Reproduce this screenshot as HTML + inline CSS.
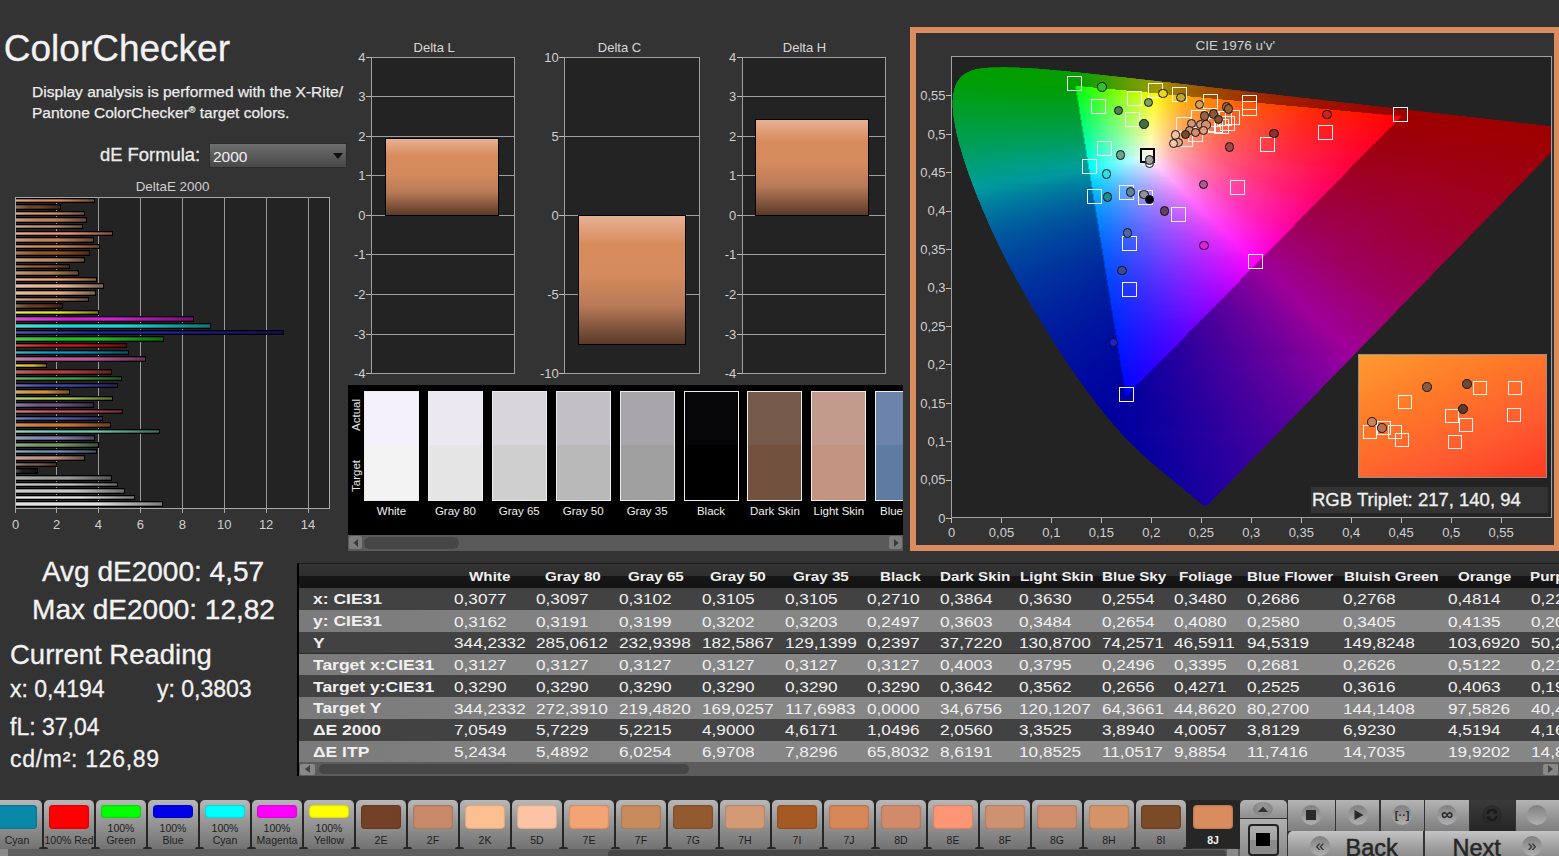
<!DOCTYPE html><html><head><meta charset="utf-8"><title>ColorChecker</title><style>
html,body{margin:0;padding:0;}body{width:1559px;height:856px;overflow:hidden;background:#333333;position:relative;font-family:"Liberation Sans", sans-serif;}
.a{position:absolute;box-sizing:border-box;}.t{position:absolute;white-space:nowrap;line-height:1;}
</style></head><body>
<div class="t" style="left:3.8px;top:29.7px;font-size:37px;color:#f2f2f2;-webkit-text-stroke:0.3px #f2f2f2;">ColorChecker</div>
<div class="t" style="left:32.0px;top:84.4px;font-size:15.5px;color:#ececec;-webkit-text-stroke:0.25px #ececec;">Display analysis is performed with the X-Rite/</div>
<div class="t" style="left:32.0px;top:104.9px;font-size:15.5px;color:#ececec;-webkit-text-stroke:0.25px #ececec;">Pantone ColorChecker<sup style="font-size:9px;vertical-align:5px">&reg;</sup> target colors.</div>
<div class="t" style="left:100.0px;top:146.4px;font-size:18.4px;color:#ececec;-webkit-text-stroke:0.3px #ececec;">dE Formula:</div>
<div class="a" style="left:208.5px;top:142.5px;width:138.5px;height:25.0px;background:linear-gradient(#6e6e6e,#5a5a5a 50%,#484848);border:1px solid #2c2c2c;border-radius:1px;"></div>
<div class="t" style="left:213.0px;top:149.4px;font-size:15.5px;color:#f0f0f0;">2000</div>
<svg class="a" style="left:331.5px;top:152px" width="12" height="8"><path d="M1 1H11L6 7Z" fill="#101010"/></svg>
<div class="t" style="left:-127.5px;width:600px;text-align:center;top:180.2px;font-size:13.4px;color:#d0d0d0;">DeltaE 2000</div>
<div class="a" style="left:14.9px;top:197.0px;width:315.6px;height:311.5px;background:#232323;border:1px solid #a8a8a8;"></div>
<div class="a" style="left:56.0px;top:197.0px;width:1.0px;height:310.5px;background:#9a9a9a;"></div>
<div class="a" style="left:97.9px;top:197.0px;width:1.0px;height:310.5px;background:#9a9a9a;"></div>
<div class="a" style="left:139.9px;top:197.0px;width:1.0px;height:310.5px;background:#9a9a9a;"></div>
<div class="a" style="left:181.8px;top:197.0px;width:1.0px;height:310.5px;background:#9a9a9a;"></div>
<div class="a" style="left:223.7px;top:197.0px;width:1.0px;height:310.5px;background:#9a9a9a;"></div>
<div class="a" style="left:265.6px;top:197.0px;width:1.0px;height:310.5px;background:#9a9a9a;"></div>
<div class="a" style="left:307.5px;top:197.0px;width:1.0px;height:310.5px;background:#9a9a9a;"></div>
<div class="a" style="left:15.0px;top:507.5px;width:1.0px;height:5.0px;background:#a8a8a8;"></div>
<div class="t" style="left:-284.5px;width:600px;text-align:center;top:518.0px;font-size:13px;color:#d0d0d0;">0</div>
<div class="a" style="left:56.0px;top:507.5px;width:1.0px;height:5.0px;background:#a8a8a8;"></div>
<div class="t" style="left:-243.5px;width:600px;text-align:center;top:518.0px;font-size:13px;color:#d0d0d0;">2</div>
<div class="a" style="left:97.9px;top:507.5px;width:1.0px;height:5.0px;background:#a8a8a8;"></div>
<div class="t" style="left:-201.6px;width:600px;text-align:center;top:518.0px;font-size:13px;color:#d0d0d0;">4</div>
<div class="a" style="left:139.9px;top:507.5px;width:1.0px;height:5.0px;background:#a8a8a8;"></div>
<div class="t" style="left:-159.6px;width:600px;text-align:center;top:518.0px;font-size:13px;color:#d0d0d0;">6</div>
<div class="a" style="left:181.8px;top:507.5px;width:1.0px;height:5.0px;background:#a8a8a8;"></div>
<div class="t" style="left:-117.7px;width:600px;text-align:center;top:518.0px;font-size:13px;color:#d0d0d0;">8</div>
<div class="a" style="left:223.7px;top:507.5px;width:1.0px;height:5.0px;background:#a8a8a8;"></div>
<div class="t" style="left:-75.8px;width:600px;text-align:center;top:518.0px;font-size:13px;color:#d0d0d0;">10</div>
<div class="a" style="left:265.6px;top:507.5px;width:1.0px;height:5.0px;background:#a8a8a8;"></div>
<div class="t" style="left:-33.9px;width:600px;text-align:center;top:518.0px;font-size:13px;color:#d0d0d0;">12</div>
<div class="a" style="left:307.5px;top:507.5px;width:1.0px;height:5.0px;background:#a8a8a8;"></div>
<div class="t" style="left:8.0px;width:600px;text-align:center;top:518.0px;font-size:13px;color:#d0d0d0;">14</div>
<div class="a" style="left:16.0px;top:197.5px;width:78.5px;height:5.6px;background:linear-gradient(180deg,rgba(0,0,0,.5) 0%,rgba(0,0,0,0) 45%,rgba(0,0,0,0) 55%,rgba(0,0,0,.5) 100%),linear-gradient(90deg,#e1a886 0%,#d88c5e 30%,#d88c5e 55%,#764d33 100%);border:1px solid #000;border-left:none;"></div>
<div class="a" style="left:16.0px;top:204.1px;width:45.4px;height:5.6px;background:linear-gradient(180deg,rgba(0,0,0,.5) 0%,rgba(0,0,0,0) 45%,rgba(0,0,0,0) 55%,rgba(0,0,0,.5) 100%),linear-gradient(90deg,#9c775c 0%,#7b4a26 30%,#7b4a26 55%,#432814 100%);border:1px solid #000;border-left:none;"></div>
<div class="a" style="left:16.0px;top:210.7px;width:68.7px;height:5.6px;background:linear-gradient(180deg,rgba(0,0,0,.5) 0%,rgba(0,0,0,0) 45%,rgba(0,0,0,0) 55%,rgba(0,0,0,.5) 100%),linear-gradient(90deg,#deae8d 0%,#d49468 30%,#d49468 55%,#745139 100%);border:1px solid #000;border-left:none;"></div>
<div class="a" style="left:16.0px;top:217.3px;width:71.2px;height:5.6px;background:linear-gradient(180deg,rgba(0,0,0,.5) 0%,rgba(0,0,0,0) 45%,rgba(0,0,0,0) 55%,rgba(0,0,0,.5) 100%),linear-gradient(90deg,#dbaa90 0%,#cf8e6c 30%,#cf8e6c 55%,#714e3b 100%);border:1px solid #000;border-left:none;"></div>
<div class="a" style="left:16.0px;top:223.9px;width:66.8px;height:5.6px;background:linear-gradient(180deg,rgba(0,0,0,.5) 0%,rgba(0,0,0,0) 45%,rgba(0,0,0,0) 55%,rgba(0,0,0,.5) 100%),linear-gradient(90deg,#dbad93 0%,#cf9270 30%,#cf9270 55%,#71503d 100%);border:1px solid #000;border-left:none;"></div>
<div class="a" style="left:16.0px;top:230.5px;width:96.6px;height:5.6px;background:linear-gradient(180deg,rgba(0,0,0,.5) 0%,rgba(0,0,0,0) 45%,rgba(0,0,0,0) 55%,rgba(0,0,0,.5) 100%),linear-gradient(90deg,#fcb096 0%,#fc9674 30%,#fc9674 55%,#8a523f 100%);border:1px solid #000;border-left:none;"></div>
<div class="a" style="left:16.0px;top:237.1px;width:77.7px;height:5.6px;background:linear-gradient(180deg,rgba(0,0,0,.5) 0%,rgba(0,0,0,0) 45%,rgba(0,0,0,0) 55%,rgba(0,0,0,.5) 100%),linear-gradient(90deg,#dda88e 0%,#d28b69 30%,#d28b69 55%,#734c39 100%);border:1px solid #000;border-left:none;"></div>
<div class="a" style="left:16.0px;top:243.7px;width:83.6px;height:5.6px;background:linear-gradient(180deg,rgba(0,0,0,.5) 0%,rgba(0,0,0,0) 45%,rgba(0,0,0,0) 55%,rgba(0,0,0,.5) 100%),linear-gradient(90deg,#e1a581 0%,#d88758 30%,#d88758 55%,#764a30 100%);border:1px solid #000;border-left:none;"></div>
<div class="a" style="left:16.0px;top:250.4px;width:73.7px;height:5.6px;background:linear-gradient(180deg,rgba(0,0,0,.5) 0%,rgba(0,0,0,0) 45%,rgba(0,0,0,0) 55%,rgba(0,0,0,.5) 100%),linear-gradient(90deg,#bb835a 0%,#a55a24 30%,#a55a24 55%,#5a3113 100%);border:1px solid #000;border-left:none;"></div>
<div class="a" style="left:16.0px;top:257.0px;width:68.7px;height:5.6px;background:linear-gradient(180deg,rgba(0,0,0,.5) 0%,rgba(0,0,0,0) 45%,rgba(0,0,0,0) 55%,rgba(0,0,0,.5) 100%),linear-gradient(90deg,#deb396 0%,#d49a74 30%,#d49a74 55%,#74543f 100%);border:1px solid #000;border-left:none;"></div>
<div class="a" style="left:16.0px;top:263.6px;width:53.8px;height:5.6px;background:linear-gradient(180deg,rgba(0,0,0,.5) 0%,rgba(0,0,0,0) 45%,rgba(0,0,0,0) 55%,rgba(0,0,0,.5) 100%),linear-gradient(90deg,#ae8363 0%,#935a30 30%,#935a30 55%,#50311a 100%);border:1px solid #000;border-left:none;"></div>
<div class="a" style="left:16.0px;top:270.2px;width:62.8px;height:5.6px;background:linear-gradient(180deg,rgba(0,0,0,.5) 0%,rgba(0,0,0,0) 45%,rgba(0,0,0,0) 55%,rgba(0,0,0,.5) 100%),linear-gradient(90deg,#d5a884 0%,#c88c5c 30%,#c88c5c 55%,#6e4d32 100%);border:1px solid #000;border-left:none;"></div>
<div class="a" style="left:16.0px;top:276.8px;width:80.6px;height:5.6px;background:linear-gradient(180deg,rgba(0,0,0,.5) 0%,rgba(0,0,0,0) 45%,rgba(0,0,0,0) 55%,rgba(0,0,0,.5) 100%),linear-gradient(90deg,#f6ba96 0%,#f4a474 30%,#f4a474 55%,#865a3f 100%);border:1px solid #000;border-left:none;"></div>
<div class="a" style="left:16.0px;top:283.4px;width:87.6px;height:5.6px;background:linear-gradient(180deg,rgba(0,0,0,.5) 0%,rgba(0,0,0,0) 45%,rgba(0,0,0,0) 55%,rgba(0,0,0,.5) 100%),linear-gradient(90deg,#fcd2ba 0%,#fcc4a4 30%,#fcc4a4 55%,#8a6b5a 100%);border:1px solid #000;border-left:none;"></div>
<div class="a" style="left:16.0px;top:290.0px;width:80.2px;height:5.6px;background:linear-gradient(180deg,rgba(0,0,0,.5) 0%,rgba(0,0,0,0) 45%,rgba(0,0,0,0) 55%,rgba(0,0,0,.5) 100%),linear-gradient(90deg,#fccfab 0%,#fcc090 30%,#fcc090 55%,#8a694f 100%);border:1px solid #000;border-left:none;"></div>
<div class="a" style="left:16.0px;top:296.6px;width:72.7px;height:5.6px;background:linear-gradient(180deg,rgba(0,0,0,.5) 0%,rgba(0,0,0,0) 45%,rgba(0,0,0,0) 55%,rgba(0,0,0,.5) 100%),linear-gradient(90deg,#d5a78d 0%,#c88a68 30%,#c88a68 55%,#6e4b39 100%);border:1px solid #000;border-left:none;"></div>
<div class="a" style="left:16.0px;top:303.2px;width:46.9px;height:5.6px;background:linear-gradient(180deg,rgba(0,0,0,.5) 0%,rgba(0,0,0,0) 45%,rgba(0,0,0,0) 55%,rgba(0,0,0,.5) 100%),linear-gradient(90deg,#966f5d 0%,#744028 30%,#744028 55%,#3f2316 100%);border:1px solid #000;border-left:none;"></div>
<div class="a" style="left:16.0px;top:309.8px;width:82.7px;height:5.6px;background:linear-gradient(180deg,rgba(0,0,0,.5) 0%,rgba(0,0,0,0) 45%,rgba(0,0,0,0) 55%,rgba(0,0,0,.5) 100%),linear-gradient(90deg,#ede757 0%,#e8e020 30%,#e8e020 55%,#7f7b11 100%);border:1px solid #000;border-left:none;"></div>
<div class="a" style="left:16.0px;top:316.4px;width:178.1px;height:5.6px;background:linear-gradient(180deg,rgba(0,0,0,.5) 0%,rgba(0,0,0,0) 45%,rgba(0,0,0,0) 55%,rgba(0,0,0,.5) 100%),linear-gradient(90deg,#ed57ed 0%,#e820e8 30%,#e820e8 55%,#7f117f 100%);border:1px solid #000;border-left:none;"></div>
<div class="a" style="left:16.0px;top:323.0px;width:195.1px;height:5.6px;background:linear-gradient(180deg,rgba(0,0,0,.5) 0%,rgba(0,0,0,0) 45%,rgba(0,0,0,0) 55%,rgba(0,0,0,.5) 100%),linear-gradient(90deg,#57eded 0%,#20e8e8 30%,#20e8e8 55%,#117f7f 100%);border:1px solid #000;border-left:none;"></div>
<div class="a" style="left:16.0px;top:329.6px;width:268.0px;height:5.6px;background:linear-gradient(180deg,rgba(0,0,0,.5) 0%,rgba(0,0,0,0) 45%,rgba(0,0,0,0) 55%,rgba(0,0,0,.5) 100%),linear-gradient(90deg,#5757b7 0%,#2020a0 30%,#2020a0 55%,#111158 100%);border:1px solid #000;border-left:none;"></div>
<div class="a" style="left:16.0px;top:336.2px;width:147.9px;height:5.6px;background:linear-gradient(180deg,rgba(0,0,0,.5) 0%,rgba(0,0,0,0) 45%,rgba(0,0,0,0) 55%,rgba(0,0,0,.5) 100%),linear-gradient(90deg,#57db57 0%,#20d020 30%,#20d020 55%,#117211 100%);border:1px solid #000;border-left:none;"></div>
<div class="a" style="left:16.0px;top:342.9px;width:110.6px;height:5.6px;background:linear-gradient(180deg,rgba(0,0,0,.5) 0%,rgba(0,0,0,0) 45%,rgba(0,0,0,0) 55%,rgba(0,0,0,.5) 100%),linear-gradient(90deg,#db5151 0%,#d01818 30%,#d01818 55%,#720d0d 100%);border:1px solid #000;border-left:none;"></div>
<div class="a" style="left:16.0px;top:349.5px;width:112.7px;height:5.6px;background:linear-gradient(180deg,rgba(0,0,0,.5) 0%,rgba(0,0,0,0) 45%,rgba(0,0,0,0) 55%,rgba(0,0,0,.5) 100%),linear-gradient(90deg,#47b1cf 0%,#0a98c0 30%,#0a98c0 55%,#055369 100%);border:1px solid #000;border-left:none;"></div>
<div class="a" style="left:16.0px;top:356.1px;width:129.7px;height:5.6px;background:linear-gradient(180deg,rgba(0,0,0,.5) 0%,rgba(0,0,0,0) 45%,rgba(0,0,0,0) 55%,rgba(0,0,0,.5) 100%),linear-gradient(90deg,#db87bd 0%,#d060a8 30%,#d060a8 55%,#72345c 100%);border:1px solid #000;border-left:none;"></div>
<div class="a" style="left:16.0px;top:362.7px;width:30.7px;height:5.6px;background:linear-gradient(180deg,rgba(0,0,0,.5) 0%,rgba(0,0,0,0) 45%,rgba(0,0,0,0) 55%,rgba(0,0,0,.5) 100%),linear-gradient(90deg,#edd557 0%,#e7c71f 30%,#e7c71f 55%,#7f6d11 100%);border:1px solid #000;border-left:none;"></div>
<div class="a" style="left:16.0px;top:369.3px;width:95.7px;height:5.6px;background:linear-gradient(180deg,rgba(0,0,0,.5) 0%,rgba(0,0,0,0) 45%,rgba(0,0,0,0) 55%,rgba(0,0,0,.5) 100%),linear-gradient(90deg,#cf6f75 0%,#c04048 30%,#c04048 55%,#692327 100%);border:1px solid #000;border-left:none;"></div>
<div class="a" style="left:16.0px;top:375.9px;width:105.8px;height:5.6px;background:linear-gradient(180deg,rgba(0,0,0,.5) 0%,rgba(0,0,0,0) 45%,rgba(0,0,0,0) 55%,rgba(0,0,0,.5) 100%),linear-gradient(90deg,#74b776 0%,#46a049 30%,#46a049 55%,#265828 100%);border:1px solid #000;border-left:none;"></div>
<div class="a" style="left:16.0px;top:382.5px;width:102.0px;height:5.6px;background:linear-gradient(180deg,rgba(0,0,0,.5) 0%,rgba(0,0,0,0) 45%,rgba(0,0,0,0) 55%,rgba(0,0,0,.5) 100%),linear-gradient(90deg,#6f75bd 0%,#4048a8 30%,#4048a8 55%,#23275c 100%);border:1px solid #000;border-left:none;"></div>
<div class="a" style="left:16.0px;top:389.1px;width:53.8px;height:5.6px;background:linear-gradient(180deg,rgba(0,0,0,.5) 0%,rgba(0,0,0,0) 45%,rgba(0,0,0,0) 55%,rgba(0,0,0,.5) 100%),linear-gradient(90deg,#e7b76f 0%,#e0a040 30%,#e0a040 55%,#7b5823 100%);border:1px solid #000;border-left:none;"></div>
<div class="a" style="left:16.0px;top:395.7px;width:97.0px;height:5.6px;background:linear-gradient(180deg,rgba(0,0,0,.5) 0%,rgba(0,0,0,0) 45%,rgba(0,0,0,0) 55%,rgba(0,0,0,.5) 100%),linear-gradient(90deg,#bdd57b 0%,#a8c850 30%,#a8c850 55%,#5c6e2c 100%);border:1px solid #000;border-left:none;"></div>
<div class="a" style="left:16.0px;top:402.3px;width:77.7px;height:5.6px;background:linear-gradient(180deg,rgba(0,0,0,.5) 0%,rgba(0,0,0,0) 45%,rgba(0,0,0,0) 55%,rgba(0,0,0,.5) 100%),linear-gradient(90deg,#9b83ab 0%,#7a5a90 30%,#7a5a90 55%,#43314f 100%);border:1px solid #000;border-left:none;"></div>
<div class="a" style="left:16.0px;top:408.9px;width:106.8px;height:5.6px;background:linear-gradient(180deg,rgba(0,0,0,.5) 0%,rgba(0,0,0,0) 45%,rgba(0,0,0,0) 55%,rgba(0,0,0,.5) 100%),linear-gradient(90deg,#d57b87 0%,#c85060 30%,#c85060 55%,#6e2c34 100%);border:1px solid #000;border-left:none;"></div>
<div class="a" style="left:16.0px;top:415.5px;width:86.9px;height:5.6px;background:linear-gradient(180deg,rgba(0,0,0,.5) 0%,rgba(0,0,0,0) 45%,rgba(0,0,0,0) 55%,rgba(0,0,0,.5) 100%),linear-gradient(90deg,#7b87c3 0%,#5060b0 30%,#5060b0 55%,#2c3460 100%);border:1px solid #000;border-left:none;"></div>
<div class="a" style="left:16.0px;top:422.1px;width:94.7px;height:5.6px;background:linear-gradient(180deg,rgba(0,0,0,.5) 0%,rgba(0,0,0,0) 45%,rgba(0,0,0,0) 55%,rgba(0,0,0,.5) 100%),linear-gradient(90deg,#e79f63 0%,#e08030 30%,#e08030 55%,#7b461a 100%);border:1px solid #000;border-left:none;"></div>
<div class="a" style="left:16.0px;top:428.7px;width:143.9px;height:5.6px;background:linear-gradient(180deg,rgba(0,0,0,.5) 0%,rgba(0,0,0,0) 45%,rgba(0,0,0,0) 55%,rgba(0,0,0,.5) 100%),linear-gradient(90deg,#93d5c3 0%,#70c8b0 30%,#70c8b0 55%,#3d6e60 100%);border:1px solid #000;border-left:none;"></div>
<div class="a" style="left:16.0px;top:435.4px;width:78.5px;height:5.6px;background:linear-gradient(180deg,rgba(0,0,0,.5) 0%,rgba(0,0,0,0) 45%,rgba(0,0,0,0) 55%,rgba(0,0,0,.5) 100%),linear-gradient(90deg,#ababcf 0%,#9090c0 30%,#9090c0 55%,#4f4f69 100%);border:1px solid #000;border-left:none;"></div>
<div class="a" style="left:16.0px;top:442.0px;width:82.7px;height:5.6px;background:linear-gradient(180deg,rgba(0,0,0,.5) 0%,rgba(0,0,0,0) 45%,rgba(0,0,0,0) 55%,rgba(0,0,0,.5) 100%),linear-gradient(90deg,#9fb793 0%,#80a070 30%,#80a070 55%,#46583d 100%);border:1px solid #000;border-left:none;"></div>
<div class="a" style="left:16.0px;top:448.6px;width:80.8px;height:5.6px;background:linear-gradient(180deg,rgba(0,0,0,.5) 0%,rgba(0,0,0,0) 45%,rgba(0,0,0,0) 55%,rgba(0,0,0,.5) 100%),linear-gradient(90deg,#93abc9 0%,#7090b8 30%,#7090b8 55%,#3d4f65 100%);border:1px solid #000;border-left:none;"></div>
<div class="a" style="left:16.0px;top:455.2px;width:68.7px;height:5.6px;background:linear-gradient(180deg,rgba(0,0,0,.5) 0%,rgba(0,0,0,0) 45%,rgba(0,0,0,0) 55%,rgba(0,0,0,.5) 100%),linear-gradient(90deg,#dbb7ab 0%,#d0a090 30%,#d0a090 55%,#72584f 100%);border:1px solid #000;border-left:none;"></div>
<div class="a" style="left:16.0px;top:461.8px;width:41.4px;height:5.6px;background:linear-gradient(180deg,rgba(0,0,0,.5) 0%,rgba(0,0,0,0) 45%,rgba(0,0,0,0) 55%,rgba(0,0,0,.5) 100%),linear-gradient(90deg,#9f877b 0%,#806050 30%,#806050 55%,#46342c 100%);border:1px solid #000;border-left:none;"></div>
<div class="a" style="left:16.0px;top:468.4px;width:21.9px;height:5.6px;background:linear-gradient(180deg,rgba(0,0,0,.5) 0%,rgba(0,0,0,0) 45%,rgba(0,0,0,0) 55%,rgba(0,0,0,.5) 100%),linear-gradient(90deg,#575757 0%,#202020 30%,#202020 55%,#111111 100%);border:1px solid #000;border-left:none;"></div>
<div class="a" style="left:16.0px;top:475.0px;width:95.7px;height:5.6px;background:linear-gradient(180deg,rgba(0,0,0,.5) 0%,rgba(0,0,0,0) 45%,rgba(0,0,0,0) 55%,rgba(0,0,0,.5) 100%),linear-gradient(90deg,#bdbdbd 0%,#a8a8a8 30%,#a8a8a8 55%,#5c5c5c 100%);border:1px solid #000;border-left:none;"></div>
<div class="a" style="left:16.0px;top:481.6px;width:102.0px;height:5.6px;background:linear-gradient(180deg,rgba(0,0,0,.5) 0%,rgba(0,0,0,0) 45%,rgba(0,0,0,0) 55%,rgba(0,0,0,.5) 100%),linear-gradient(90deg,#cfcfcf 0%,#c0c0c0 30%,#c0c0c0 55%,#696969 100%);border:1px solid #000;border-left:none;"></div>
<div class="a" style="left:16.0px;top:488.2px;width:108.7px;height:5.6px;background:linear-gradient(180deg,rgba(0,0,0,.5) 0%,rgba(0,0,0,0) 45%,rgba(0,0,0,0) 55%,rgba(0,0,0,.5) 100%),linear-gradient(90deg,#e1e1e1 0%,#d8d8d8 30%,#d8d8d8 55%,#767676 100%);border:1px solid #000;border-left:none;"></div>
<div class="a" style="left:16.0px;top:494.8px;width:118.8px;height:5.6px;background:linear-gradient(180deg,rgba(0,0,0,.5) 0%,rgba(0,0,0,0) 45%,rgba(0,0,0,0) 55%,rgba(0,0,0,.5) 100%),linear-gradient(90deg,#ededed 0%,#e8e8e8 30%,#e8e8e8 55%,#7f7f7f 100%);border:1px solid #000;border-left:none;"></div>
<div class="a" style="left:16.0px;top:501.4px;width:146.9px;height:5.6px;background:linear-gradient(180deg,rgba(0,0,0,.5) 0%,rgba(0,0,0,0) 45%,rgba(0,0,0,0) 55%,rgba(0,0,0,.5) 100%),linear-gradient(90deg,#f9f9f9 0%,#f8f8f8 30%,#f8f8f8 55%,#888888 100%);border:1px solid #000;border-left:none;"></div>
<div class="t" style="left:134.2px;width:600px;text-align:center;top:40.8px;font-size:13px;color:#d8d8d8;">Delta L</div>
<div class="a" style="left:371.0px;top:56.7px;width:144.0px;height:317.3px;background:#232323;border:1px solid #a0a0a0;"></div>
<div class="a" style="left:366.0px;top:56.7px;width:5.0px;height:1.0px;background:#c0c0c0;"></div>
<div class="t" style="left:-234.5px;width:600px;text-align:right;top:50.7px;font-size:13px;color:#d0d0d0;">4</div>
<div class="a" style="left:371.0px;top:96.2px;width:143.0px;height:1.0px;background:#a0a0a0;"></div>
<div class="a" style="left:366.0px;top:96.2px;width:5.0px;height:1.0px;background:#c0c0c0;"></div>
<div class="t" style="left:-234.5px;width:600px;text-align:right;top:90.2px;font-size:13px;color:#d0d0d0;">3</div>
<div class="a" style="left:371.0px;top:135.8px;width:143.0px;height:1.0px;background:#a0a0a0;"></div>
<div class="a" style="left:366.0px;top:135.8px;width:5.0px;height:1.0px;background:#c0c0c0;"></div>
<div class="t" style="left:-234.5px;width:600px;text-align:right;top:129.8px;font-size:13px;color:#d0d0d0;">2</div>
<div class="a" style="left:371.0px;top:175.3px;width:143.0px;height:1.0px;background:#a0a0a0;"></div>
<div class="a" style="left:366.0px;top:175.3px;width:5.0px;height:1.0px;background:#c0c0c0;"></div>
<div class="t" style="left:-234.5px;width:600px;text-align:right;top:169.3px;font-size:13px;color:#d0d0d0;">1</div>
<div class="a" style="left:371.0px;top:214.9px;width:143.0px;height:1.0px;background:#a0a0a0;"></div>
<div class="a" style="left:366.0px;top:214.9px;width:5.0px;height:1.0px;background:#c0c0c0;"></div>
<div class="t" style="left:-234.5px;width:600px;text-align:right;top:208.8px;font-size:13px;color:#d0d0d0;">0</div>
<div class="a" style="left:371.0px;top:254.4px;width:143.0px;height:1.0px;background:#a0a0a0;"></div>
<div class="a" style="left:366.0px;top:254.4px;width:5.0px;height:1.0px;background:#c0c0c0;"></div>
<div class="t" style="left:-234.5px;width:600px;text-align:right;top:248.4px;font-size:13px;color:#d0d0d0;">-1</div>
<div class="a" style="left:371.0px;top:293.9px;width:143.0px;height:1.0px;background:#a0a0a0;"></div>
<div class="a" style="left:366.0px;top:293.9px;width:5.0px;height:1.0px;background:#c0c0c0;"></div>
<div class="t" style="left:-234.5px;width:600px;text-align:right;top:287.9px;font-size:13px;color:#d0d0d0;">-2</div>
<div class="a" style="left:371.0px;top:333.5px;width:143.0px;height:1.0px;background:#a0a0a0;"></div>
<div class="a" style="left:366.0px;top:333.5px;width:5.0px;height:1.0px;background:#c0c0c0;"></div>
<div class="t" style="left:-234.5px;width:600px;text-align:right;top:327.5px;font-size:13px;color:#d0d0d0;">-3</div>
<div class="a" style="left:366.0px;top:373.0px;width:5.0px;height:1.0px;background:#c0c0c0;"></div>
<div class="t" style="left:-234.5px;width:600px;text-align:right;top:367.0px;font-size:13px;color:#d0d0d0;">-4</div>
<div class="a" style="left:385.4px;top:138.0px;width:114.1px;height:78.0px;background:linear-gradient(#e8b194 0%,#d88c5e 22%,#d68b5e 45%,#b87a58 70%,#5a3a28 100%);border:1px solid #000;"></div>
<div class="t" style="left:319.5px;width:600px;text-align:center;top:40.8px;font-size:13px;color:#d8d8d8;">Delta C</div>
<div class="a" style="left:564.3px;top:56.7px;width:135.7px;height:317.3px;background:#232323;border:1px solid #a0a0a0;"></div>
<div class="a" style="left:559.3px;top:56.7px;width:5.0px;height:1.0px;background:#c0c0c0;"></div>
<div class="t" style="left:-41.2px;width:600px;text-align:right;top:50.7px;font-size:13px;color:#d0d0d0;">10</div>
<div class="a" style="left:564.3px;top:135.8px;width:134.7px;height:1.0px;background:#a0a0a0;"></div>
<div class="a" style="left:559.3px;top:135.8px;width:5.0px;height:1.0px;background:#c0c0c0;"></div>
<div class="t" style="left:-41.2px;width:600px;text-align:right;top:129.8px;font-size:13px;color:#d0d0d0;">5</div>
<div class="a" style="left:564.3px;top:214.9px;width:134.7px;height:1.0px;background:#a0a0a0;"></div>
<div class="a" style="left:559.3px;top:214.9px;width:5.0px;height:1.0px;background:#c0c0c0;"></div>
<div class="t" style="left:-41.2px;width:600px;text-align:right;top:208.8px;font-size:13px;color:#d0d0d0;">0</div>
<div class="a" style="left:564.3px;top:293.9px;width:134.7px;height:1.0px;background:#a0a0a0;"></div>
<div class="a" style="left:559.3px;top:293.9px;width:5.0px;height:1.0px;background:#c0c0c0;"></div>
<div class="t" style="left:-41.2px;width:600px;text-align:right;top:287.9px;font-size:13px;color:#d0d0d0;">-5</div>
<div class="a" style="left:559.3px;top:373.0px;width:5.0px;height:1.0px;background:#c0c0c0;"></div>
<div class="t" style="left:-41.2px;width:600px;text-align:right;top:367.0px;font-size:13px;color:#d0d0d0;">-10</div>
<div class="a" style="left:578.3px;top:214.5px;width:107.5px;height:130.5px;background:linear-gradient(#e8b194 0%,#d88c5e 22%,#d68b5e 45%,#b87a58 70%,#5a3a28 100%);border:1px solid #000;"></div>
<div class="t" style="left:504.5px;width:600px;text-align:center;top:40.8px;font-size:13px;color:#d8d8d8;">Delta H</div>
<div class="a" style="left:741.8px;top:56.7px;width:143.8px;height:317.3px;background:#232323;border:1px solid #a0a0a0;"></div>
<div class="a" style="left:736.8px;top:56.7px;width:5.0px;height:1.0px;background:#c0c0c0;"></div>
<div class="t" style="left:136.3px;width:600px;text-align:right;top:50.7px;font-size:13px;color:#d0d0d0;">4</div>
<div class="a" style="left:741.8px;top:96.2px;width:142.8px;height:1.0px;background:#a0a0a0;"></div>
<div class="a" style="left:736.8px;top:96.2px;width:5.0px;height:1.0px;background:#c0c0c0;"></div>
<div class="t" style="left:136.3px;width:600px;text-align:right;top:90.2px;font-size:13px;color:#d0d0d0;">3</div>
<div class="a" style="left:741.8px;top:135.8px;width:142.8px;height:1.0px;background:#a0a0a0;"></div>
<div class="a" style="left:736.8px;top:135.8px;width:5.0px;height:1.0px;background:#c0c0c0;"></div>
<div class="t" style="left:136.3px;width:600px;text-align:right;top:129.8px;font-size:13px;color:#d0d0d0;">2</div>
<div class="a" style="left:741.8px;top:175.3px;width:142.8px;height:1.0px;background:#a0a0a0;"></div>
<div class="a" style="left:736.8px;top:175.3px;width:5.0px;height:1.0px;background:#c0c0c0;"></div>
<div class="t" style="left:136.3px;width:600px;text-align:right;top:169.3px;font-size:13px;color:#d0d0d0;">1</div>
<div class="a" style="left:741.8px;top:214.9px;width:142.8px;height:1.0px;background:#a0a0a0;"></div>
<div class="a" style="left:736.8px;top:214.9px;width:5.0px;height:1.0px;background:#c0c0c0;"></div>
<div class="t" style="left:136.3px;width:600px;text-align:right;top:208.8px;font-size:13px;color:#d0d0d0;">0</div>
<div class="a" style="left:741.8px;top:254.4px;width:142.8px;height:1.0px;background:#a0a0a0;"></div>
<div class="a" style="left:736.8px;top:254.4px;width:5.0px;height:1.0px;background:#c0c0c0;"></div>
<div class="t" style="left:136.3px;width:600px;text-align:right;top:248.4px;font-size:13px;color:#d0d0d0;">-1</div>
<div class="a" style="left:741.8px;top:293.9px;width:142.8px;height:1.0px;background:#a0a0a0;"></div>
<div class="a" style="left:736.8px;top:293.9px;width:5.0px;height:1.0px;background:#c0c0c0;"></div>
<div class="t" style="left:136.3px;width:600px;text-align:right;top:287.9px;font-size:13px;color:#d0d0d0;">-2</div>
<div class="a" style="left:741.8px;top:333.5px;width:142.8px;height:1.0px;background:#a0a0a0;"></div>
<div class="a" style="left:736.8px;top:333.5px;width:5.0px;height:1.0px;background:#c0c0c0;"></div>
<div class="t" style="left:136.3px;width:600px;text-align:right;top:327.5px;font-size:13px;color:#d0d0d0;">-3</div>
<div class="a" style="left:736.8px;top:373.0px;width:5.0px;height:1.0px;background:#c0c0c0;"></div>
<div class="t" style="left:136.3px;width:600px;text-align:right;top:367.0px;font-size:13px;color:#d0d0d0;">-4</div>
<div class="a" style="left:755.2px;top:119.0px;width:114.3px;height:97.0px;background:linear-gradient(#e8b194 0%,#d88c5e 22%,#d68b5e 45%,#b87a58 70%,#5a3a28 100%);border:1px solid #000;"></div>
<div class="a" style="left:0;top:0;width:1559px;height:856px;clip-path:inset(385px 656px 321px 348px)">
<div class="a" style="left:348.0px;top:385.0px;width:555.0px;height:150.0px;background:#000;"></div>
<div class="t" style="left:357.3px;top:415px;font-size:11.5px;color:#e8e8e8;transform:translate(-50%,-50%) rotate(-90deg);">Actual</div>
<div class="t" style="left:357.3px;top:476px;font-size:11.5px;color:#e8e8e8;transform:translate(-50%,-50%) rotate(-90deg);">Target</div>
<div class="a" style="left:364.0px;top:391.0px;width:55.0px;height:110.0px;background:linear-gradient(#f4f1fc 0,#f4f1fc 49.5%,#f3f3f3 49.5%,#f3f3f3 100%);border:1px solid #ececec;"></div>
<div class="t" style="left:91.5px;width:600px;text-align:center;top:505.8px;font-size:11.5px;color:#f0f0f0;">White</div>
<div class="a" style="left:427.9px;top:391.0px;width:55.0px;height:110.0px;background:linear-gradient(#ece8f1 0,#ece8f1 49.5%,#e5e5e5 49.5%,#e5e5e5 100%);border:1px solid #ececec;"></div>
<div class="t" style="left:155.4px;width:600px;text-align:center;top:505.8px;font-size:11.5px;color:#f0f0f0;">Gray 80</div>
<div class="a" style="left:491.8px;top:391.0px;width:55.0px;height:110.0px;background:linear-gradient(#d8d5dc 0,#d8d5dc 49.5%,#cfcfcf 49.5%,#cfcfcf 100%);border:1px solid #ececec;"></div>
<div class="t" style="left:219.3px;width:600px;text-align:center;top:505.8px;font-size:11.5px;color:#f0f0f0;">Gray 65</div>
<div class="a" style="left:555.7px;top:391.0px;width:55.0px;height:110.0px;background:linear-gradient(#c2bfc6 0,#c2bfc6 49.5%,#b9b9b9 49.5%,#b9b9b9 100%);border:1px solid #ececec;"></div>
<div class="t" style="left:283.2px;width:600px;text-align:center;top:505.8px;font-size:11.5px;color:#f0f0f0;">Gray 50</div>
<div class="a" style="left:619.6px;top:391.0px;width:55.0px;height:110.0px;background:linear-gradient(#a8a6aa 0,#a8a6aa 49.5%,#9f9f9f 49.5%,#9f9f9f 100%);border:1px solid #ececec;"></div>
<div class="t" style="left:347.1px;width:600px;text-align:center;top:505.8px;font-size:11.5px;color:#f0f0f0;">Gray 35</div>
<div class="a" style="left:683.5px;top:391.0px;width:55.0px;height:110.0px;background:linear-gradient(#060608 0,#060608 49.5%,#000000 49.5%,#000000 100%);border:1px solid #ececec;"></div>
<div class="t" style="left:411.0px;width:600px;text-align:center;top:505.8px;font-size:11.5px;color:#f0f0f0;">Black</div>
<div class="a" style="left:747.4px;top:391.0px;width:55.0px;height:110.0px;background:linear-gradient(#755a4b 0,#755a4b 49.5%,#72523f 49.5%,#72523f 100%);border:1px solid #ececec;"></div>
<div class="t" style="left:474.9px;width:600px;text-align:center;top:505.8px;font-size:11.5px;color:#f0f0f0;">Dark Skin</div>
<div class="a" style="left:811.3px;top:391.0px;width:55.0px;height:110.0px;background:linear-gradient(#c29b8d 0,#c29b8d 49.5%,#c29480 49.5%,#c29480 100%);border:1px solid #ececec;"></div>
<div class="t" style="left:538.8px;width:600px;text-align:center;top:505.8px;font-size:11.5px;color:#f0f0f0;">Light Skin</div>
<div class="a" style="left:875.2px;top:391.0px;width:27.8px;height:110.0px;background:linear-gradient(#6c84aa 0,#6c84aa 49.5%,#5e7ca2 49.5%,#5e7ca2 100%);border:1px solid #ececec;border-right:none;"></div>
<div class="t" style="left:602.7px;width:600px;text-align:center;top:505.8px;font-size:11.5px;color:#f0f0f0;">Blue Sky</div>
</div>
<div class="a" style="left:348.0px;top:534.5px;width:555.0px;height:16.3px;background:#5a5a5a;"></div>
<div class="a" style="left:349.0px;top:536.0px;width:13.0px;height:13.0px;background:#7c7c7c;border-radius:2px;"></div>
<svg class="a" style="left:352px;top:538px" width="8" height="10"><path d="M6 1V9L1.5 5Z" fill="#3a3a3a"/></svg>
<div class="a" style="left:364.0px;top:536.5px;width:95.0px;height:12.0px;background:#464646;border-radius:6px;"></div>
<div class="a" style="left:889.0px;top:536.0px;width:13.0px;height:13.0px;background:#7c7c7c;border-radius:2px;"></div>
<svg class="a" style="left:892px;top:538px" width="8" height="10"><path d="M2 1V9L6.5 5Z" fill="#3a3a3a"/></svg>
<!--CIE-->
<div class="a" style="left:910.0px;top:27.4px;width:649.5px;height:523.2px;border:6px solid #d98c5e;background:#333;"></div>
<div class="t" style="left:935.3px;width:600px;text-align:center;top:39.2px;font-size:13.5px;color:#d0d0d0;">CIE 1976 u'v'</div>
<div class="a" style="left:951.0px;top:55.8px;width:601.0px;height:462.5px;background:#232323;border:1px solid #a0a0a0;"></div>
<div class="a cie" style="left:951px;top:56px;width:600px;height:462px;overflow:hidden;clip-path:polygon(256.8px 449.2px,256.8px 449.3px,256.7px 449.3px,256.7px 449.4px,256.6px 449.4px,256.5px 449.5px,256.4px 449.5px,256.3px 449.5px,256.2px 449.6px,256.1px 449.6px,256.0px 449.7px,255.8px 449.7px,255.7px 449.8px,255.5px 449.8px,255.4px 449.8px,255.2px 449.8px,255.0px 449.8px,254.8px 449.8px,254.5px 449.8px,254.3px 449.7px,254.0px 449.7px,253.7px 449.7px,253.3px 449.6px,252.8px 449.4px,252.2px 449.0px,251.5px 448.6px,250.7px 448.0px,249.7px 447.4px,248.7px 446.6px,247.5px 445.7px,246.1px 444.6px,244.6px 443.4px,243.0px 442.0px,241.2px 440.5px,239.2px 438.9px,237.1px 437.1px,234.7px 435.1px,231.9px 432.8px,228.8px 430.2px,225.5px 427.5px,222.1px 424.8px,218.9px 422.1px,216.1px 419.8px,213.6px 417.8px,211.5px 416.0px,209.5px 414.4px,207.6px 412.8px,205.6px 411.1px,203.3px 409.2px,200.9px 407.1px,198.5px 404.9px,195.9px 402.6px,193.3px 400.3px,190.5px 397.7px,187.7px 395.1px,184.8px 392.3px,181.9px 389.5px,178.9px 386.5px,175.8px 383.3px,172.5px 379.9px,169.0px 376.0px,165.2px 371.7px,161.3px 367.2px,157.2px 362.4px,152.9px 357.2px,148.6px 351.7px,144.1px 346.0px,139.5px 339.9px,134.7px 333.5px,129.8px 326.8px,124.8px 319.8px,119.8px 312.5px,114.7px 305.0px,109.5px 297.1px,104.2px 288.8px,98.8px 280.3px,93.4px 271.6px,88.1px 262.8px,82.8px 253.9px,77.6px 244.9px,72.3px 235.7px,67.0px 226.4px,61.8px 217.1px,56.8px 207.8px,52.1px 198.7px,47.7px 189.6px,43.4px 180.5px,39.2px 171.5px,35.3px 162.6px,31.6px 154.0px,28.2px 145.7px,24.9px 137.6px,21.9px 129.7px,19.1px 122.1px,16.4px 114.7px,14.1px 107.7px,11.9px 101.0px,10.0px 94.7px,8.3px 88.7px,6.8px 83.0px,5.5px 77.7px,4.4px 72.6px,3.5px 67.8px,2.7px 63.2px,2.1px 59.0px,1.7px 55.1px,1.5px 51.4px,1.4px 48.0px,1.4px 44.6px,1.6px 41.5px,2.0px 38.6px,2.4px 35.9px,3.1px 33.3px,3.8px 31.0px,4.6px 28.7px,5.6px 26.7px,6.7px 24.8px,8.0px 23.0px,9.3px 21.4px,10.8px 20.0px,12.3px 18.7px,13.9px 17.5px,15.6px 16.5px,17.4px 15.6px,19.2px 14.8px,21.2px 14.1px,23.1px 13.5px,25.1px 13.0px,27.2px 12.6px,29.4px 12.3px,31.5px 12.0px,33.8px 11.8px,36.0px 11.6px,38.3px 11.4px,40.6px 11.3px,42.9px 11.2px,45.3px 11.2px,47.7px 11.2px,50.1px 11.1px,52.4px 11.1px,54.8px 11.1px,57.1px 11.2px,59.5px 11.2px,61.9px 11.2px,64.3px 11.3px,66.8px 11.4px,69.2px 11.5px,71.7px 11.6px,74.2px 11.7px,76.7px 11.9px,79.2px 12.0px,81.8px 12.2px,84.4px 12.3px,87.1px 12.5px,89.8px 12.7px,92.5px 12.9px,95.3px 13.2px,98.1px 13.4px,100.9px 13.6px,103.8px 13.9px,106.7px 14.2px,109.7px 14.5px,112.7px 14.7px,115.8px 15.0px,118.9px 15.3px,122.0px 15.7px,125.3px 16.0px,128.5px 16.3px,131.9px 16.7px,135.3px 17.0px,138.7px 17.4px,142.2px 17.8px,145.8px 18.2px,149.4px 18.5px,153.1px 18.9px,156.9px 19.4px,160.7px 19.8px,164.5px 20.2px,168.5px 20.7px,172.5px 21.1px,176.6px 21.6px,180.7px 22.0px,185.0px 22.5px,189.3px 23.0px,193.6px 23.5px,198.1px 24.0px,202.6px 24.5px,207.2px 25.0px,211.8px 25.6px,216.6px 26.1px,221.4px 26.6px,226.2px 27.2px,231.2px 27.8px,236.2px 28.3px,241.3px 28.9px,246.4px 29.5px,251.7px 30.1px,257.0px 30.7px,262.3px 31.4px,267.8px 32.0px,273.3px 32.6px,278.9px 33.3px,284.5px 33.9px,290.2px 34.6px,296.0px 35.2px,301.8px 35.9px,307.6px 36.6px,313.6px 37.2px,319.5px 37.9px,325.5px 38.6px,331.5px 39.3px,337.6px 40.0px,343.7px 40.7px,349.8px 41.4px,355.9px 42.1px,362.0px 42.8px,368.1px 43.5px,373.7px 44.2px,378.8px 44.7px,383.9px 45.3px,389.5px 46.0px,395.8px 46.7px,403.5px 47.6px,412.8px 48.6px,423.7px 49.9px,435.3px 51.2px,447.2px 52.6px,458.7px 53.9px,469.2px 55.1px,478.7px 56.2px,487.8px 57.2px,496.6px 58.2px,504.9px 59.2px,512.8px 60.1px,520.3px 61.0px,527.3px 61.8px,533.8px 62.5px,539.9px 63.2px,545.7px 63.9px,551.2px 64.5px,556.5px 65.1px,561.6px 65.7px,566.4px 66.3px,570.9px 66.8px,575.2px 67.3px,579.3px 67.8px,583.0px 68.2px,586.6px 68.6px,589.8px 69.0px,592.8px 69.3px,595.5px 69.6px,598.1px 69.9px,600.5px 70.2px,602.7px 70.4px,604.5px 70.6px,606.2px 70.8px,607.8px 71.0px,609.3px 71.2px,610.9px 71.4px,612.5px 71.6px,614.2px 71.8px,615.8px 71.9px,617.4px 72.1px,618.7px 72.3px,619.9px 72.4px,620.8px 72.5px,621.6px 72.6px,622.2px 72.7px,622.7px 72.7px,623.1px 72.8px,623.4px 72.8px);">
<style>.cie div{position:absolute}</style>
<div style="left:37px;top:11px;width:32px;height:1px;background:linear-gradient(90deg,#009e00,#009e00 31px)"></div><div style="left:28px;top:12px;width:59px;height:1px;background:linear-gradient(90deg,#009e00,#009e00 58px)"></div><div style="left:23px;top:13px;width:76px;height:1px;background:linear-gradient(90deg,#009e00,#009e00 75px)"></div><div style="left:20px;top:14px;width:90px;height:1px;background:linear-gradient(90deg,#009e00,#009e00 89px)"></div><div style="left:18px;top:15px;width:102px;height:1px;background:linear-gradient(90deg,#009e00,#009e00 101px)"></div><div style="left:16px;top:16px;width:114px;height:1px;background:linear-gradient(90deg,#009e00,#059e00 110px,#0a9e00 113px)"></div><div style="left:14px;top:17px;width:126px;height:1px;background:linear-gradient(90deg,#009e00,#059e00 112px,#1a9e00 125px)"></div><div style="left:12px;top:18px;width:137px;height:1px;background:linear-gradient(90deg,#009e00,#059e00 114px,#289e00 136px)"></div><div style="left:11px;top:19px;width:147px;height:1px;background:linear-gradient(90deg,#009e00,#069e00 116px,#389e00 146px)"></div><div style="left:10px;top:20px;width:157px;height:1px;background:linear-gradient(90deg,#009e02,#069e00 117px,#499e00 156px)"></div><div style="left:9px;top:21px;width:167px;height:1px;background:linear-gradient(90deg,#009e03,#069e00 118px,#5b9e00 166px)"></div><div style="left:8px;top:22px;width:177px;height:1px;background:linear-gradient(90deg,#009e04,#069e00 119px,#6e9e00 176px)"></div><div style="left:8px;top:23px;width:186px;height:1px;background:linear-gradient(90deg,#009e05,#059e00 119px,#7d9e00 183px,#829e00 185px)"></div><div style="left:7px;top:24px;width:196px;height:1px;background:linear-gradient(90deg,#009e06,#059e00 120px,#7d9e00 184px,#989e00 195px)"></div><div style="left:6px;top:25px;width:205px;height:1px;background:linear-gradient(90deg,#009e07,#069e00 122px,#7b9e00 184px,#9e9800 201px,#9e9100 204px)"></div><div style="left:6px;top:26px;width:214px;height:1px;background:linear-gradient(90deg,#009e08,#069e00 122px,#7b9e00 184px,#9e9800 201px,#9e7f00 213px)"></div><div style="left:5px;top:27px;width:224px;height:1px;background:linear-gradient(90deg,#009e0a,#069e00 123px,#7b9e00 185px,#9e9800 202px,#9e7000 223px)"></div><div style="left:5px;top:28px;width:233px;height:1px;background:linear-gradient(90deg,#009e0b,#069e00 123px,#799e00 184px,#9e9700 202px,#9e6300 232px)"></div><div style="left:4px;top:29px;width:242px;height:1px;background:linear-gradient(90deg,#009e0c,#069e00 124px,#799e00 185px,#9e9a00 202px,#9e5e00 237px,#9e5900 241px)"></div><div style="left:4px;top:30px;width:251px;height:1px;background:linear-gradient(90deg,#009e0d,#009e01 120px,#02ff03 121px,#1cff00 128px,#0d9e00 129px,#839e00 189px,#9e9700 203px,#9e5b00 239px,#9e4f00 250px)"></div><div style="left:4px;top:31px;width:260px;height:1px;background:linear-gradient(90deg,#009e0e,#009e03 120px,#01ff07 121px,#3bff01 138px,#1e9e00 139px,#8f9e00 194px,#9e9400 204px,#9e5600 243px,#9e4700 259px)"></div><div style="left:3px;top:32px;width:269px;height:1px;background:linear-gradient(90deg,#009e0f,#009e04 121px,#00ff0b 122px,#5cff00 150px,#319e00 151px,#9e9900 203px,#9e5d00 238px,#9e4000 268px)"></div><div style="left:3px;top:33px;width:278px;height:1px;background:linear-gradient(90deg,#009e10,#009e05 122px,#05ff0e 123px,#7dff00 161px,#469e00 162px,#9e9900 203px,#9e5e00 237px,#9e3a00 277px)"></div><div style="left:3px;top:34px;width:287px;height:1px;background:linear-gradient(90deg,#009e11,#009e07 122px,#04ff11 123px,#9fff00 172px,#5d9e00 173px,#9e9800 203px,#9e5a00 240px,#9e3400 286px)"></div><div style="left:3px;top:35px;width:295px;height:1px;background:linear-gradient(90deg,#009e12,#009e08 122px,#03ff15 123px,#bfff01 182px,#739e00 183px,#9e9800 203px,#9e5b00 239px,#9e2f00 294px)"></div><div style="left:2px;top:36px;width:305px;height:1px;background:linear-gradient(90deg,#009e14,#009e0a 123px,#02ff18 124px,#e5ff00 194px,#8d9e00 195px,#9e9500 205px,#9e5700 243px,#9e2a00 304px)"></div><div style="left:2px;top:37px;width:314px;height:1px;background:linear-gradient(90deg,#009e15,#009e0b 123px,#02ff1b 124px,#fff902 203px,#fff300 205px,#9e9300 206px,#9e5800 242px,#9e2600 312px,#9e2600 313px)"></div><div style="left:2px;top:38px;width:323px;height:1px;background:linear-gradient(90deg,#009e16,#009e0d 123px,#01ff1e 124px,#fff907 203px,#ffd401 215px,#9e7e00 216px,#9e4500 261px,#9e2200 322px)"></div><div style="left:2px;top:39px;width:331px;height:1px;background:linear-gradient(90deg,#009e17,#009e0e 124px,#05ff21 125px,#fff90b 203px,#ffb900 226px,#9e6b00 227px,#9e3700 280px,#9e1f00 330px)"></div><div style="left:2px;top:40px;width:340px;height:1px;background:linear-gradient(90deg,#009e18,#009e10 124px,#04ff24 125px,#fffc10 202px,#ffac02 232px,#ffa300 237px,#9e5c00 238px,#9e2b00 301px,#9e1b00 339px)"></div><div style="left:2px;top:41px;width:349px;height:1px;background:linear-gradient(90deg,#009e19,#009e11 124px,#03ff27 125px,#fffc15 202px,#ffb007 230px,#ff9000 248px,#9e5000 249px,#9e2100 322px,#9e1800 348px)"></div><div style="left:2px;top:42px;width:357px;height:1px;background:linear-gradient(90deg,#009e1b,#009e13 124px,#03ff2a 125px,#fffb19 202px,#ffae0a 231px,#ff8100 258px,#9e4600 259px,#9e1800 348px,#9e1600 356px)"></div><div style="left:2px;top:43px;width:366px;height:1px;background:linear-gradient(90deg,#009e1c,#009e14 124px,#02ff2d 125px,#fffb1d 202px,#ffaf0e 230px,#ff7300 269px,#9e3d00 270px,#9e1300 365px)"></div><div style="left:1px;top:44px;width:376px;height:1px;background:linear-gradient(90deg,#009e1d,#009e16 125px,#01ff2f 126px,#fffa20 203px,#ffad11 232px,#ff6b01 277px,#ff6600 281px,#9e3500 282px,#9e1000 375px)"></div><div style="left:1px;top:45px;width:384px;height:1px;background:linear-gradient(90deg,#009e1e,#009e17 126px,#05ff32 127px,#fffa24 203px,#ffaa13 233px,#ff6603 281px,#ff5c00 291px,#9e2f00 292px,#9e0e00 383px)"></div><div style="left:1px;top:46px;width:393px;height:1px;background:linear-gradient(90deg,#009e1f,#009e19 126px,#04ff35 127px,#fffa28 203px,#ffae17 231px,#ff6a07 277px,#ff5200 302px,#9e2900 303px,#9e0c00 392px)"></div><div style="left:1px;top:47px;width:402px;height:1px;background:linear-gradient(90deg,#009e20,#009e1b 126px,#04ff38 127px,#fff92c 203px,#ffac1a 232px,#ff6609 280px,#ff4900 313px,#9e2400 314px,#9e0a00 401px)"></div><div style="left:1px;top:48px;width:411px;height:1px;background:linear-gradient(90deg,#009e22,#009e1c 126px,#03ff3b 127px,#fff92f 203px,#ffa91c 233px,#ff650b 281px,#ff4200 323px,#9e2000 324px,#9e0800 410px)"></div><div style="left:1px;top:49px;width:419px;height:1px;background:linear-gradient(90deg,#009e23,#009e1e 126px,#02ff3e 127px,#fff933 203px,#ffad20 231px,#ff690e 277px,#ff3a00 334px,#9e1b00 335px,#9e0700 418px)"></div><div style="left:1px;top:50px;width:428px;height:1px;background:linear-gradient(90deg,#009e24,#009e1f 126px,#01ff41 127px,#fffc37 202px,#ffac23 231px,#ff6610 279px,#ff3300 345px,#9e1700 346px,#9e0500 427px)"></div><div style="left:1px;top:51px;width:437px;height:1px;background:linear-gradient(90deg,#009e25,#009e21 127px,#05ff43 128px,#fffc3b 202px,#ffae26 230px,#ff6913 276px,#ff2d00 356px,#9e1400 357px,#9e0300 436px)"></div><div style="left:2px;top:52px;width:445px;height:1px;background:linear-gradient(90deg,#009e26,#009e23 126px,#04ff46 127px,#fffb3f 201px,#ffae29 229px,#ff6915 275px,#ff2c02 355px,#ff2700 365px,#9e1100 366px,#9e0200 444px)"></div><div style="left:2px;top:53px;width:453px;height:1px;background:linear-gradient(90deg,#009e27,#009e24 126px,#04ff49 127px,#fffb42 201px,#ffad2c 229px,#ff6717 276px,#ff2a04 358px,#ff2100 376px,#9e0e00 377px,#9e0000 452px)"></div><div style="left:2px;top:54px;width:462px;height:1px;background:linear-gradient(90deg,#009e29,#009e26 126px,#03ff4c 127px,#fffb46 201px,#ffad2e 229px,#ff6819 275px,#ff2a06 357px,#ff1c00 387px,#9e0b00 388px,#9e0000 461px)"></div><div style="left:2px;top:55px;width:471px;height:1px;background:linear-gradient(90deg,#009e2a,#009e28 126px,#02ff4f 127px,#fffa49 201px,#ffaa30 230px,#ff641a 278px,#ff2606 364px,#ff1700 397px,#9e0900 398px,#9e0000 470px)"></div><div style="left:2px;top:56px;width:479px;height:1px;background:linear-gradient(90deg,#009e2b,#009e29 126px,#01ff52 127px,#fffa4d 201px,#ffac34 229px,#ff671d 275px,#ff2909 358px,#ff1200 408px,#9e0700 409px,#9e0000 478px)"></div><div style="left:2px;top:57px;width:488px;height:1px;background:linear-gradient(90deg,#009e2c,#009e2b 126px,#00ff54 127px,#fff950 201px,#ffac36 229px,#ff671f 275px,#ff290b 357px,#ff0e00 419px,#9e0500 420px,#9e0000 487px)"></div><div style="left:2px;top:58px;width:497px;height:1px;background:linear-gradient(90deg,#009e2e,#009e2d 127px,#05ff57 128px,#fff954 201px,#ffab39 229px,#ff6521 276px,#ff280c 359px,#ff0900 429px,#9e0300 430px,#9e0000 496px)"></div><div style="left:2px;top:59px;width:505px;height:1px;background:linear-gradient(90deg,#009e2f,#009e2e 127px,#04ff5a 128px,#fff957 201px,#ffad3c 228px,#ff6824 273px,#ff2a0e 354px,#ff0400 440px,#9e0100 441px,#9e0000 504px)"></div><div style="left:2px;top:60px;width:514px;height:1px;background:linear-gradient(90deg,#009e30,#009e30 127px,#03ff5d 128px,#fffc5c 200px,#ffaf40 227px,#ff6b27 270px,#ff2d11 348px,#ff0001 448px,#9e0000 449px,#9e0000 513px)"></div><div style="left:2px;top:61px;width:523px;height:1px;background:linear-gradient(90deg,#009e31,#009e32 127px,#02ff60 128px,#fffc60 200px,#ffae43 227px,#ff6b29 270px,#ff2d13 347px,#ff0002 447px,#9e0001 448px,#9e0000 522px)"></div><div style="left:3px;top:62px;width:531px;height:1px;background:linear-gradient(90deg,#009e33,#009e34 126px,#01ff63 127px,#fffb63 199px,#ffae45 226px,#ff692b 270px,#ff2b13 349px,#ff0004 445px,#9e0001 446px,#9e0000 530px)"></div><div style="left:3px;top:63px;width:539px;height:1px;background:linear-gradient(90deg,#009e34,#009e35 126px,#00ff66 127px,#fffb67 199px,#ffab47 227px,#ff632b 275px,#ff2513 360px,#ff0005 444px,#9e0002 445px,#9e0000 538px)"></div><div style="left:3px;top:64px;width:548px;height:1px;background:linear-gradient(90deg,#009e35,#009e37 127px,#05ff68 128px,#fffb6a 199px,#ffad4b 226px,#ff672e 271px,#ff2a16 350px,#ff0007 443px,#9e0002 444px,#9e0000 547px)"></div><div style="left:3px;top:65px;width:557px;height:1px;background:linear-gradient(90deg,#009e36,#009e39 127px,#04ff6b 128px,#fffa6e 199px,#ffaf4e 225px,#ff6a32 268px,#ff2d19 344px,#ff0008 442px,#9e0003 443px,#9e0000 556px)"></div><div style="left:3px;top:66px;width:565px;height:1px;background:linear-gradient(90deg,#009e38,#009e3b 127px,#03ff6e 128px,#fffa71 199px,#ffac50 226px,#ff6933 269px,#ff2c1a 345px,#ff0009 441px,#9e0003 442px,#9e0000 564px)"></div><div style="left:3px;top:67px;width:574px;height:1px;background:linear-gradient(90deg,#009e39,#009e3d 127px,#02ff71 128px,#fff975 199px,#ffac52 226px,#ff6835 269px,#ff2a1b 348px,#ff000b 440px,#9e0004 441px,#9e0000 573px)"></div><div style="left:4px;top:68px;width:582px;height:1px;background:linear-gradient(90deg,#009e3a,#009e3f 126px,#02ff74 127px,#fff978 198px,#ffab55 225px,#ff6737 269px,#ff2a1c 346px,#ff000c 438px,#9e0004 439px,#9e0000 581px)"></div><div style="left:4px;top:69px;width:591px;height:1px;background:linear-gradient(90deg,#009e3c,#009e40 126px,#00ff77 127px,#fff97b 198px,#ffad59 224px,#ff6739 268px,#ff281d 349px,#ff000d 437px,#9e0005 438px,#9e0000 590px)"></div><div style="left:4px;top:70px;width:596px;height:1px;background:linear-gradient(90deg,#009e3d,#009e42 127px,#05ff7a 128px,#fffc81 197px,#ffaf5c 223px,#ff6c3d 264px,#ff2e21 338px,#ff000e 436px,#9e0005 437px,#9e0000 595px)"></div><div style="left:4px;top:71px;width:596px;height:1px;background:linear-gradient(90deg,#009e3e,#009e44 127px,#04ff7d 128px,#fffc84 197px,#ffac5e 224px,#ff683d 267px,#ff2a21 344px,#ff0010 435px,#9e0006 436px,#9e0000 595px)"></div><div style="left:4px;top:72px;width:596px;height:1px;background:linear-gradient(90deg,#009e3f,#009e46 127px,#03ff80 128px,#fffb88 197px,#ffae62 223px,#ff6a40 265px,#ff2e24 337px,#ff0011 434px,#9e0006 435px,#9e0000 595px)"></div><div style="left:5px;top:73px;width:595px;height:1px;background:linear-gradient(90deg,#009e41,#009e48 126px,#03ff83 127px,#fffb8b 196px,#ffab63 223px,#ff6741 266px,#ff2a24 342px,#ff0012 432px,#9e0007 433px,#9e0000 594px)"></div><div style="left:5px;top:74px;width:595px;height:1px;background:linear-gradient(90deg,#009e42,#009e4a 126px,#02ff86 127px,#fffb8f 196px,#ffaf68 221px,#ff6a45 263px,#ff2c26 338px,#ff0013 431px,#9e0007 432px,#9e0000 594px)"></div><div style="left:5px;top:75px;width:595px;height:1px;background:linear-gradient(90deg,#009e44,#009e4c 126px,#01ff89 127px,#fffa92 196px,#ffaa68 223px,#ff6544 267px,#ff2725 346px,#ff0014 430px,#9e0008 431px,#9e0000 594px)"></div><div style="left:5px;top:76px;width:595px;height:1px;background:linear-gradient(90deg,#009e45,#009e4e 127px,#05ff8c 128px,#fffa96 196px,#ffac6c 222px,#ff6747 265px,#ff2a28 340px,#ff0016 429px,#9e0009 430px,#9e0001 594px)"></div><div style="left:5px;top:77px;width:595px;height:1px;background:linear-gradient(90deg,#009e46,#009e50 127px,#05ff8f 128px,#fffa99 196px,#ffae70 221px,#ff6a4b 262px,#ff2c2b 336px,#ff0017 428px,#9e0009 429px,#9e0001 594px)"></div><div style="left:6px;top:78px;width:594px;height:1px;background:linear-gradient(90deg,#009e48,#009e52 126px,#04ff92 127px,#fff99d 195px,#ffa970 222px,#ff654b 265px,#ff282a 341px,#ff0018 426px,#9e000a 427px,#9e0001 593px)"></div><div style="left:6px;top:79px;width:594px;height:1px;background:linear-gradient(90deg,#009e49,#009e54 126px,#03ff95 127px,#fff9a0 195px,#ffab74 221px,#ff674e 263px,#ff2a2d 337px,#ff0019 425px,#9e000a 426px,#9e0002 593px)"></div><div style="left:6px;top:80px;width:594px;height:1px;background:linear-gradient(90deg,#009e4a,#009e56 126px,#02ff98 127px,#fffca6 194px,#ffaa77 221px,#ff644e 265px,#ff272d 342px,#ff001a 424px,#9e000b 425px,#9e0002 593px)"></div><div style="left:6px;top:81px;width:594px;height:1px;background:linear-gradient(90deg,#009e4c,#009e58 126px,#01ff9b 127px,#fffcaa 194px,#ffb17d 218px,#ff6c55 258px,#ff2e32 329px,#ff001c 423px,#9e000b 424px,#9e0002 593px)"></div><div style="left:7px;top:82px;width:593px;height:1px;background:linear-gradient(90deg,#009e4d,#009e5a 126px,#06ff9e 127px,#fffcae 193px,#ffae7f 218px,#ff6855 260px,#ff2a32 334px,#ff001d 421px,#9e000c 422px,#9e0003 592px)"></div><div style="left:7px;top:83px;width:593px;height:1px;background:linear-gradient(90deg,#009e4f,#009e5c 126px,#05ffa1 127px,#fffbb1 193px,#ffb083 217px,#ff6b59 257px,#ff2c34 330px,#ff001e 420px,#9e000d 421px,#9e0003 592px)"></div><div style="left:7px;top:84px;width:593px;height:1px;background:linear-gradient(90deg,#009e50,#009e5e 126px,#04ffa4 127px,#fffbb5 193px,#ffad84 218px,#ff6759 260px,#ff2a35 333px,#ff001f 419px,#9e000d 420px,#9e0003 592px)"></div><div style="left:7px;top:85px;width:593px;height:1px;background:linear-gradient(90deg,#009e51,#009e60 126px,#03ffa7 127px,#fffab8 193px,#ffa682 221px,#ff6258 264px,#ff2533 341px,#ff0020 418px,#9e000e 419px,#9e0004 592px)"></div><div style="left:8px;top:86px;width:592px;height:1px;background:linear-gradient(90deg,#009e53,#009e62 125px,#02ffaa 126px,#fffabc 192px,#ffac89 217px,#ff665d 259px,#ff2a38 331px,#ff0022 416px,#9e000e 417px,#9e0004 591px)"></div><div style="left:8px;top:87px;width:592px;height:1px;background:linear-gradient(90deg,#009e54,#009e64 125px,#01ffad 126px,#fffac0 192px,#ffa98b 218px,#ff635d 261px,#ff2637 337px,#ff0023 415px,#9e000f 416px,#9e0004 591px)"></div><div style="left:8px;top:88px;width:592px;height:1px;background:linear-gradient(90deg,#009e56,#009e66 126px,#06ffb1 127px,#fff9c3 192px,#ffab8f 217px,#ff6560 259px,#ff2839 333px,#ff0024 414px,#9e0010 415px,#9e0005 591px)"></div><div style="left:8px;top:89px;width:592px;height:1px;background:linear-gradient(90deg,#009e57,#009e69 126px,#05ffb4 127px,#fff9c7 192px,#ffab91 217px,#ff6764 257px,#ff2a3c 329px,#ff0025 413px,#9e0010 414px,#9e0005 591px)"></div><div style="left:9px;top:90px;width:591px;height:1px;background:linear-gradient(90deg,#009e59,#009e6b 125px,#04ffb7 126px,#fffdcd 190px,#ffaf97 214px,#ff6967 254px,#ff2c3f 324px,#ff0026 411px,#9e0011 412px,#9e0005 590px)"></div><div style="left:9px;top:91px;width:591px;height:1px;background:linear-gradient(90deg,#009e5a,#009e6d 125px,#03ffba 126px,#fffcd1 190px,#ffac98 215px,#ff6668 256px,#ff283e 330px,#ff0028 410px,#9e0012 411px,#9e0006 590px)"></div><div style="left:9px;top:92px;width:591px;height:1px;background:linear-gradient(90deg,#009e5c,#009e6f 125px,#02ffbd 126px,#fffcd5 190px,#ffae9d 214px,#ff686b 254px,#ff2a41 326px,#ff0029 409px,#9e0012 410px,#9e0006 590px)"></div><div style="left:10px;top:93px;width:590px;height:1px;background:linear-gradient(90deg,#009e5d,#009e71 124px,#01ffc0 125px,#fffbd8 189px,#ffab9e 214px,#ff646b 256px,#ff2640 331px,#ff002a 407px,#9e0013 408px,#9e0006 589px)"></div><div style="left:10px;top:94px;width:590px;height:1px;background:linear-gradient(90deg,#009e5f,#009e74 125px,#06ffc4 126px,#fffbdc 189px,#ffada2 213px,#ff6970 252px,#ff2c46 320px,#ff012b 406px,#9e0014 407px,#9e0006 589px)"></div><div style="left:10px;top:95px;width:590px;height:1px;background:linear-gradient(90deg,#009e60,#009e76 125px,#05ffc7 126px,#fffae0 189px,#ffaaa3 214px,#ff6670 254px,#ff2845 326px,#ff012d 405px,#9e0014 406px,#9e0007 589px)"></div><div style="left:11px;top:96px;width:589px;height:1px;background:linear-gradient(90deg,#009e62,#009e78 124px,#04ffca 125px,#fffae4 188px,#ffaca8 212px,#ff6874 251px,#ff2a48 321px,#ff012e 403px,#9e0015 404px,#9e0007 588px)"></div><div style="left:11px;top:97px;width:588px;height:1px;background:linear-gradient(90deg,#009e63,#009e7a 124px,#03ffcd 125px,#fffae7 188px,#ffaead 211px,#ff6776 251px,#ff2948 322px,#ff012f 402px,#9e0016 403px,#9e0007 587px)"></div><div style="left:11px;top:98px;width:587px;height:1px;background:linear-gradient(90deg,#009e65,#009e7d 124px,#03ffd1 125px,#fff9eb 188px,#ffa9ab 213px,#ff6375 254px,#ff2547 328px,#ff0130 401px,#9e0016 402px,#9e0008 586px)"></div><div style="left:11px;top:99px;width:586px;height:1px;background:linear-gradient(90deg,#009e66,#009e7f 124px,#01ffd4 125px,#fff9ef 188px,#ffadb2 211px,#ff687b 250px,#ff2a4c 319px,#ff0132 400px,#9e0017 401px,#9e0008 585px)"></div><div style="left:12px;top:100px;width:584px;height:1px;background:linear-gradient(90deg,#009e68,#009e81 123px,#00ffd7 124px,#fffdf6 186px,#ffafb7 209px,#ff6a7f 247px,#ff2d50 313px,#ff0133 398px,#9e0018 399px,#9e0009 583px)"></div><div style="left:12px;top:101px;width:583px;height:1px;background:linear-gradient(90deg,#009e6a,#009e84 124px,#05ffdb 125px,#fffcfa 186px,#ffacb8 210px,#ff677f 249px,#ff2a50 317px,#ff0134 397px,#9e0018 398px,#9e0009 582px)"></div><div style="left:12px;top:102px;width:582px;height:1px;background:linear-gradient(90deg,#009e6b,#009e86 124px,#05ffde 125px,#fffcfe 186px,#ffaebd 209px,#ff6983 247px,#ff2b52 315px,#ff0135 396px,#9e0019 397px,#9e0009 581px)"></div><div style="left:13px;top:103px;width:581px;height:1px;background:linear-gradient(90deg,#009e6d,#009e89 123px,#04ffe2 124px,#fcf9ff 185px,#ffa7b9 211px,#ff6381 250px,#ff254f 323px,#ff0137 394px,#9e001a 395px,#9e000a 580px)"></div><div style="left:13px;top:104px;width:580px;height:1px;background:linear-gradient(90deg,#009e6e,#009e8b 123px,#03ffe5 124px,#eaf8ff 181px,#ffeaf7 189px,#ff9db4 215px,#ff5c7d 256px,#ff204d 331px,#ff0138 393px,#9e001a 394px,#9e000a 579px)"></div><div style="left:13px;top:105px;width:579px;height:1px;background:linear-gradient(90deg,#009e70,#009e8d 123px,#02ffe8 124px,#d0f8ff 175px,#ffeafa 189px,#ff9cb7 215px,#ff597d 258px,#ff1c4c 337px,#ff0139 392px,#9e001b 393px,#9e000a 578px)"></div><div style="left:14px;top:106px;width:577px;height:1px;background:linear-gradient(90deg,#009e72,#009e90 122px,#00ffec 123px,#a5fbff 163px,#ffe5fa 189px,#ff9ab7 215px,#ff5a7f 256px,#ff1e4e 332px,#ff013a 390px,#9e001c 391px,#9e000b 576px)"></div><div style="left:14px;top:107px;width:576px;height:1px;background:linear-gradient(90deg,#009e73,#009e93 123px,#06fff0 124px,#aaf6ff 165px,#ffe1fb 190px,#ff97b8 216px,#ff557d 260px,#ff194c 340px,#ff013c 389px,#9e001c 390px,#9e000b 575px)"></div><div style="left:14px;top:108px;width:575px;height:1px;background:linear-gradient(90deg,#009e75,#009e95 123px,#05fff3 124px,#99f5ff 161px,#ffddfb 191px,#ff92b7 218px,#ff517c 263px,#ff144a 349px,#ff013d 388px,#9e001d 389px,#9e000c 574px)"></div><div style="left:15px;top:109px;width:573px;height:1px;background:linear-gradient(90deg,#009e77,#009e97 122px,#04fff6 123px,#8cf3ff 157px,#ffd8fb 191px,#ff90b7 218px,#ff507d 263px,#ff134b 349px,#ff013e 386px,#9e001e 387px,#9e000c 572px)"></div><div style="left:15px;top:110px;width:572px;height:1px;background:linear-gradient(90deg,#009e78,#009e9a 122px,#03fffa 123px,#78f3ff 152px,#ffd4fb 192px,#ff8bb6 220px,#ff4a7b 268px,#ff104a 354px,#ff0140 385px,#9e001f 386px,#9e000c 571px)"></div><div style="left:15px;top:111px;width:571px;height:1px;background:linear-gradient(90deg,#009e7a,#009e9c 122px,#02fffd 123px,#88ecff 157px,#ffd0fb 193px,#ff85b3 223px,#ff4477 274px,#ff0845 371px,#ff0141 384px,#9e001f 385px,#9e000d 570px)"></div><div style="left:16px;top:112px;width:569px;height:1px;background:linear-gradient(90deg,#009e7c,#009d9e 121px,#01fdff 122px,#7feaff 154px,#ffccfb 193px,#ff83b4 223px,#ff457a 272px,#ff0b49 362px,#ff0142 382px,#9e0020 383px,#9e000d 568px)"></div><div style="left:16px;top:113px;width:568px;height:1px;background:linear-gradient(90deg,#009e7e,#009a9e 122px,#06f9ff 123px,#95e2ff 161px,#ffc9fb 194px,#ff82b6 223px,#ff427a 274px,#ff0949 365px,#ff0144 381px,#9e0021 382px,#9e000e 567px)"></div><div style="left:16px;top:114px;width:567px;height:1px;background:linear-gradient(90deg,#009e7f,#00989e 122px,#05f6ff 123px,#85e1ff 157px,#ffc5fb 195px,#ff7eb5 225px,#ff3e78 278px,#ff0346 377px,#ff0045 381px,#9e0022 382px,#9e000e 566px)"></div><div style="left:17px;top:115px;width:565px;height:1px;background:linear-gradient(90deg,#009e81,#00989e 116px,#00969e 121px,#04f3ff 122px,#83deff 156px,#ffc1fb 195px,#ff7ab4 226px,#ff3b77 280px,#ff0046 379px,#9e0022 380px,#9e000e 564px)"></div><div style="left:17px;top:116px;width:564px;height:1px;background:linear-gradient(90deg,#009e83,#00979e 112px,#00939e 121px,#03efff 122px,#7edcff 155px,#ffbefb 196px,#ff78b5 227px,#ff3d7a 278px,#ff0047 378px,#9e0023 379px,#9e000f 563px)"></div><div style="left:17px;top:117px;width:563px;height:1px;background:linear-gradient(90deg,#009e84,#00979e 107px,#00919e 121px,#02ecff 122px,#79d9ff 154px,#ffbafb 197px,#ff75b4 229px,#ff3878 283px,#ff0049 377px,#9e0024 378px,#9e000f 562px)"></div><div style="left:18px;top:118px;width:561px;height:1px;background:linear-gradient(90deg,#009e86,#00979e 100px,#008f9e 120px,#01e9ff 121px,#74d7ff 152px,#ffb7fb 197px,#ff74b6 228px,#ff387a 281px,#ff004a 375px,#9e0025 376px,#9e0010 560px)"></div><div style="left:18px;top:119px;width:560px;height:1px;background:linear-gradient(90deg,#009e88,#00979e 94px,#008c9e 121px,#06e6ff 122px,#92ceff 162px,#ffb3fb 198px,#ff70b5 230px,#ff367a 284px,#ff004b 374px,#9e0026 375px,#9e0010 559px)"></div><div style="left:18px;top:120px;width:559px;height:1px;background:linear-gradient(90deg,#009e8a,#00979e 89px,#008a9e 121px,#05e3ff 122px,#90cbff 162px,#ffb0fb 199px,#ff6db4 232px,#ff3177 289px,#ff004d 373px,#9e0026 374px,#9e0010 558px)"></div><div style="left:19px;top:121px;width:557px;height:1px;background:linear-gradient(90deg,#009e8c,#00979e 82px,#00889e 120px,#04e0ff 121px,#88c9ff 159px,#ffaaf9 200px,#ff6bb5 232px,#ff327a 286px,#ff004e 371px,#9e0027 372px,#9e0011 556px)"></div><div style="left:19px;top:122px;width:556px;height:1px;background:linear-gradient(90deg,#009e8e,#00969e 79px,#00869e 120px,#03ddff 121px,#80c8ff 157px,#ffa7f9 201px,#ff66b2 235px,#ff2972 299px,#ff0050 370px,#9e0028 371px,#9e0011 555px)"></div><div style="left:20px;top:123px;width:554px;height:1px;background:linear-gradient(90deg,#009e90,#00969e 72px,#00849e 119px,#02daff 120px,#78c6ff 154px,#ffa6fc 200px,#ff68b7 232px,#ff2c77 293px,#ff0051 368px,#9e0029 369px,#9e0012 553px)"></div><div style="left:20px;top:124px;width:553px;height:1px;background:linear-gradient(90deg,#009e91,#00959e 69px,#00829e 119px,#01d7ff 120px,#77c4ff 154px,#ffa3fc 201px,#ff62b3 236px,#ff2875 298px,#ff0052 367px,#9e002a 368px,#9e0012 552px)"></div><div style="left:20px;top:125px;width:552px;height:1px;background:linear-gradient(90deg,#009e93,#00949e 67px,#00809e 120px,#06d4ff 121px,#99baff 166px,#ffa0fc 202px,#ff63b7 235px,#ff2a79 294px,#ff0054 366px,#9e002a 367px,#9e0012 551px)"></div><div style="left:21px;top:126px;width:550px;height:1px;background:linear-gradient(90deg,#009e95,#00929e 66px,#007e9e 119px,#05d2ff 120px,#8bbaff 161px,#ff9dfc 202px,#ff63b9 234px,#ff297a 294px,#ff0055 364px,#9e002b 365px,#9e0013 549px)"></div><div style="left:21px;top:127px;width:549px;height:1px;background:linear-gradient(90deg,#009e97,#008c9e 77px,#007c9e 119px,#04cfff 120px,#8ab7ff 161px,#ff9afc 203px,#ff5db5 238px,#ff2477 300px,#ff0057 363px,#9e002c 364px,#9e0013 548px)"></div><div style="left:21px;top:128px;width:548px;height:1px;background:linear-gradient(90deg,#009e99,#007a9e 119px,#03cdff 120px,#7cb7ff 157px,#ff97fc 204px,#ff5ab4 240px,#ff2377 302px,#ff0058 362px,#9e002d 363px,#9e0014 547px)"></div><div style="left:22px;top:129px;width:546px;height:1px;background:linear-gradient(90deg,#009e9b,#00799e 118px,#02caff 119px,#78b5ff 155px,#ff94fc 204px,#ff57b3 241px,#ff1f75 306px,#ff005a 360px,#9e002e 361px,#9e0014 545px)"></div><div style="left:22px;top:130px;width:545px;height:1px;background:linear-gradient(90deg,#009e9d,#00779e 118px,#01c8ff 119px,#6eb5ff 152px,#ff91fc 205px,#ff56b5 241px,#ff2179 302px,#ff005b 359px,#9e002f 360px,#9e0015 544px)"></div><div style="left:23px;top:131px;width:543px;height:1px;background:linear-gradient(90deg,#009d9e,#00759e 118px,#05c5ff 119px,#89adff 161px,#ff8df9 206px,#ff52b3 243px,#ff1d77 306px,#ff005d 357px,#9e0030 358px,#9e0015 542px)"></div><div style="left:23px;top:132px;width:542px;height:1px;background:linear-gradient(90deg,#009b9e,#00739e 118px,#05c2ff 119px,#8da9ff 163px,#ff8af9 207px,#ff4fb2 245px,#ff1a75 311px,#ff005e 356px,#9e0031 357px,#9e0015 541px)"></div><div style="left:23px;top:133px;width:541px;height:1px;background:linear-gradient(90deg,#009a9e,#00729e 118px,#04c0ff 119px,#83a9ff 160px,#ff87f9 208px,#ff4db1 247px,#ff1976 312px,#ff0060 355px,#9e0032 356px,#9e0016 540px)"></div><div style="left:24px;top:134px;width:539px;height:1px;background:linear-gradient(90deg,#00989e,#00709e 117px,#03beff 118px,#7ca8ff 157px,#ff85fa 208px,#ff4eb6 244px,#ff1a79 308px,#ff0061 353px,#9e0032 354px,#9e0016 538px)"></div><div style="left:24px;top:135px;width:538px;height:1px;background:linear-gradient(90deg,#00969e,#006f9e 117px,#02bcff 118px,#75a7ff 155px,#ff82fa 209px,#ff4cb5 246px,#ff1979 310px,#ff0063 352px,#9e0033 353px,#9e0017 537px)"></div><div style="left:24px;top:136px;width:537px;height:1px;background:linear-gradient(90deg,#00949e,#006d9e 117px,#01b9ff 118px,#6ea6ff 153px,#ff80fa 210px,#ff49b4 248px,#ff1577 315px,#ff0064 351px,#9e0034 352px,#9e0017 536px)"></div><div style="left:25px;top:137px;width:535px;height:1px;background:linear-gradient(90deg,#00929e,#006c9e 116px,#00b7ff 117px,#6aa4ff 151px,#ff7dfa 210px,#ff47b5 248px,#ff1579 313px,#ff0066 349px,#9e0035 350px,#9e0018 534px)"></div><div style="left:25px;top:138px;width:534px;height:1px;background:linear-gradient(90deg,#00909e,#006a9e 117px,#04b5ff 118px,#869cff 162px,#ff7bfa 211px,#ff45b4 250px,#ff1277 318px,#ff0067 348px,#9e0036 349px,#9e0018 533px)"></div><div style="left:26px;top:139px;width:532px;height:1px;background:linear-gradient(90deg,#008f9e,#00689e 116px,#04b3ff 117px,#8799ff 162px,#ff78fa 211px,#ff44b6 249px,#ff147b 313px,#ff0069 346px,#9e0037 347px,#9e0019 531px)"></div><div style="left:26px;top:140px;width:531px;height:1px;background:linear-gradient(90deg,#008d9e,#00679e 116px,#03b1ff 117px,#8398ff 161px,#ff76fa 212px,#ff40b2 253px,#ff0d76 323px,#ff006a 345px,#9e0038 346px,#9e0019 530px)"></div><div style="left:26px;top:141px;width:531px;height:1px;background:linear-gradient(90deg,#008b9e,#00669e 116px,#02afff 117px,#7a98ff 158px,#ff73fa 213px,#ff3fb4 253px,#ff0d77 323px,#ff006c 344px,#9e0039 345px,#9e0019 530px)"></div><div style="left:27px;top:142px;width:529px;height:1px;background:linear-gradient(90deg,#008a9e,#00649e 115px,#01adff 116px,#6e98ff 153px,#ff71fa 213px,#ff3db3 254px,#ff0a76 326px,#ff016e 342px,#9e003a 343px,#9e001a 528px)"></div><div style="left:27px;top:143px;width:528px;height:1px;background:linear-gradient(90deg,#00889e,#00639e 115px,#00abff 116px,#6d96ff 153px,#ff6ffa 214px,#ff3bb4 255px,#ff0a77 326px,#ff016f 341px,#9e003b 342px,#9e001a 527px)"></div><div style="left:28px;top:144px;width:526px;height:1px;background:linear-gradient(90deg,#00869e,#00619e 115px,#04a8ff 116px,#858fff 162px,#ff6dfa 214px,#ff39b3 256px,#ff0776 329px,#ff0171 339px,#9e003c 340px,#9e001b 525px)"></div><div style="left:28px;top:145px;width:525px;height:1px;background:linear-gradient(90deg,#00859e,#00609e 115px,#04a6ff 116px,#868dff 163px,#ff6afa 215px,#ff37b2 258px,#ff0576 331px,#ff0172 338px,#9e003d 339px,#9e001b 524px)"></div><div style="left:29px;top:146px;width:523px;height:1px;background:linear-gradient(90deg,#00839e,#005f9e 114px,#03a4ff 115px,#828bff 161px,#ff68fa 215px,#ff36b4 257px,#ff0577 330px,#ff0174 336px,#9e003e 337px,#9e001c 522px)"></div><div style="left:29px;top:147px;width:522px;height:1px;background:linear-gradient(90deg,#00829e,#005d9e 114px,#02a3ff 115px,#778cff 157px,#ff66fa 216px,#ff33b2 260px,#ff0176 335px,#9e003f 336px,#9e001c 521px)"></div><div style="left:29px;top:148px;width:521px;height:1px;background:linear-gradient(90deg,#00809e,#005c9e 114px,#01a1ff 115px,#6e8cff 154px,#ff64fa 217px,#ff32b4 260px,#ff0379 331px,#ff0177 334px,#9e0040 335px,#9e001d 520px)"></div><div style="left:30px;top:149px;width:519px;height:1px;background:linear-gradient(90deg,#007f9e,#005b9e 113px,#009fff 114px,#638cff 149px,#ff62fa 217px,#ff30b3 261px,#ff0179 332px,#9e0042 333px,#9e001e 512px,#9e001d 518px)"></div><div style="left:30px;top:150px;width:518px;height:1px;background:linear-gradient(90deg,#007d9e,#005a9e 114px,#049dff 115px,#7f84ff 161px,#ff60fa 218px,#ff2eb2 263px,#ff017b 331px,#9e0043 332px,#9e001f 507px,#9e001e 517px)"></div><div style="left:31px;top:151px;width:516px;height:1px;background:linear-gradient(90deg,#007c9e,#00589e 113px,#049bff 114px,#8780ff 164px,#ff5efb 218px,#ff2fb6 260px,#ff017d 329px,#9e0044 330px,#9e0020 502px,#9e001e 515px)"></div><div style="left:31px;top:152px;width:515px;height:1px;background:linear-gradient(90deg,#007a9e,#00579e 113px,#0399ff 114px,#8180ff 162px,#ff5cfb 219px,#ff2eb7 261px,#ff017e 328px,#9e0045 329px,#9e0020 503px,#9e001f 514px)"></div><div style="left:31px;top:153px;width:514px;height:1px;background:linear-gradient(90deg,#00799e,#00569e 113px,#0298ff 114px,#7481ff 157px,#ff5afb 220px,#ff2cb6 263px,#ff0180 327px,#9e0046 328px,#9e0021 499px,#9e001f 513px)"></div><div style="left:32px;top:154px;width:512px;height:1px;background:linear-gradient(90deg,#00789e,#00559e 112px,#0196ff 113px,#6e81ff 154px,#ff58fb 220px,#ff29b5 264px,#ff0182 325px,#9e0047 326px,#9e0022 494px,#9e0020 511px)"></div><div style="left:32px;top:155px;width:511px;height:1px;background:linear-gradient(90deg,#00769e,#00549e 112px,#0195ff 113px,#767dff 158px,#ff56fb 221px,#ff29b7 264px,#ff0184 324px,#9e0048 325px,#9e0022 496px,#9e0020 510px)"></div><div style="left:33px;top:156px;width:509px;height:1px;background:linear-gradient(90deg,#00759e,#00539e 112px,#0492ff 113px,#7e79ff 161px,#ff54fb 221px,#ff26b5 266px,#ff0185 322px,#9e0049 323px,#9e0023 491px,#9e0021 508px)"></div><div style="left:33px;top:157px;width:508px;height:1px;background:linear-gradient(90deg,#00749e,#00529e 112px,#0491ff 113px,#8f73ff 169px,#ff52fb 222px,#ff23b3 269px,#ff0187 321px,#9e004b 322px,#9e0025 478px,#9e0021 507px)"></div><div style="left:34px;top:158px;width:506px;height:1px;background:linear-gradient(90deg,#00729e,#00519e 111px,#038fff 112px,#8075ff 162px,#ff50fb 222px,#ff23b6 267px,#ff0189 319px,#9e004c 320px,#9e0025 480px,#9e0022 505px)"></div><div style="left:34px;top:159px;width:505px;height:1px;background:linear-gradient(90deg,#00719e,#00509e 111px,#028eff 112px,#7875ff 159px,#ff4efb 223px,#ff20b3 271px,#ff018b 318px,#9e004d 319px,#9e0026 476px,#9e0022 504px)"></div><div style="left:34px;top:160px;width:504px;height:1px;background:linear-gradient(90deg,#00709e,#004f9e 111px,#028cff 112px,#7973ff 160px,#ff4cfb 224px,#ff20b6 270px,#ff018d 317px,#9e004e 318px,#9e0027 473px,#9e0023 503px)"></div><div style="left:35px;top:161px;width:502px;height:1px;background:linear-gradient(90deg,#006e9e,#004e9e 110px,#018bff 111px,#7872ff 159px,#ff4afb 224px,#ff1eb5 271px,#ff018f 315px,#9e004f 316px,#9e0027 473px,#9e0023 501px)"></div><div style="left:35px;top:162px;width:501px;height:1px;background:linear-gradient(90deg,#006d9e,#004c9e 111px,#0489ff 112px,#846dff 165px,#ff48fb 225px,#ff1cb4 273px,#ff0191 314px,#9e0051 315px,#9e002a 458px,#9e0024 500px)"></div><div style="left:36px;top:163px;width:499px;height:1px;background:linear-gradient(90deg,#006c9e,#004b9e 110px,#0487ff 111px,#876bff 166px,#ff45f9 226px,#ff1bb5 273px,#ff0193 312px,#9e0052 313px,#9e002a 459px,#9e0024 498px)"></div><div style="left:36px;top:164px;width:498px;height:1px;background:linear-gradient(90deg,#006b9e,#004a9e 110px,#0386ff 111px,#7d6cff 162px,#ff44f9 227px,#ff18b3 276px,#ff0194 311px,#9e0053 312px,#9e002a 460px,#9e0025 497px)"></div><div style="left:37px;top:165px;width:496px;height:1px;background:linear-gradient(90deg,#00699e,#004a9e 109px,#0285ff 110px,#766cff 158px,#ff42f9 227px,#ff16b2 277px,#ff0196 309px,#9e0054 310px,#9e002b 458px,#9e0025 495px)"></div><div style="left:37px;top:166px;width:495px;height:1px;background:linear-gradient(90deg,#00689e,#00499e 109px,#0283ff 110px,#7b69ff 161px,#ff40f9 228px,#ff15b3 278px,#ff0198 308px,#9e0056 309px,#9e002d 447px,#9e0026 494px)"></div><div style="left:37px;top:167px;width:494px;height:1px;background:linear-gradient(90deg,#00679e,#00489e 109px,#0182ff 110px,#6f6bff 156px,#ff3ef9 229px,#ff13b2 280px,#ff019a 307px,#9e0057 308px,#9e002e 446px,#9e0026 493px)"></div><div style="left:38px;top:168px;width:492px;height:1px;background:linear-gradient(90deg,#00669e,#00479e 109px,#0480ff 110px,#8364ff 165px,#ff3df9 229px,#ff13b4 279px,#ff019c 305px,#9e0058 306px,#9e002e 446px,#9e0027 491px)"></div><div style="left:38px;top:169px;width:491px;height:1px;background:linear-gradient(90deg,#00659e,#00469e 109px,#047fff 110px,#8861ff 168px,#ff3bf9 230px,#ff10b2 282px,#ff009e 305px,#9e0059 306px,#9e002f 443px,#9e0027 490px)"></div><div style="left:39px;top:170px;width:489px;height:1px;background:linear-gradient(90deg,#00649e,#00459e 108px,#037dff 109px,#8361ff 165px,#ff39f9 230px,#ff0fb2 282px,#ff00a0 303px,#9e005b 304px,#9e0031 434px,#9e0028 488px)"></div><div style="left:39px;top:171px;width:488px;height:1px;background:linear-gradient(90deg,#00639e,#00449e 108px,#027cff 109px,#7164ff 157px,#ff38fa 231px,#ff10b7 279px,#ff00a2 302px,#9e005c 303px,#9e0031 436px,#9e0029 487px)"></div><div style="left:40px;top:172px;width:486px;height:1px;background:linear-gradient(90deg,#00619e,#00439e 107px,#027bff 108px,#815fff 164px,#ff36fa 231px,#ff0eb5 281px,#ff00a4 300px,#9e005d 301px,#9e0032 433px,#9e0029 485px)"></div><div style="left:40px;top:173px;width:485px;height:1px;background:linear-gradient(90deg,#00619e,#00429e 107px,#0179ff 108px,#6d62ff 155px,#ff35fa 232px,#ff0cb4 283px,#ff00a6 299px,#9e005f 300px,#9e0034 426px,#9e002a 484px)"></div><div style="left:41px;top:174px;width:483px;height:1px;background:linear-gradient(90deg,#005f9e,#00429e 106px,#0078ff 107px,#6663ff 151px,#ff33fa 232px,#ff0ab5 283px,#ff00a8 297px,#9e0060 298px,#9e0034 427px,#9e002a 482px)"></div><div style="left:41px;top:175px;width:482px;height:1px;background:linear-gradient(90deg,#005e9e,#00409e 107px,#0377ff 108px,#755dff 159px,#ff31fa 233px,#ff07b2 287px,#ff00aa 296px,#9e0062 297px,#9e0036 419px,#9e002b 481px)"></div><div style="left:42px;top:176px;width:480px;height:1px;background:linear-gradient(90deg,#005d9e,#00409e 106px,#0375ff 107px,#8059ff 164px,#ff30fa 233px,#ff08b6 284px,#ff00ac 294px,#9e0063 295px,#9e0037 417px,#9e002b 479px)"></div><div style="left:42px;top:177px;width:479px;height:1px;background:linear-gradient(90deg,#005c9e,#003f9e 106px,#0274ff 107px,#735bff 158px,#ff2efa 234px,#ff05b4 287px,#ff00ae 293px,#9e0065 294px,#9e0039 409px,#9e002c 478px)"></div><div style="left:42px;top:178px;width:478px;height:1px;background:linear-gradient(90deg,#005b9e,#003e9e 106px,#0273ff 107px,#7c57ff 163px,#ff2dfa 235px,#ff03b3 289px,#ff00b1 292px,#9e0066 293px,#9e0039 412px,#9e002d 477px)"></div><div style="left:43px;top:179px;width:476px;height:1px;background:linear-gradient(90deg,#005a9e,#003d9e 105px,#0172ff 106px,#6f59ff 156px,#ff2bfa 235px,#ff03b6 287px,#ff00b3 290px,#9e0068 291px,#9e003b 404px,#9e002d 475px)"></div><div style="left:43px;top:180px;width:476px;height:1px;background:linear-gradient(90deg,#00599e,#003d9e 105px,#0071ff 106px,#6b59ff 154px,#ff29fa 236px,#ff00b5 289px,#9e0069 290px,#9e003c 403px,#9e002d 475px)"></div><div style="left:44px;top:181px;width:474px;height:1px;background:linear-gradient(90deg,#00589e,#003c9e 105px,#036fff 106px,#7b54ff 162px,#ff28fa 236px,#ff00b7 287px,#9e006b 288px,#9e003e 396px,#9e002e 473px)"></div><div style="left:44px;top:182px;width:473px;height:1px;background:linear-gradient(90deg,#00579e,#003b9e 105px,#036eff 106px,#8051ff 165px,#ff26fa 237px,#ff00ba 286px,#9e006c 287px,#9e003e 398px,#9e002f 472px)"></div><div style="left:45px;top:183px;width:471px;height:1px;background:linear-gradient(90deg,#00569e,#003a9e 104px,#026dff 105px,#7951ff 161px,#ff25fa 237px,#ff00bc 284px,#9e006e 285px,#9e0040 392px,#9e002f 470px)"></div><div style="left:45px;top:184px;width:470px;height:1px;background:linear-gradient(90deg,#00559e,#003a9e 104px,#026cff 105px,#7c4fff 163px,#ff23fa 238px,#ff00be 283px,#9e006f 284px,#9e0040 394px,#9e0030 469px)"></div><div style="left:46px;top:185px;width:468px;height:1px;background:linear-gradient(90deg,#00549e,#00399e 103px,#016aff 104px,#6e52ff 155px,#ff22fa 238px,#ff00c1 281px,#9e0071 282px,#9e0042 387px,#9e0030 467px)"></div><div style="left:46px;top:186px;width:467px;height:1px;background:linear-gradient(90deg,#00549e,#00389e 103px,#0069ff 104px,#6952ff 153px,#ff20fa 239px,#ff00c3 280px,#9e0073 281px,#9e0044 382px,#9e0031 466px)"></div><div style="left:47px;top:187px;width:465px;height:1px;background:linear-gradient(90deg,#00539e,#00379e 103px,#0368ff 104px,#794cff 161px,#ff1ffa 239px,#ff00c6 278px,#9e0074 279px,#9e0044 383px,#9e0032 464px)"></div><div style="left:47px;top:188px;width:464px;height:1px;background:linear-gradient(90deg,#00529e,#00379e 103px,#0367ff 104px,#8d45ff 173px,#ff1dfa 240px,#ff00c8 277px,#9e0076 278px,#9e0046 378px,#9e0032 463px)"></div><div style="left:48px;top:189px;width:462px;height:1px;background:linear-gradient(90deg,#00519e,#00369e 102px,#0266ff 103px,#774aff 160px,#ff1cfa 240px,#ff00ca 275px,#9e0078 276px,#9e0048 373px,#9e0033 461px)"></div><div style="left:48px;top:190px;width:461px;height:1px;background:linear-gradient(90deg,#00509e,#00359e 102px,#0265ff 103px,#8445ff 168px,#ff1afa 241px,#ff01cd 274px,#9e0079 275px,#9e0048 375px,#9e0033 460px)"></div><div style="left:49px;top:191px;width:459px;height:1px;background:linear-gradient(90deg,#004f9e,#00359e 101px,#0164ff 102px,#8544ff 168px,#ff19fa 241px,#ff01d0 272px,#9e007b 273px,#9e0048 375px,#9e0034 458px)"></div><div style="left:49px;top:192px;width:458px;height:1px;background:linear-gradient(90deg,#004e9e,#00349e 101px,#0063ff 102px,#664cff 151px,#ff18fa 242px,#ff01d2 271px,#9e007d 272px,#9e004b 368px,#9e0035 457px)"></div><div style="left:50px;top:193px;width:456px;height:1px;background:linear-gradient(90deg,#004d9e,#00339e 101px,#0361ff 102px,#8542ff 168px,#ff16fa 242px,#ff01d5 269px,#9e007f 270px,#9e004d 362px,#9e0035 455px)"></div><div style="left:50px;top:194px;width:455px;height:1px;background:linear-gradient(90deg,#004d9e,#00339e 101px,#0360ff 102px,#7d43ff 164px,#ff15fb 243px,#ff01d7 268px,#9e0081 269px,#9e004f 359px,#9e0036 454px)"></div><div style="left:51px;top:195px;width:453px;height:1px;background:linear-gradient(90deg,#004c9e,#00329e 100px,#025fff 101px,#7c42ff 163px,#ff13fb 243px,#ff01da 266px,#9e0083 267px,#9e0050 356px,#9e0037 452px)"></div><div style="left:51px;top:196px;width:452px;height:1px;background:linear-gradient(90deg,#004b9e,#00319e 100px,#025eff 101px,#7b41ff 163px,#ff12fb 244px,#ff01dd 265px,#9e0084 266px,#9e0051 356px,#9e0037 451px)"></div><div style="left:52px;top:197px;width:450px;height:1px;background:linear-gradient(90deg,#004a9e,#00319e 99px,#015dff 100px,#7542ff 159px,#ff10fb 244px,#ff01df 263px,#9e0086 264px,#9e0052 354px,#9e0038 449px)"></div><div style="left:52px;top:198px;width:449px;height:1px;background:linear-gradient(90deg,#00499e,#00309e 99px,#015cff 100px,#7441ff 159px,#ff0ef9 246px,#ff01e2 262px,#9e0088 263px,#9e0053 352px,#9e0039 448px)"></div><div style="left:53px;top:199px;width:447px;height:1px;background:linear-gradient(90deg,#00489e,#002f9e 99px,#035bff 100px,#7a3eff 162px,#ff0dfb 245px,#ff01e5 260px,#9e008a 261px,#9e0056 346px,#9e0039 446px)"></div><div style="left:53px;top:200px;width:446px;height:1px;background:linear-gradient(90deg,#00489e,#002f9e 99px,#035aff 100px,#803bff 166px,#ff0bf9 247px,#ff01e8 259px,#9e008c 260px,#9e0057 345px,#9e003a 445px)"></div><div style="left:54px;top:201px;width:444px;height:1px;background:linear-gradient(90deg,#00479e,#002e9e 98px,#0259ff 99px,#753dff 159px,#ff09f9 247px,#ff01eb 257px,#9e008e 258px,#9e0059 341px,#9e003b 443px)"></div><div style="left:54px;top:202px;width:443px;height:1px;background:linear-gradient(90deg,#00469e,#002e9e 98px,#0258ff 99px,#793bff 162px,#ff08f9 248px,#ff01ed 256px,#9e0090 257px,#9e005a 340px,#9e003b 442px)"></div><div style="left:55px;top:203px;width:441px;height:1px;background:linear-gradient(90deg,#00459e,#002d9e 97px,#0157ff 98px,#6e3dff 155px,#ff06f9 248px,#ff01f0 254px,#9e0092 255px,#9e005c 336px,#9e003c 440px)"></div><div style="left:55px;top:204px;width:440px;height:1px;background:linear-gradient(90deg,#00449e,#002d9e 97px,#0156ff 98px,#743aff 159px,#ff05f9 249px,#ff01f3 253px,#9e0095 254px,#9e005f 330px,#9e003d 439px)"></div><div style="left:56px;top:205px;width:438px;height:1px;background:linear-gradient(90deg,#00449e,#002c9e 97px,#0355ff 98px,#7d36ff 164px,#ff03f9 249px,#ff01f6 251px,#9e0097 252px,#9e0061 327px,#9e003d 437px)"></div><div style="left:56px;top:206px;width:437px;height:1px;background:linear-gradient(90deg,#00439e,#002b9e 97px,#0354ff 98px,#7c36ff 164px,#ff01f9 250px,#9e0099 251px,#9e0062 326px,#9e003e 436px)"></div><div style="left:57px;top:207px;width:435px;height:1px;background:linear-gradient(90deg,#00429e,#002b9e 96px,#0253ff 97px,#7337ff 158px,#ff01fc 248px,#9e009b 249px,#9e0064 323px,#9e003f 434px)"></div><div style="left:57px;top:208px;width:434px;height:1px;background:linear-gradient(90deg,#00429e,#002a9e 96px,#0253ff 97px,#7735ff 161px,#fe01ff 247px,#9e009d 248px,#9e0064 324px,#9e003f 433px)"></div><div style="left:58px;top:209px;width:432px;height:1px;background:linear-gradient(90deg,#00419e,#002a9e 95px,#0152ff 96px,#6e37ff 155px,#fb01ff 245px,#9d009e 246px,#9e0063 326px,#9e0040 431px)"></div><div style="left:58px;top:210px;width:431px;height:1px;background:linear-gradient(90deg,#00409e,#00299e 95px,#0151ff 96px,#7434ff 159px,#f801ff 244px,#9a009e 245px,#9e0060 334px,#9e0041 430px)"></div><div style="left:59px;top:211px;width:429px;height:1px;background:linear-gradient(90deg,#003f9e,#00299e 94px,#0050ff 95px,#6637ff 150px,#f501ff 242px,#98009e 243px,#9e005e 339px,#9e0041 428px)"></div><div style="left:59px;top:212px;width:428px;height:1px;background:linear-gradient(90deg,#003f9e,#00289e 95px,#034fff 96px,#7f2fff 166px,#f201ff 241px,#96009e 242px,#9e008a 270px,#9e0056 361px,#9e0042 427px)"></div><div style="left:60px;top:213px;width:426px;height:1px;background:linear-gradient(90deg,#003e9e,#00279e 94px,#024eff 95px,#7331ff 158px,#ef01ff 239px,#94009e 240px,#9e0091 262px,#9e005b 348px,#9e0043 425px)"></div><div style="left:60px;top:214px;width:425px;height:1px;background:linear-gradient(90deg,#003d9e,#00279e 94px,#024dff 95px,#772fff 161px,#ec01ff 238px,#92009e 239px,#9e0093 261px,#9e005c 347px,#9e0044 424px)"></div><div style="left:61px;top:215px;width:423px;height:1px;background:linear-gradient(90deg,#003c9e,#00269e 93px,#014cff 94px,#7030ff 156px,#e901ff 236px,#8f009e 237px,#9e0096 258px,#9e005f 341px,#9e0044 422px)"></div><div style="left:62px;top:216px;width:421px;height:1px;background:linear-gradient(90deg,#003c9e,#00269e 92px,#014bff 93px,#6f30ff 155px,#e601ff 234px,#8d009e 235px,#9e0096 258px,#9e005f 342px,#9e0045 420px)"></div><div style="left:62px;top:217px;width:420px;height:1px;background:linear-gradient(90deg,#003b9e,#00269e 92px,#004bff 93px,#6831ff 151px,#e401ff 233px,#8b009e 234px,#9e0097 258px,#9e0060 341px,#9e0046 419px)"></div><div style="left:63px;top:218px;width:419px;height:1px;background:linear-gradient(90deg,#003a9e,#00259e 92px,#0349ff 93px,#8028ff 166px,#e101ff 231px,#89009e 232px,#9e0097 258px,#9e005f 343px,#9e0046 418px)"></div><div style="left:63px;top:219px;width:418px;height:1px;background:linear-gradient(90deg,#003a9e,#00249e 92px,#0249ff 93px,#762bff 160px,#de01ff 230px,#87009e 231px,#9e0097 259px,#9e0060 343px,#9e0047 417px)"></div><div style="left:64px;top:220px;width:416px;height:1px;background:linear-gradient(90deg,#00399e,#00249e 91px,#0248ff 92px,#752aff 159px,#db01ff 228px,#85009e 229px,#9e0097 259px,#9e005f 345px,#9e0048 415px)"></div><div style="left:64px;top:221px;width:415px;height:1px;background:linear-gradient(90deg,#00399e,#00239e 91px,#0147ff 92px,#6b2cff 153px,#d801ff 227px,#83009e 228px,#9e0097 260px,#9e0060 345px,#9e0049 414px)"></div><div style="left:65px;top:222px;width:413px;height:1px;background:linear-gradient(90deg,#00389e,#00239e 90px,#0146ff 91px,#6f2aff 155px,#d601ff 225px,#81009e 226px,#9e0097 260px,#9e005f 347px,#9e0049 412px)"></div><div style="left:65px;top:223px;width:412px;height:1px;background:linear-gradient(90deg,#00379e,#00239e 90px,#0046ff 91px,#652cff 149px,#d301ff 224px,#80009e 225px,#9e0098 261px,#9e0061 344px,#9e004a 411px)"></div><div style="left:66px;top:224px;width:410px;height:1px;background:linear-gradient(90deg,#00379e,#00229e 90px,#0345ff 91px,#7e23ff 165px,#d200ff 223px,#7f009e 224px,#9e0098 261px,#9e0062 343px,#9e004b 409px)"></div><div style="left:66px;top:225px;width:409px;height:1px;background:linear-gradient(90deg,#00369e,#00229e 90px,#0244ff 91px,#7425ff 159px,#cf00ff 222px,#7d009e 223px,#9e0098 262px,#9e0062 344px,#9e004c 408px)"></div><div style="left:67px;top:226px;width:407px;height:1px;background:linear-gradient(90deg,#00359e,#00219e 89px,#0243ff 90px,#7823ff 161px,#cd00ff 220px,#7b009e 221px,#9e0098 262px,#9e0061 346px,#9e004c 406px)"></div><div style="left:68px;top:227px;width:405px;height:1px;background:linear-gradient(90deg,#00359e,#00219e 88px,#0142ff 89px,#6d26ff 153px,#ca00ff 218px,#79009e 219px,#9e0099 261px,#9e0063 343px,#9e004d 404px)"></div><div style="left:68px;top:228px;width:404px;height:1px;background:linear-gradient(90deg,#00349e,#00209e 88px,#0142ff 89px,#7223ff 157px,#c700ff 217px,#77009e 218px,#9e0099 262px,#9e0062 346px,#9e004e 403px)"></div><div style="left:69px;top:229px;width:402px;height:1px;background:linear-gradient(90deg,#00339e,#00209e 87px,#0041ff 88px,#6427ff 147px,#c500ff 215px,#76009e 216px,#9e0098 263px,#9e0061 349px,#9e004f 401px)"></div><div style="left:69px;top:230px;width:401px;height:1px;background:linear-gradient(90deg,#00339e,#001f9e 88px,#0340ff 89px,#831cff 169px,#c200ff 214px,#74009e 215px,#9e0098 264px,#9e0061 350px,#9e0050 400px)"></div><div style="left:70px;top:231px;width:399px;height:1px;background:linear-gradient(90deg,#00329e,#001f9e 87px,#023fff 88px,#7121ff 156px,#c000ff 212px,#72009e 213px,#9e0099 263px,#9e0062 349px,#9e0050 398px)"></div><div style="left:70px;top:232px;width:398px;height:1px;background:linear-gradient(90deg,#00329e,#001e9e 87px,#023eff 88px,#761eff 160px,#bd00ff 211px,#70009e 212px,#9e0099 264px,#9e0062 350px,#9e0051 397px)"></div><div style="left:71px;top:233px;width:396px;height:1px;background:linear-gradient(90deg,#00319e,#001e9e 86px,#013eff 87px,#6a22ff 151px,#bb00ff 209px,#6f009e 210px,#9e0098 265px,#9e0062 351px,#9e0052 395px)"></div><div style="left:72px;top:234px;width:394px;height:1px;background:linear-gradient(90deg,#00309e,#001e9e 85px,#013dff 86px,#6f1fff 154px,#b900ff 207px,#6d009e 208px,#9e0099 264px,#9e0062 351px,#9e0053 393px)"></div><div style="left:72px;top:235px;width:393px;height:1px;background:linear-gradient(90deg,#00309e,#001d9e 85px,#003cff 86px,#6621ff 148px,#b600ff 206px,#6b009e 207px,#9e0099 265px,#9e0062 353px,#9e0054 392px)"></div><div style="left:73px;top:236px;width:391px;height:1px;background:linear-gradient(90deg,#002f9e,#001d9e 85px,#033bff 86px,#8117ff 167px,#b400ff 204px,#6a009e 205px,#9e0098 266px,#9e0061 356px,#9e0055 390px)"></div><div style="left:73px;top:237px;width:390px;height:1px;background:linear-gradient(90deg,#002f9e,#001c9e 85px,#023bff 86px,#741bff 158px,#b200ff 203px,#68009e 204px,#9e0098 267px,#9e0061 357px,#9e0055 389px)"></div><div style="left:74px;top:238px;width:388px;height:1px;background:linear-gradient(90deg,#002e9e,#001c9e 84px,#023aff 85px,#7918ff 161px,#af00ff 201px,#67009e 202px,#9e0098 267px,#9e0061 357px,#9e0056 387px)"></div><div style="left:74px;top:239px;width:387px;height:1px;background:linear-gradient(90deg,#002e9e,#001c9e 84px,#0239ff 85px,#7c16ff 164px,#ad00ff 200px,#65009e 201px,#9e0098 268px,#9e0061 359px,#9e0057 386px)"></div><div style="left:75px;top:240px;width:385px;height:1px;background:linear-gradient(90deg,#002d9e,#001b9e 83px,#0139ff 84px,#6c1bff 152px,#ab00ff 198px,#63009e 199px,#9e0098 268px,#9e0060 362px,#9e0058 384px)"></div><div style="left:76px;top:241px;width:383px;height:1px;background:linear-gradient(90deg,#002c9e,#001b9e 82px,#0138ff 83px,#7517ff 158px,#a800ff 196px,#62009e 197px,#9e0098 268px,#9e0061 360px,#9e0059 382px)"></div><div style="left:76px;top:242px;width:382px;height:1px;background:linear-gradient(90deg,#002c9e,#001a9e 83px,#0337ff 84px,#8610ff 171px,#a600ff 195px,#60009e 196px,#9e0098 269px,#9e0060 363px,#9e005a 381px)"></div><div style="left:77px;top:243px;width:380px;height:1px;background:linear-gradient(90deg,#002b9e,#001a9e 82px,#0236ff 83px,#7117ff 155px,#a400ff 193px,#5f009e 194px,#9e0098 269px,#9e0061 362px,#9e005b 379px)"></div><div style="left:77px;top:244px;width:379px;height:1px;background:linear-gradient(90deg,#002b9e,#001a9e 82px,#0236ff 83px,#7614ff 159px,#a200ff 192px,#5d009e 193px,#9e0098 270px,#9e0061 363px,#9e005c 378px)"></div><div style="left:78px;top:245px;width:377px;height:1px;background:linear-gradient(90deg,#002a9e,#00199e 81px,#0235ff 82px,#7d10ff 164px,#9f00ff 190px,#5c009e 191px,#9e0098 270px,#9e0061 364px,#9e005d 376px)"></div><div style="left:78px;top:246px;width:376px;height:1px;background:linear-gradient(90deg,#002a9e,#00199e 81px,#0135ff 82px,#6f15ff 154px,#9d00ff 189px,#5a009e 190px,#9e0098 271px,#9e0060 367px,#9e005d 375px)"></div><div style="left:79px;top:247px;width:374px;height:1px;background:linear-gradient(90deg,#00299e,#00199e 80px,#0134ff 81px,#7512ff 158px,#9b00ff 187px,#59009e 188px,#9e0098 271px,#9e0061 366px,#9e005e 373px)"></div><div style="left:80px;top:248px;width:372px;height:1px;background:linear-gradient(90deg,#00299e,#00189e 79px,#0033ff 80px,#6b15ff 150px,#9901ff 185px,#58009e 186px,#9e0098 271px,#9e0060 369px,#9e005f 371px)"></div><div style="left:80px;top:249px;width:371px;height:1px;background:linear-gradient(90deg,#00289e,#00189e 80px,#0232ff 81px,#790fff 161px,#9701ff 184px,#56009e 185px,#9e0098 272px,#9e0061 368px,#9e0060 370px)"></div><div style="left:81px;top:250px;width:369px;height:1px;background:linear-gradient(90deg,#00289e,#00179e 79px,#0232ff 80px,#780eff 160px,#9501ff 182px,#55009e 183px,#9e0098 272px,#9e0061 368px)"></div><div style="left:81px;top:251px;width:368px;height:1px;background:linear-gradient(90deg,#00279e,#00179e 79px,#0231ff 80px,#7a0cff 162px,#9301ff 181px,#53009e 182px,#9e0098 273px,#9e0062 367px)"></div><div style="left:82px;top:252px;width:366px;height:1px;background:linear-gradient(90deg,#00279e,#00179e 78px,#0130ff 79px,#6f10ff 153px,#9101ff 179px,#52009e 180px,#9e0099 273px,#9e0063 365px)"></div><div style="left:83px;top:253px;width:364px;height:1px;background:linear-gradient(90deg,#00269e,#00169e 77px,#0130ff 78px,#750dff 157px,#8f01ff 177px,#51009e 178px,#9e0099 273px,#9e0064 363px)"></div><div style="left:83px;top:254px;width:363px;height:1px;background:linear-gradient(90deg,#00269e,#00169e 77px,#002fff 78px,#6b10ff 150px,#8c01ff 176px,#4f009e 177px,#9e0099 274px,#9e0065 362px)"></div><div style="left:84px;top:255px;width:361px;height:1px;background:linear-gradient(90deg,#00259e,#00159e 77px,#022eff 78px,#720cff 155px,#8a01ff 174px,#4e009e 175px,#9e0099 274px,#9e0066 360px)"></div><div style="left:84px;top:256px;width:361px;height:1px;background:linear-gradient(90deg,#00259e,#00159e 77px,#022eff 78px,#740bff 157px,#8801ff 173px,#4d009e 174px,#9e0099 275px,#9e0067 360px)"></div><div style="left:85px;top:257px;width:359px;height:1px;background:linear-gradient(90deg,#00249e,#00159e 76px,#022dff 77px,#7a07ff 161px,#8601ff 171px,#4b009e 172px,#9e0099 275px,#9e0068 358px)"></div><div style="left:86px;top:258px;width:357px;height:1px;background:linear-gradient(90deg,#00249e,#00159e 75px,#012dff 76px,#6f0bff 152px,#8401ff 169px,#4a009e 170px,#9e0099 275px,#9e0069 356px)"></div><div style="left:86px;top:259px;width:356px;height:1px;background:linear-gradient(90deg,#00239e,#00149e 75px,#012cff 76px,#7209ff 155px,#8301ff 168px,#49009e 169px,#9e0099 276px,#9e006a 355px)"></div><div style="left:87px;top:260px;width:354px;height:1px;background:linear-gradient(90deg,#00239e,#00149e 74px,#002cff 75px,#660dff 145px,#8101ff 166px,#47009e 167px,#9e0099 276px,#9e006b 353px)"></div><div style="left:87px;top:261px;width:353px;height:1px;background:linear-gradient(90deg,#00229e,#00139e 75px,#022bff 76px,#7207ff 155px,#7f01ff 165px,#46009e 166px,#9e0099 277px,#9e006c 352px)"></div><div style="left:88px;top:262px;width:351px;height:1px;background:linear-gradient(90deg,#00229e,#00139e 74px,#022aff 75px,#7505ff 157px,#7d01ff 163px,#45009e 164px,#9e0099 277px,#9e006d 350px)"></div><div style="left:89px;top:263px;width:349px;height:1px;background:linear-gradient(90deg,#00219e,#00139e 73px,#0229ff 74px,#7b01ff 161px,#44009e 162px,#9e0098 278px,#9e006e 348px)"></div><div style="left:89px;top:264px;width:348px;height:1px;background:linear-gradient(90deg,#00219e,#00139e 73px,#0129ff 74px,#6f06ff 152px,#7901ff 160px,#42009e 161px,#9e0099 278px,#9e006f 347px)"></div><div style="left:90px;top:265px;width:346px;height:1px;background:linear-gradient(90deg,#00219e,#00129e 72px,#0128ff 73px,#7204ff 154px,#7701ff 158px,#41009e 159px,#9e0098 279px,#9e0070 345px)"></div><div style="left:90px;top:266px;width:345px;height:1px;background:linear-gradient(90deg,#00209e,#00129e 72px,#0028ff 73px,#6907ff 147px,#7501ff 157px,#40009e 158px,#9e0098 280px,#9e0071 344px)"></div><div style="left:91px;top:267px;width:343px;height:1px;background:linear-gradient(90deg,#00209e,#00129e 72px,#0227ff 73px,#7202ff 154px,#7301ff 155px,#3f009e 156px,#9e0098 280px,#9e0072 342px)"></div><div style="left:92px;top:268px;width:341px;height:1px;background:linear-gradient(90deg,#001f9e,#00119e 71px,#0226ff 72px,#7101ff 153px,#3e009e 154px,#9e0098 280px,#9e0073 340px)"></div><div style="left:92px;top:269px;width:340px;height:1px;background:linear-gradient(90deg,#001f9e,#00119e 71px,#0226ff 72px,#7001ff 152px,#3d009e 153px,#9e0098 281px,#9e0074 339px)"></div><div style="left:93px;top:270px;width:338px;height:1px;background:linear-gradient(90deg,#001e9e,#00119e 70px,#0125ff 71px,#6e01ff 150px,#3b009e 151px,#9e0098 281px,#9e0075 337px)"></div><div style="left:93px;top:271px;width:337px;height:1px;background:linear-gradient(90deg,#001e9e,#00109e 70px,#0125ff 71px,#6c01ff 149px,#3a009e 150px,#9e0098 282px,#9e0076 336px)"></div><div style="left:94px;top:272px;width:335px;height:1px;background:linear-gradient(90deg,#001d9e,#00109e 69px,#0024ff 70px,#6404ff 142px,#6a01ff 147px,#39009e 148px,#9e0098 282px,#9e0078 334px)"></div><div style="left:95px;top:273px;width:333px;height:1px;background:linear-gradient(90deg,#001d9e,#00109e 69px,#0223ff 70px,#6801ff 145px,#38009e 146px,#9e0098 282px,#9e0079 332px)"></div><div style="left:95px;top:274px;width:332px;height:1px;background:linear-gradient(90deg,#001d9e,#000f9e 69px,#0223ff 70px,#6701ff 144px,#37009e 145px,#9e0098 283px,#9e007a 331px)"></div><div style="left:96px;top:275px;width:330px;height:1px;background:linear-gradient(90deg,#001c9e,#000f9e 68px,#0222ff 69px,#6501ff 142px,#36009e 143px,#9e0098 283px,#9e007b 329px)"></div><div style="left:96px;top:276px;width:329px;height:1px;background:linear-gradient(90deg,#001c9e,#000f9e 68px,#0122ff 69px,#6301ff 141px,#35009e 142px,#9e0098 284px,#9e007c 328px)"></div><div style="left:97px;top:277px;width:327px;height:1px;background:linear-gradient(90deg,#001b9e,#000f9e 67px,#0121ff 68px,#6101ff 139px,#34009e 140px,#9e0098 284px,#9e007d 326px)"></div><div style="left:98px;top:278px;width:325px;height:1px;background:linear-gradient(90deg,#001b9e,#000e9e 66px,#0021ff 67px,#6001ff 137px,#33009e 138px,#9e0098 284px,#9e007f 324px)"></div><div style="left:98px;top:279px;width:324px;height:1px;background:linear-gradient(90deg,#001b9e,#000e9e 67px,#0220ff 68px,#5f00ff 137px,#32009e 138px,#9e0098 285px,#9e0080 323px)"></div><div style="left:99px;top:280px;width:322px;height:1px;background:linear-gradient(90deg,#001a9e,#000e9e 66px,#021fff 67px,#5d00ff 135px,#31009e 136px,#9e0098 285px,#9e0081 321px)"></div><div style="left:100px;top:281px;width:320px;height:1px;background:linear-gradient(90deg,#001a9e,#000d9e 65px,#021fff 66px,#5c00ff 133px,#30009e 134px,#9e0099 285px,#9e0082 319px)"></div><div style="left:100px;top:282px;width:319px;height:1px;background:linear-gradient(90deg,#00199e,#000d9e 65px,#011eff 66px,#5a00ff 132px,#2f009e 133px,#9e0099 286px,#9e0083 318px)"></div><div style="left:101px;top:283px;width:317px;height:1px;background:linear-gradient(90deg,#00199e,#000d9e 64px,#011eff 65px,#5800ff 130px,#2e009e 131px,#9e0099 286px,#9e0085 316px)"></div><div style="left:101px;top:284px;width:316px;height:1px;background:linear-gradient(90deg,#00199e,#000d9e 64px,#011eff 65px,#5700ff 129px,#2d009e 130px,#9e0099 287px,#9e0086 315px)"></div><div style="left:102px;top:285px;width:314px;height:1px;background:linear-gradient(90deg,#00189e,#000c9e 63px,#001dff 64px,#5500ff 127px,#2c009e 128px,#9e0099 287px,#9e0087 313px)"></div><div style="left:103px;top:286px;width:312px;height:1px;background:linear-gradient(90deg,#00189e,#000c9e 63px,#021cff 64px,#5300ff 125px,#2b009e 126px,#9e0099 287px,#9e0089 311px)"></div><div style="left:103px;top:287px;width:311px;height:1px;background:linear-gradient(90deg,#00179e,#000c9e 63px,#021cff 64px,#5200ff 124px,#2a009e 125px,#9e0099 288px,#9e008a 310px)"></div><div style="left:104px;top:288px;width:309px;height:1px;background:linear-gradient(90deg,#00179e,#000c9e 62px,#011bff 63px,#5000ff 122px,#29009e 123px,#9e0099 288px,#9e008b 308px)"></div><div style="left:105px;top:289px;width:307px;height:1px;background:linear-gradient(90deg,#00169e,#000b9e 61px,#011bff 62px,#4f00ff 120px,#28009e 121px,#9e0099 288px,#9e008c 306px)"></div><div style="left:105px;top:290px;width:306px;height:1px;background:linear-gradient(90deg,#00169e,#000b9e 61px,#011aff 62px,#4d00ff 119px,#27009e 120px,#9e0098 290px,#9e008e 305px)"></div><div style="left:106px;top:291px;width:304px;height:1px;background:linear-gradient(90deg,#00169e,#000b9e 60px,#001aff 61px,#4b00ff 117px,#26009e 118px,#9e0098 290px,#9e008f 303px)"></div><div style="left:107px;top:292px;width:302px;height:1px;background:linear-gradient(90deg,#00159e,#000a9e 60px,#0219ff 61px,#4a00ff 115px,#25009e 116px,#9e0098 290px,#9e0091 301px)"></div><div style="left:107px;top:293px;width:301px;height:1px;background:linear-gradient(90deg,#00159e,#000a9e 60px,#0218ff 61px,#4800ff 114px,#24009e 115px,#9e0098 291px,#9e0092 300px)"></div><div style="left:108px;top:294px;width:300px;height:1px;background:linear-gradient(90deg,#00159e,#000a9e 59px,#0118ff 60px,#4700ff 112px,#24009e 113px,#9e0098 291px,#9e0093 299px)"></div><div style="left:108px;top:295px;width:299px;height:1px;background:linear-gradient(90deg,#00149e,#000a9e 59px,#0118ff 60px,#4500ff 111px,#23009e 112px,#9e0098 292px,#9e0094 298px)"></div><div style="left:109px;top:296px;width:297px;height:1px;background:linear-gradient(90deg,#00149e,#000a9e 58px,#0117ff 59px,#4300ff 109px,#22009e 110px,#9e0098 292px,#9e0095 296px)"></div><div style="left:110px;top:297px;width:295px;height:1px;background:linear-gradient(90deg,#00149e,#00099e 57px,#0017ff 58px,#4200ff 107px,#21009e 108px,#9e0098 292px,#9e0097 294px)"></div><div style="left:110px;top:298px;width:294px;height:1px;background:linear-gradient(90deg,#00139e,#00099e 58px,#0216ff 59px,#4000ff 106px,#20009e 107px,#9e0098 293px)"></div><div style="left:111px;top:299px;width:292px;height:1px;background:linear-gradient(90deg,#00139e,#00099e 57px,#0215ff 58px,#3f00ff 104px,#1f009e 105px,#9e009a 291px)"></div><div style="left:112px;top:300px;width:290px;height:1px;background:linear-gradient(90deg,#00129e,#00099e 56px,#0115ff 57px,#3d00ff 102px,#1e009e 103px,#9e009b 289px)"></div><div style="left:112px;top:301px;width:289px;height:1px;background:linear-gradient(90deg,#00129e,#00089e 56px,#0114ff 57px,#3c00ff 101px,#1d009e 102px,#9e009d 288px)"></div><div style="left:113px;top:302px;width:287px;height:1px;background:linear-gradient(90deg,#00129e,#00089e 55px,#0114ff 56px,#3a00ff 99px,#1c009e 100px,#9e009e 286px)"></div><div style="left:114px;top:303px;width:285px;height:1px;background:linear-gradient(90deg,#00119e,#00089e 54px,#0014ff 55px,#3900ff 97px,#1c009e 98px,#9d009e 284px)"></div><div style="left:114px;top:304px;width:284px;height:1px;background:linear-gradient(90deg,#00119e,#00079e 55px,#0213ff 56px,#3700ff 96px,#1b009e 97px,#9b009e 283px)"></div><div style="left:115px;top:305px;width:282px;height:1px;background:linear-gradient(90deg,#00119e,#00079e 54px,#0212ff 55px,#3600ff 94px,#1a009e 95px,#9a009e 281px)"></div><div style="left:116px;top:306px;width:280px;height:1px;background:linear-gradient(90deg,#00109e,#00079e 53px,#0112ff 54px,#3400ff 92px,#19009e 93px,#98009e 279px)"></div><div style="left:116px;top:307px;width:279px;height:1px;background:linear-gradient(90deg,#00109e,#00079e 53px,#0111ff 54px,#3200ff 91px,#18009e 92px,#97009e 278px)"></div><div style="left:117px;top:308px;width:277px;height:1px;background:linear-gradient(90deg,#00109e,#00079e 52px,#0111ff 53px,#3100ff 89px,#17009e 90px,#95009e 276px)"></div><div style="left:118px;top:309px;width:275px;height:1px;background:linear-gradient(90deg,#000f9e,#00069e 51px,#0011ff 52px,#2f00ff 87px,#17009e 88px,#94009e 274px)"></div><div style="left:118px;top:310px;width:274px;height:1px;background:linear-gradient(90deg,#000f9e,#00069e 52px,#0210ff 53px,#2e00ff 86px,#16009e 87px,#93009e 273px)"></div><div style="left:119px;top:311px;width:272px;height:1px;background:linear-gradient(90deg,#000f9e,#00069e 51px,#020fff 52px,#2c01ff 84px,#15009e 85px,#91009e 271px)"></div><div style="left:120px;top:312px;width:270px;height:1px;background:linear-gradient(90deg,#000e9e,#00069e 50px,#020fff 51px,#2b01ff 82px,#14009e 83px,#90009e 269px)"></div><div style="left:120px;top:313px;width:269px;height:1px;background:linear-gradient(90deg,#000e9e,#00069e 50px,#010eff 51px,#2a01ff 81px,#13009e 82px,#8e009e 268px)"></div><div style="left:121px;top:314px;width:267px;height:1px;background:linear-gradient(90deg,#000e9e,#00059e 49px,#010eff 50px,#2801ff 79px,#13009e 80px,#8d009e 266px)"></div><div style="left:122px;top:315px;width:265px;height:1px;background:linear-gradient(90deg,#000d9e,#00059e 48px,#000eff 49px,#2701ff 77px,#12009e 78px,#8c009e 264px)"></div><div style="left:123px;top:316px;width:263px;height:1px;background:linear-gradient(90deg,#000d9e,#00059e 48px,#020dff 49px,#2501ff 75px,#11009e 76px,#8a009e 262px)"></div><div style="left:123px;top:317px;width:262px;height:1px;background:linear-gradient(90deg,#000d9e,#00059e 48px,#020cff 49px,#2401ff 74px,#10009e 75px,#89009e 261px)"></div><div style="left:124px;top:318px;width:260px;height:1px;background:linear-gradient(90deg,#000c9e,#00049e 47px,#020cff 48px,#2201ff 72px,#0f009e 73px,#88009e 259px)"></div><div style="left:125px;top:319px;width:258px;height:1px;background:linear-gradient(90deg,#000c9e,#00049e 46px,#010bff 47px,#2101ff 70px,#0f009e 71px,#86009e 257px)"></div><div style="left:125px;top:320px;width:257px;height:1px;background:linear-gradient(90deg,#000c9e,#00049e 46px,#010bff 47px,#1f01ff 69px,#0e009e 70px,#85009e 256px)"></div><div style="left:126px;top:321px;width:255px;height:1px;background:linear-gradient(90deg,#000b9e,#00049e 45px,#000aff 46px,#1e01ff 67px,#0d009e 68px,#84009e 254px)"></div><div style="left:127px;top:322px;width:253px;height:1px;background:linear-gradient(90deg,#000b9e,#00049e 45px,#020aff 46px,#1c01ff 65px,#0c009e 66px,#83009e 252px)"></div><div style="left:127px;top:323px;width:252px;height:1px;background:linear-gradient(90deg,#000b9e,#00039e 45px,#0209ff 46px,#1b01ff 64px,#0c009e 65px,#81009e 251px)"></div><div style="left:128px;top:324px;width:250px;height:1px;background:linear-gradient(90deg,#000a9e,#00039e 44px,#0209ff 45px,#1901ff 62px,#0b009e 63px,#80009e 249px)"></div><div style="left:129px;top:325px;width:248px;height:1px;background:linear-gradient(90deg,#000a9e,#00039e 43px,#0108ff 44px,#1801ff 60px,#0a009e 61px,#7f009e 247px)"></div><div style="left:130px;top:326px;width:246px;height:1px;background:linear-gradient(90deg,#000a9e,#00039e 42px,#0108ff 43px,#1601ff 58px,#0a009e 59px,#7e009e 245px)"></div><div style="left:130px;top:327px;width:245px;height:1px;background:linear-gradient(90deg,#000a9e,#00039e 42px,#0107ff 43px,#1501ff 57px,#09009e 58px,#7c009e 244px)"></div><div style="left:131px;top:328px;width:243px;height:1px;background:linear-gradient(90deg,#00099e,#00029e 41px,#0007ff 42px,#1301ff 55px,#08009e 56px,#7b009e 242px)"></div><div style="left:132px;top:329px;width:241px;height:1px;background:linear-gradient(90deg,#00099e,#00029e 41px,#0206ff 42px,#1201ff 53px,#07009e 54px,#7a009e 240px)"></div><div style="left:133px;top:330px;width:239px;height:1px;background:linear-gradient(90deg,#00089e,#00029e 40px,#0206ff 41px,#1001ff 51px,#07009e 52px,#79009e 238px)"></div><div style="left:133px;top:331px;width:238px;height:1px;background:linear-gradient(90deg,#00089e,#00029e 40px,#0105ff 41px,#0f01ff 50px,#06009e 51px,#78009e 237px)"></div><div style="left:134px;top:332px;width:236px;height:1px;background:linear-gradient(90deg,#00089e,#00029e 39px,#0105ff 40px,#0d01ff 48px,#05009e 49px,#76009e 235px)"></div><div style="left:135px;top:333px;width:235px;height:1px;background:linear-gradient(90deg,#00089e,#00019e 38px,#0104ff 39px,#0b01ff 46px,#05009e 47px,#76009e 234px)"></div><div style="left:135px;top:334px;width:234px;height:1px;background:linear-gradient(90deg,#00079e,#00019e 38px,#0004ff 39px,#0a01ff 45px,#04009e 46px,#75009e 233px)"></div><div style="left:136px;top:335px;width:232px;height:1px;background:linear-gradient(90deg,#00079e,#00019e 38px,#0203ff 39px,#0a00ff 44px,#04009e 45px,#74009e 231px)"></div><div style="left:137px;top:336px;width:230px;height:1px;background:linear-gradient(90deg,#00079e,#00019e 37px,#0202ff 38px,#0800ff 42px,#03009e 43px,#72009e 229px)"></div><div style="left:138px;top:337px;width:228px;height:1px;background:linear-gradient(90deg,#00069e,#00019e 36px,#0102ff 37px,#0600ff 40px,#03009e 41px,#71009e 227px)"></div><div style="left:138px;top:338px;width:227px;height:1px;background:linear-gradient(90deg,#00069e,#00009e 36px,#0101ff 37px,#0400ff 39px,#02009e 40px,#70009e 226px)"></div><div style="left:139px;top:339px;width:225px;height:1px;background:linear-gradient(90deg,#00069e,#00009e 35px,#0101ff 36px,#0300ff 37px,#01009e 38px,#6f009e 224px)"></div><div style="left:140px;top:340px;width:223px;height:1px;background:linear-gradient(90deg,#00069e,#00009e 34px,#0000ff 35px,#01009e 36px,#6e009e 222px)"></div><div style="left:141px;top:341px;width:221px;height:1px;background:linear-gradient(90deg,#00059e,#08009e 49px,#6d009e 220px)"></div><div style="left:141px;top:342px;width:220px;height:1px;background:linear-gradient(90deg,#00059e,#08009e 49px,#6c009e 219px)"></div><div style="left:142px;top:343px;width:218px;height:1px;background:linear-gradient(90deg,#00059e,#08009e 48px,#6b009e 217px)"></div><div style="left:143px;top:344px;width:216px;height:1px;background:linear-gradient(90deg,#00049e,#08009e 48px,#6a009e 215px)"></div><div style="left:144px;top:345px;width:214px;height:1px;background:linear-gradient(90deg,#00049e,#09009e 49px,#69009e 213px)"></div><div style="left:144px;top:346px;width:213px;height:1px;background:linear-gradient(90deg,#00049e,#09009e 49px,#68009e 212px)"></div><div style="left:145px;top:347px;width:211px;height:1px;background:linear-gradient(90deg,#00049e,#09009e 48px,#66009e 210px)"></div><div style="left:146px;top:348px;width:209px;height:1px;background:linear-gradient(90deg,#00039e,#08009e 45px,#65009e 208px)"></div><div style="left:147px;top:349px;width:207px;height:1px;background:linear-gradient(90deg,#00039e,#09009e 46px,#64009e 206px)"></div><div style="left:148px;top:350px;width:205px;height:1px;background:linear-gradient(90deg,#00039e,#09009e 46px,#63009e 204px)"></div><div style="left:148px;top:351px;width:204px;height:1px;background:linear-gradient(90deg,#00029e,#09009e 46px,#62009e 203px)"></div><div style="left:149px;top:352px;width:202px;height:1px;background:linear-gradient(90deg,#00029e,#09009e 45px,#61009e 201px)"></div><div style="left:150px;top:353px;width:200px;height:1px;background:linear-gradient(90deg,#00029e,#0a009e 46px,#60009e 199px)"></div><div style="left:151px;top:354px;width:198px;height:1px;background:linear-gradient(90deg,#00029e,#0a009e 45px,#5f009e 197px)"></div><div style="left:152px;top:355px;width:196px;height:1px;background:linear-gradient(90deg,#00019e,#0a009e 45px,#5e009e 195px)"></div><div style="left:152px;top:356px;width:195px;height:1px;background:linear-gradient(90deg,#00019e,#0a009e 45px,#5d009e 194px)"></div><div style="left:153px;top:357px;width:193px;height:1px;background:linear-gradient(90deg,#00019e,#0a009e 44px,#5c009e 192px)"></div><div style="left:154px;top:358px;width:191px;height:1px;background:linear-gradient(90deg,#00019e,#0b009e 45px,#5b009e 190px)"></div><div style="left:155px;top:359px;width:189px;height:1px;background:linear-gradient(90deg,#00009e,#0b009e 44px,#5a009e 188px)"></div><div style="left:156px;top:360px;width:187px;height:1px;background:linear-gradient(90deg,#00009e,#0b009e 44px,#5a009e 186px)"></div><div style="left:156px;top:361px;width:186px;height:1px;background:linear-gradient(90deg,#00009e,#0b009e 44px,#59009e 185px)"></div><div style="left:157px;top:362px;width:184px;height:1px;background:linear-gradient(90deg,#00009e,#0c009e 45px,#58009e 183px)"></div><div style="left:158px;top:363px;width:182px;height:1px;background:linear-gradient(90deg,#00009e,#0c009e 44px,#57009e 181px)"></div><div style="left:159px;top:364px;width:180px;height:1px;background:linear-gradient(90deg,#00009e,#0d009e 45px,#56009e 179px)"></div><div style="left:160px;top:365px;width:178px;height:1px;background:linear-gradient(90deg,#00009e,#0f009e 48px,#55009e 177px)"></div><div style="left:161px;top:366px;width:176px;height:1px;background:linear-gradient(90deg,#00009e,#0e009e 46px,#54009e 175px)"></div><div style="left:162px;top:367px;width:174px;height:1px;background:linear-gradient(90deg,#00009e,#10009e 49px,#53009e 173px)"></div><div style="left:162px;top:368px;width:173px;height:1px;background:linear-gradient(90deg,#00009e,#10009e 49px,#52009e 172px)"></div><div style="left:163px;top:369px;width:171px;height:1px;background:linear-gradient(90deg,#00009e,#12009e 52px,#51009e 170px)"></div><div style="left:164px;top:370px;width:169px;height:1px;background:linear-gradient(90deg,#00009e,#15009e 57px,#50009e 168px)"></div><div style="left:165px;top:371px;width:168px;height:1px;background:linear-gradient(90deg,#00009e,#1a009e 66px,#50009e 167px)"></div><div style="left:166px;top:372px;width:166px;height:1px;background:linear-gradient(90deg,#00009e,#1a009e 66px,#4f009e 165px)"></div><div style="left:167px;top:373px;width:164px;height:1px;background:linear-gradient(90deg,#00009e,#21009e 78px,#4e009e 163px)"></div><div style="left:168px;top:374px;width:162px;height:1px;background:linear-gradient(90deg,#00009e,#36009e 118px,#4d009e 161px)"></div><div style="left:169px;top:375px;width:160px;height:1px;background:linear-gradient(90deg,#00009e,#4d009e 159px)"></div><div style="left:169px;top:376px;width:159px;height:1px;background:linear-gradient(90deg,#00009e,#4c009e 158px)"></div><div style="left:170px;top:377px;width:157px;height:1px;background:linear-gradient(90deg,#00009e,#4b009e 156px)"></div><div style="left:171px;top:378px;width:155px;height:1px;background:linear-gradient(90deg,#00009e,#4a009e 154px)"></div><div style="left:172px;top:379px;width:153px;height:1px;background:linear-gradient(90deg,#00009e,#49009e 152px)"></div><div style="left:173px;top:380px;width:151px;height:1px;background:linear-gradient(90deg,#00009e,#48009e 150px)"></div><div style="left:174px;top:381px;width:149px;height:1px;background:linear-gradient(90deg,#00009e,#47009e 148px)"></div><div style="left:175px;top:382px;width:147px;height:1px;background:linear-gradient(90deg,#00009e,#47009e 146px)"></div><div style="left:176px;top:383px;width:145px;height:1px;background:linear-gradient(90deg,#00009e,#46009e 144px)"></div><div style="left:177px;top:384px;width:143px;height:1px;background:linear-gradient(90deg,#00009e,#45009e 142px)"></div><div style="left:178px;top:385px;width:141px;height:1px;background:linear-gradient(90deg,#00009e,#44009e 140px)"></div><div style="left:179px;top:386px;width:139px;height:1px;background:linear-gradient(90deg,#00009e,#43009e 138px)"></div><div style="left:180px;top:387px;width:137px;height:1px;background:linear-gradient(90deg,#00009e,#43009e 136px)"></div><div style="left:181px;top:388px;width:135px;height:1px;background:linear-gradient(90deg,#00009e,#42009e 134px)"></div><div style="left:182px;top:389px;width:133px;height:1px;background:linear-gradient(90deg,#00009e,#41009e 132px)"></div><div style="left:183px;top:390px;width:131px;height:1px;background:linear-gradient(90deg,#00009e,#40009e 130px)"></div><div style="left:184px;top:391px;width:129px;height:1px;background:linear-gradient(90deg,#00009e,#3f009e 128px)"></div><div style="left:185px;top:392px;width:127px;height:1px;background:linear-gradient(90deg,#01009e,#3f009e 126px)"></div><div style="left:186px;top:393px;width:125px;height:1px;background:linear-gradient(90deg,#01009e,#3e009e 124px)"></div><div style="left:187px;top:394px;width:123px;height:1px;background:linear-gradient(90deg,#02009e,#3d009e 122px)"></div><div style="left:188px;top:395px;width:121px;height:1px;background:linear-gradient(90deg,#02009e,#3c009e 120px)"></div><div style="left:189px;top:396px;width:119px;height:1px;background:linear-gradient(90deg,#02009e,#3c009e 118px)"></div><div style="left:190px;top:397px;width:117px;height:1px;background:linear-gradient(90deg,#03009e,#3b009e 116px)"></div><div style="left:191px;top:398px;width:115px;height:1px;background:linear-gradient(90deg,#03009e,#3a009e 114px)"></div><div style="left:192px;top:399px;width:113px;height:1px;background:linear-gradient(90deg,#04009e,#39009e 112px)"></div><div style="left:194px;top:400px;width:110px;height:1px;background:linear-gradient(90deg,#04009e,#39009e 109px)"></div><div style="left:195px;top:401px;width:108px;height:1px;background:linear-gradient(90deg,#05009e,#38009e 107px)"></div><div style="left:196px;top:402px;width:106px;height:1px;background:linear-gradient(90deg,#05009e,#37009e 105px)"></div><div style="left:197px;top:403px;width:104px;height:1px;background:linear-gradient(90deg,#05009e,#37009e 103px)"></div><div style="left:198px;top:404px;width:102px;height:1px;background:linear-gradient(90deg,#06009e,#36009e 101px)"></div><div style="left:199px;top:405px;width:100px;height:1px;background:linear-gradient(90deg,#06009e,#35009e 99px)"></div><div style="left:200px;top:406px;width:98px;height:1px;background:linear-gradient(90deg,#07009e,#34009e 97px)"></div><div style="left:201px;top:407px;width:96px;height:1px;background:linear-gradient(90deg,#07009e,#34009e 95px)"></div><div style="left:203px;top:408px;width:93px;height:1px;background:linear-gradient(90deg,#08009e,#33009e 92px)"></div><div style="left:204px;top:409px;width:92px;height:1px;background:linear-gradient(90deg,#08009e,#33009e 91px)"></div><div style="left:205px;top:410px;width:90px;height:1px;background:linear-gradient(90deg,#09009e,#32009e 89px)"></div><div style="left:206px;top:411px;width:88px;height:1px;background:linear-gradient(90deg,#09009e,#31009e 87px)"></div><div style="left:207px;top:412px;width:86px;height:1px;background:linear-gradient(90deg,#09009e,#31009e 85px)"></div><div style="left:208px;top:413px;width:84px;height:1px;background:linear-gradient(90deg,#0a009e,#30009e 83px)"></div><div style="left:210px;top:414px;width:81px;height:1px;background:linear-gradient(90deg,#0a009e,#2f009e 80px)"></div><div style="left:211px;top:415px;width:79px;height:1px;background:linear-gradient(90deg,#0b009e,#2f009e 78px)"></div><div style="left:212px;top:416px;width:77px;height:1px;background:linear-gradient(90deg,#0b009e,#2e009e 76px)"></div><div style="left:213px;top:417px;width:75px;height:1px;background:linear-gradient(90deg,#0b009e,#2d009e 74px)"></div><div style="left:215px;top:418px;width:72px;height:1px;background:linear-gradient(90deg,#0c009e,#2d009e 71px)"></div><div style="left:216px;top:419px;width:70px;height:1px;background:linear-gradient(90deg,#0d009e,#2c009e 69px)"></div><div style="left:217px;top:420px;width:68px;height:1px;background:linear-gradient(90deg,#0d009e,#2b009e 67px)"></div><div style="left:218px;top:421px;width:66px;height:1px;background:linear-gradient(90deg,#0d009e,#2b009e 65px)"></div><div style="left:219px;top:422px;width:64px;height:1px;background:linear-gradient(90deg,#0e009e,#2a009e 63px)"></div><div style="left:221px;top:423px;width:61px;height:1px;background:linear-gradient(90deg,#0e009e,#29009e 60px)"></div><div style="left:222px;top:424px;width:59px;height:1px;background:linear-gradient(90deg,#0f009e,#29009e 58px)"></div><div style="left:223px;top:425px;width:57px;height:1px;background:linear-gradient(90deg,#0f009e,#28009e 56px)"></div><div style="left:224px;top:426px;width:55px;height:1px;background:linear-gradient(90deg,#0f009e,#28009e 54px)"></div><div style="left:225px;top:427px;width:53px;height:1px;background:linear-gradient(90deg,#10009e,#27009e 52px)"></div><div style="left:227px;top:428px;width:50px;height:1px;background:linear-gradient(90deg,#10009e,#26009e 49px)"></div><div style="left:228px;top:429px;width:48px;height:1px;background:linear-gradient(90deg,#11009e,#26009e 47px)"></div><div style="left:229px;top:430px;width:46px;height:1px;background:linear-gradient(90deg,#11009e,#25009e 45px)"></div><div style="left:230px;top:431px;width:44px;height:1px;background:linear-gradient(90deg,#11009e,#24009e 43px)"></div><div style="left:232px;top:432px;width:41px;height:1px;background:linear-gradient(90deg,#12009e,#24009e 40px)"></div><div style="left:233px;top:433px;width:39px;height:1px;background:linear-gradient(90deg,#13009e,#23009e 38px)"></div><div style="left:234px;top:434px;width:37px;height:1px;background:linear-gradient(90deg,#13009e,#23009e 36px)"></div><div style="left:235px;top:435px;width:35px;height:1px;background:linear-gradient(90deg,#13009e,#22009e 34px)"></div><div style="left:236px;top:436px;width:33px;height:1px;background:linear-gradient(90deg,#13009e,#21009e 32px)"></div><div style="left:238px;top:437px;width:30px;height:1px;background:linear-gradient(90deg,#14009e,#21009e 29px)"></div><div style="left:239px;top:438px;width:28px;height:1px;background:linear-gradient(90deg,#15009e,#20009e 27px)"></div><div style="left:240px;top:439px;width:26px;height:1px;background:linear-gradient(90deg,#15009e,#20009e 25px)"></div><div style="left:241px;top:440px;width:24px;height:1px;background:linear-gradient(90deg,#15009e,#1f009e 23px)"></div><div style="left:242px;top:441px;width:22px;height:1px;background:linear-gradient(90deg,#15009e,#1e009e 21px)"></div><div style="left:244px;top:442px;width:19px;height:1px;background:linear-gradient(90deg,#16009e,#1e009e 18px)"></div><div style="left:245px;top:443px;width:17px;height:1px;background:linear-gradient(90deg,#16009e,#1d009e 16px)"></div><div style="left:246px;top:444px;width:15px;height:1px;background:linear-gradient(90deg,#17009e,#1d009e 14px)"></div><div style="left:247px;top:445px;width:13px;height:1px;background:linear-gradient(90deg,#17009e,#1c009e 12px)"></div><div style="left:249px;top:446px;width:10px;height:1px;background:linear-gradient(90deg,#18009e,#1c009e 9px)"></div><div style="left:250px;top:447px;width:9px;height:1px;background:linear-gradient(90deg,#18009e,#1c009e 8px)"></div><div style="left:251px;top:448px;width:7px;height:1px;background:linear-gradient(90deg,#18009e,#1b009e 6px)"></div><div style="left:253px;top:449px;width:3px;height:1px;background:linear-gradient(90deg,#19009e,#1a009e 2px)"></div>
</div>
<div class="a" style="left:946.0px;top:95.4px;width:5.0px;height:1.0px;background:#c0c0c0;"></div>
<div class="t" style="left:345.5px;width:600px;text-align:right;top:89.2px;font-size:13px;color:#d0d0d0;">0,55</div>
<div class="a" style="left:946.0px;top:133.8px;width:5.0px;height:1.0px;background:#c0c0c0;"></div>
<div class="t" style="left:345.5px;width:600px;text-align:right;top:127.6px;font-size:13px;color:#d0d0d0;">0,5</div>
<div class="a" style="left:946.0px;top:172.2px;width:5.0px;height:1.0px;background:#c0c0c0;"></div>
<div class="t" style="left:345.5px;width:600px;text-align:right;top:166.0px;font-size:13px;color:#d0d0d0;">0,45</div>
<div class="a" style="left:946.0px;top:210.6px;width:5.0px;height:1.0px;background:#c0c0c0;"></div>
<div class="t" style="left:345.5px;width:600px;text-align:right;top:204.4px;font-size:13px;color:#d0d0d0;">0,4</div>
<div class="a" style="left:946.0px;top:249.1px;width:5.0px;height:1.0px;background:#c0c0c0;"></div>
<div class="t" style="left:345.5px;width:600px;text-align:right;top:242.9px;font-size:13px;color:#d0d0d0;">0,35</div>
<div class="a" style="left:946.0px;top:287.5px;width:5.0px;height:1.0px;background:#c0c0c0;"></div>
<div class="t" style="left:345.5px;width:600px;text-align:right;top:281.3px;font-size:13px;color:#d0d0d0;">0,3</div>
<div class="a" style="left:946.0px;top:325.9px;width:5.0px;height:1.0px;background:#c0c0c0;"></div>
<div class="t" style="left:345.5px;width:600px;text-align:right;top:319.7px;font-size:13px;color:#d0d0d0;">0,25</div>
<div class="a" style="left:946.0px;top:364.3px;width:5.0px;height:1.0px;background:#c0c0c0;"></div>
<div class="t" style="left:345.5px;width:600px;text-align:right;top:358.1px;font-size:13px;color:#d0d0d0;">0,2</div>
<div class="a" style="left:946.0px;top:402.7px;width:5.0px;height:1.0px;background:#c0c0c0;"></div>
<div class="t" style="left:345.5px;width:600px;text-align:right;top:396.5px;font-size:13px;color:#d0d0d0;">0,15</div>
<div class="a" style="left:946.0px;top:441.2px;width:5.0px;height:1.0px;background:#c0c0c0;"></div>
<div class="t" style="left:345.5px;width:600px;text-align:right;top:435.0px;font-size:13px;color:#d0d0d0;">0,1</div>
<div class="a" style="left:946.0px;top:479.6px;width:5.0px;height:1.0px;background:#c0c0c0;"></div>
<div class="t" style="left:345.5px;width:600px;text-align:right;top:473.4px;font-size:13px;color:#d0d0d0;">0,05</div>
<div class="a" style="left:946.0px;top:518.0px;width:5.0px;height:1.0px;background:#c0c0c0;"></div>
<div class="t" style="left:345.5px;width:600px;text-align:right;top:511.8px;font-size:13px;color:#d0d0d0;">0</div>
<div class="a" style="left:951.0px;top:518.0px;width:1.0px;height:5.0px;background:#c0c0c0;"></div>
<div class="t" style="left:651.5px;width:600px;text-align:center;top:526.0px;font-size:13px;color:#d0d0d0;">0</div>
<div class="a" style="left:1001.0px;top:518.0px;width:1.0px;height:5.0px;background:#c0c0c0;"></div>
<div class="t" style="left:701.5px;width:600px;text-align:center;top:526.0px;font-size:13px;color:#d0d0d0;">0,05</div>
<div class="a" style="left:1050.9px;top:518.0px;width:1.0px;height:5.0px;background:#c0c0c0;"></div>
<div class="t" style="left:751.4px;width:600px;text-align:center;top:526.0px;font-size:13px;color:#d0d0d0;">0,1</div>
<div class="a" style="left:1100.9px;top:518.0px;width:1.0px;height:5.0px;background:#c0c0c0;"></div>
<div class="t" style="left:801.4px;width:600px;text-align:center;top:526.0px;font-size:13px;color:#d0d0d0;">0,15</div>
<div class="a" style="left:1150.9px;top:518.0px;width:1.0px;height:5.0px;background:#c0c0c0;"></div>
<div class="t" style="left:851.4px;width:600px;text-align:center;top:526.0px;font-size:13px;color:#d0d0d0;">0,2</div>
<div class="a" style="left:1200.8px;top:518.0px;width:1.0px;height:5.0px;background:#c0c0c0;"></div>
<div class="t" style="left:901.3px;width:600px;text-align:center;top:526.0px;font-size:13px;color:#d0d0d0;">0,25</div>
<div class="a" style="left:1250.8px;top:518.0px;width:1.0px;height:5.0px;background:#c0c0c0;"></div>
<div class="t" style="left:951.3px;width:600px;text-align:center;top:526.0px;font-size:13px;color:#d0d0d0;">0,3</div>
<div class="a" style="left:1300.8px;top:518.0px;width:1.0px;height:5.0px;background:#c0c0c0;"></div>
<div class="t" style="left:1001.3px;width:600px;text-align:center;top:526.0px;font-size:13px;color:#d0d0d0;">0,35</div>
<div class="a" style="left:1350.7px;top:518.0px;width:1.0px;height:5.0px;background:#c0c0c0;"></div>
<div class="t" style="left:1051.2px;width:600px;text-align:center;top:526.0px;font-size:13px;color:#d0d0d0;">0,4</div>
<div class="a" style="left:1400.7px;top:518.0px;width:1.0px;height:5.0px;background:#c0c0c0;"></div>
<div class="t" style="left:1101.2px;width:600px;text-align:center;top:526.0px;font-size:13px;color:#d0d0d0;">0,45</div>
<div class="a" style="left:1450.7px;top:518.0px;width:1.0px;height:5.0px;background:#c0c0c0;"></div>
<div class="t" style="left:1151.2px;width:600px;text-align:center;top:526.0px;font-size:13px;color:#d0d0d0;">0,5</div>
<div class="a" style="left:1500.6px;top:518.0px;width:1.0px;height:5.0px;background:#c0c0c0;"></div>
<div class="t" style="left:1201.1px;width:600px;text-align:center;top:526.0px;font-size:13px;color:#d0d0d0;">0,55</div>
<div class="a" style="left:1067.4px;top:76.3px;width:15.0px;height:15.0px;border:1.6px solid #f4f4f4;"></div>
<div class="a" style="left:1090.5px;top:99.3px;width:15.0px;height:15.0px;border:1.6px solid #f4f4f4;"></div>
<div class="a" style="left:1127.4px;top:90.9px;width:15.0px;height:15.0px;border:1.6px solid #f4f4f4;"></div>
<div class="a" style="left:1147.5px;top:83.0px;width:15.0px;height:15.0px;border:1.6px solid #f4f4f4;"></div>
<div class="a" style="left:1172.2px;top:87.2px;width:15.0px;height:15.0px;border:1.6px solid #f4f4f4;"></div>
<div class="a" style="left:1124.8px;top:111.5px;width:15.0px;height:15.0px;border:1.6px solid #f4f4f4;"></div>
<div class="a" style="left:1096.7px;top:140.9px;width:15.0px;height:15.0px;border:1.6px solid #f4f4f4;"></div>
<div class="a" style="left:1082.1px;top:159.3px;width:15.0px;height:15.0px;border:1.6px solid #f4f4f4;"></div>
<div class="a" style="left:1087.1px;top:188.7px;width:15.0px;height:15.0px;border:1.6px solid #f4f4f4;"></div>
<div class="a" style="left:1119.0px;top:184.5px;width:15.0px;height:15.0px;border:1.6px solid #f4f4f4;"></div>
<div class="a" style="left:1137.8px;top:189.9px;width:15.0px;height:15.0px;border:1.6px solid #f4f4f4;"></div>
<div class="a" style="left:1171.0px;top:207.1px;width:15.0px;height:15.0px;border:1.6px solid #f4f4f4;"></div>
<div class="a" style="left:1230.1px;top:179.9px;width:15.0px;height:15.0px;border:1.6px solid #f4f4f4;"></div>
<div class="a" style="left:1260.3px;top:137.1px;width:15.0px;height:15.0px;border:1.6px solid #f4f4f4;"></div>
<div class="a" style="left:1318.2px;top:124.9px;width:15.0px;height:15.0px;border:1.6px solid #f4f4f4;"></div>
<div class="a" style="left:1393.3px;top:106.5px;width:15.0px;height:15.0px;border:1.6px solid #f4f4f4;"></div>
<div class="a" style="left:1121.5px;top:235.7px;width:15.0px;height:15.0px;border:1.6px solid #f4f4f4;"></div>
<div class="a" style="left:1121.5px;top:281.8px;width:15.0px;height:15.0px;border:1.6px solid #f4f4f4;"></div>
<div class="a" style="left:1248.2px;top:254.1px;width:15.0px;height:15.0px;border:1.6px solid #f4f4f4;"></div>
<div class="a" style="left:1242.3px;top:94.5px;width:15.0px;height:15.0px;border:1.6px solid #f4f4f4;"></div>
<div class="a" style="left:1242.3px;top:100.5px;width:15.0px;height:15.0px;border:1.6px solid #f4f4f4;"></div>
<div class="a" style="left:1202.5px;top:93.5px;width:15.0px;height:15.0px;border:1.6px solid #f4f4f4;"></div>
<div class="a" style="left:1119.0px;top:387.3px;width:15.0px;height:15.0px;border:1.6px solid #f4f4f4;"></div>
<div class="a" style="left:1224.7px;top:109.9px;width:15.0px;height:15.0px;border:1.6px solid #f4f4f4;"></div>
<div class="a" style="left:1220.1px;top:115.5px;width:15.0px;height:15.0px;border:1.6px solid #f4f4f4;"></div>
<div class="a" style="left:1207.9px;top:118.3px;width:15.0px;height:15.0px;border:1.6px solid #f4f4f4;"></div>
<div class="a" style="left:1213.5px;top:119.2px;width:15.0px;height:15.0px;border:1.6px solid #f4f4f4;"></div>
<div class="a" style="left:1200.5px;top:117.4px;width:15.0px;height:15.0px;border:1.6px solid #f4f4f4;"></div>
<div class="a" style="left:1191.1px;top:109.9px;width:15.0px;height:15.0px;border:1.6px solid #f4f4f4;"></div>
<div class="a" style="left:1176.1px;top:117.4px;width:15.0px;height:15.0px;border:1.6px solid #f4f4f4;"></div>
<div class="a" style="left:1178.0px;top:132.3px;width:15.0px;height:15.0px;border:1.6px solid #f4f4f4;"></div>
<div class="a" style="left:1188.3px;top:126.7px;width:15.0px;height:15.0px;border:1.6px solid #f4f4f4;"></div>
<div class="a" style="left:1204.5px;top:111.5px;width:15.0px;height:15.0px;border:1.6px solid #f4f4f4;"></div>
<div class="a" style="left:1216.5px;top:110.5px;width:15.0px;height:15.0px;border:1.6px solid #f4f4f4;"></div>
<div class="a" style="left:1140.4px;top:148.0px;width:15.0px;height:15.0px;border:2.5px solid #000;"></div>
<div class="a" style="left:1097.3px;top:82.3px;width:9.4px;height:9.4px;background:#30c030;border:1.4px solid #111;border-radius:50%;"></div>
<div class="a" style="left:1158.3px;top:88.7px;width:9.4px;height:9.4px;background:#e8d820;border:1.4px solid #111;border-radius:50%;"></div>
<div class="a" style="left:1176.3px;top:92.5px;width:9.4px;height:9.4px;background:#c0a830;border:1.4px solid #111;border-radius:50%;"></div>
<div class="a" style="left:1143.6px;top:97.5px;width:9.4px;height:9.4px;background:#80a060;border:1.4px solid #111;border-radius:50%;"></div>
<div class="a" style="left:1113.8px;top:105.9px;width:9.4px;height:9.4px;background:#508050;border:1.4px solid #111;border-radius:50%;"></div>
<div class="a" style="left:1139.4px;top:119.3px;width:9.4px;height:9.4px;background:#407040;border:1.4px solid #111;border-radius:50%;"></div>
<div class="a" style="left:1194.6px;top:99.6px;width:9.4px;height:9.4px;background:#d8a050;border:1.4px solid #111;border-radius:50%;"></div>
<div class="a" style="left:1322.3px;top:109.7px;width:9.4px;height:9.4px;background:#d02020;border:1.4px solid #111;border-radius:50%;"></div>
<div class="a" style="left:1269.3px;top:128.6px;width:9.4px;height:9.4px;background:#903030;border:1.4px solid #111;border-radius:50%;"></div>
<div class="a" style="left:1225.0px;top:142.4px;width:9.4px;height:9.4px;background:#a04848;border:1.4px solid #111;border-radius:50%;"></div>
<div class="a" style="left:1115.5px;top:150.3px;width:9.4px;height:9.4px;background:#70a090;border:1.4px solid #111;border-radius:50%;"></div>
<div class="a" style="left:1144.8px;top:158.3px;width:9.4px;height:9.4px;background:#f0f0f0;border:1.4px solid #111;border-radius:50%;"></div>
<div class="a" style="left:1144.8px;top:155.3px;width:9.4px;height:9.4px;background:#a0a0a0;border:1.4px solid #111;border-radius:50%;"></div>
<div class="a" style="left:1101.6px;top:169.3px;width:9.4px;height:9.4px;background:#30e0e0;border:1.4px solid #111;border-radius:50%;"></div>
<div class="a" style="left:1102.9px;top:192.3px;width:9.4px;height:9.4px;background:#208890;border:1.4px solid #111;border-radius:50%;"></div>
<div class="a" style="left:1125.6px;top:187.3px;width:9.4px;height:9.4px;background:#6080a0;border:1.4px solid #111;border-radius:50%;"></div>
<div class="a" style="left:1139.3px;top:189.8px;width:9.4px;height:9.4px;background:#909098;border:1.4px solid #111;border-radius:50%;"></div>
<div class="a" style="left:1144.8px;top:194.8px;width:9.4px;height:9.4px;background:#000000;border:1.4px solid #111;border-radius:50%;"></div>
<div class="a" style="left:1159.5px;top:206.2px;width:9.4px;height:9.4px;background:#604060;border:1.4px solid #111;border-radius:50%;"></div>
<div class="a" style="left:1198.5px;top:180.1px;width:9.4px;height:9.4px;background:#b05890;border:1.4px solid #111;border-radius:50%;"></div>
<div class="a" style="left:1199.3px;top:240.6px;width:9.4px;height:9.4px;background:#e020e0;border:1.4px solid #111;border-radius:50%;"></div>
<div class="a" style="left:1122.6px;top:228.3px;width:9.4px;height:9.4px;background:#5068a0;border:1.4px solid #111;border-radius:50%;"></div>
<div class="a" style="left:1117.2px;top:266.1px;width:9.4px;height:9.4px;background:#404890;border:1.4px solid #111;border-radius:50%;"></div>
<div class="a" style="left:1108.8px;top:337.7px;width:9.4px;height:9.4px;background:#2020d0;border:1.4px solid #111;border-radius:50%;"></div>
<div class="a" style="left:1221.9px;top:102.4px;width:9.4px;height:9.4px;background:#a06838;border:1.4px solid #111;border-radius:50%;"></div>
<div class="a" style="left:1223.8px;top:104.3px;width:9.4px;height:9.4px;background:#9a6030;border:1.4px solid #111;border-radius:50%;"></div>
<div class="a" style="left:1199.5px;top:111.3px;width:9.4px;height:9.4px;background:#9a6040;border:1.4px solid #111;border-radius:50%;"></div>
<div class="a" style="left:1208.9px;top:109.4px;width:9.4px;height:9.4px;background:#8a5838;border:1.4px solid #111;border-radius:50%;"></div>
<div class="a" style="left:1214.0px;top:114.6px;width:9.4px;height:9.4px;background:#8a5030;border:1.4px solid #111;border-radius:50%;"></div>
<div class="a" style="left:1186.9px;top:118.8px;width:9.4px;height:9.4px;background:#d09878;border:1.4px solid #111;border-radius:50%;"></div>
<div class="a" style="left:1195.8px;top:119.7px;width:9.4px;height:9.4px;background:#d89878;border:1.4px solid #111;border-radius:50%;"></div>
<div class="a" style="left:1201.3px;top:120.2px;width:9.4px;height:9.4px;background:#d09070;border:1.4px solid #111;border-radius:50%;"></div>
<div class="a" style="left:1184.6px;top:125.8px;width:9.4px;height:9.4px;background:#c89070;border:1.4px solid #111;border-radius:50%;"></div>
<div class="a" style="left:1180.8px;top:129.5px;width:9.4px;height:9.4px;background:#7a4a30;border:1.4px solid #111;border-radius:50%;"></div>
<div class="a" style="left:1191.1px;top:127.6px;width:9.4px;height:9.4px;background:#d09070;border:1.4px solid #111;border-radius:50%;"></div>
<div class="a" style="left:1199.0px;top:125.8px;width:9.4px;height:9.4px;background:#e0a080;border:1.4px solid #111;border-radius:50%;"></div>
<div class="a" style="left:1170.5px;top:130.4px;width:9.4px;height:9.4px;background:#f0c0a0;border:1.4px solid #111;border-radius:50%;"></div>
<div class="a" style="left:1173.3px;top:137.9px;width:9.4px;height:9.4px;background:#d8a888;border:1.4px solid #111;border-radius:50%;"></div>
<div class="a" style="left:1169.1px;top:138.9px;width:9.4px;height:9.4px;background:#f0c8a8;border:1.4px solid #111;border-radius:50%;"></div>
<div class="a" style="left:1357.5px;top:353.5px;width:189.0px;height:124.5px;border:1.5px solid #909090;background:linear-gradient(155deg,#ff9a30 0%,#ff7a28 35%,#ff5a30 70%,#ff3a20 100%);overflow:hidden;"></div>
<div class="a" style="left:1473.0px;top:381.0px;width:14.0px;height:14.0px;border:1.6px solid #f4f4f4;"></div>
<div class="a" style="left:1508.0px;top:381.0px;width:14.0px;height:14.0px;border:1.6px solid #f4f4f4;"></div>
<div class="a" style="left:1398.0px;top:395.0px;width:14.0px;height:14.0px;border:1.6px solid #f4f4f4;"></div>
<div class="a" style="left:1445.0px;top:409.0px;width:14.0px;height:14.0px;border:1.6px solid #f4f4f4;"></div>
<div class="a" style="left:1507.0px;top:408.0px;width:14.0px;height:14.0px;border:1.6px solid #f4f4f4;"></div>
<div class="a" style="left:1459.0px;top:418.0px;width:14.0px;height:14.0px;border:1.6px solid #f4f4f4;"></div>
<div class="a" style="left:1363.0px;top:425.0px;width:14.0px;height:14.0px;border:1.6px solid #f4f4f4;"></div>
<div class="a" style="left:1377.0px;top:421.0px;width:14.0px;height:14.0px;border:1.6px solid #f4f4f4;"></div>
<div class="a" style="left:1388.0px;top:425.0px;width:14.0px;height:14.0px;border:1.6px solid #f4f4f4;"></div>
<div class="a" style="left:1395.0px;top:433.0px;width:14.0px;height:14.0px;border:1.6px solid #f4f4f4;"></div>
<div class="a" style="left:1448.0px;top:435.0px;width:14.0px;height:14.0px;border:1.6px solid #f4f4f4;"></div>
<div class="a" style="left:1422.3px;top:382.3px;width:9.4px;height:9.4px;background:#8a5a3a;border:1.4px solid #111;border-radius:50%;"></div>
<div class="a" style="left:1462.3px;top:379.3px;width:9.4px;height:9.4px;background:#704830;border:1.4px solid #111;border-radius:50%;"></div>
<div class="a" style="left:1458.3px;top:404.3px;width:9.4px;height:9.4px;background:#603a28;border:1.4px solid #111;border-radius:50%;"></div>
<div class="a" style="left:1367.3px;top:417.3px;width:9.4px;height:9.4px;background:#c88058;border:1.4px solid #111;border-radius:50%;"></div>
<div class="a" style="left:1377.3px;top:423.3px;width:9.4px;height:9.4px;background:#b87050;border:1.4px solid #111;border-radius:50%;"></div>
<div class="a" style="left:1311.0px;top:487.0px;width:237.0px;height:26.0px;background:#333;"></div>
<div class="t" style="left:1312.0px;top:491.3px;font-size:18.5px;color:#f0f0f0;-webkit-text-stroke:0.3px #f0f0f0;">RGB Triplet: 217, 140, 94</div>
<div class="t" style="left:-147.0px;width:600px;text-align:center;top:557.8px;font-size:28px;color:#f2f2f2;-webkit-text-stroke:0.35px #f2f2f2;">Avg dE2000: 4,57</div>
<div class="t" style="left:-146.5px;width:600px;text-align:center;top:595.5px;font-size:28px;color:#f2f2f2;-webkit-text-stroke:0.35px #f2f2f2;">Max dE2000: 12,82</div>
<div class="t" style="left:10.0px;top:641.2px;font-size:27.5px;color:#f2f2f2;-webkit-text-stroke:0.3px #f2f2f2;">Current Reading</div>
<div class="t" style="left:10.0px;top:677.5px;font-size:23px;color:#f2f2f2;-webkit-text-stroke:0.3px #f2f2f2;">x: 0,4194</div>
<div class="t" style="left:157.0px;top:677.5px;font-size:23px;color:#f2f2f2;-webkit-text-stroke:0.3px #f2f2f2;">y: 0,3803</div>
<div class="t" style="left:10.0px;top:715.5px;font-size:23px;color:#f2f2f2;-webkit-text-stroke:0.3px #f2f2f2;">fL: 37,04</div>
<div class="t" style="left:10.0px;top:747.5px;font-size:23px;color:#f2f2f2;letter-spacing:0.7px;-webkit-text-stroke:0.3px #f2f2f2;">cd/m&sup2;: 126,89</div>
<div class="a" style="left:297.0px;top:563.0px;width:1270.0px;height:213.0px;background:#2a2a2a;border-left:2px solid #000;border-top:1px solid #1a1a1a;"></div>
<div class="a" style="left:299.0px;top:564.0px;width:1270.0px;height:24.0px;background:linear-gradient(#343434 0,#2e2e2e 50%,#161616 50%,#141414 100%);"></div>
<div class="a" style="left:299.0px;top:587.8px;width:1270.0px;height:22.2px;background:#424242;"></div>
<div class="t" style="left:312.5px;top:592.1px;font-size:14px;color:#f0f0f0;font-weight:bold;transform:scaleX(1.25);transform-origin:0 0;">x: CIE31</div>
<div class="t" style="left:454.2px;top:591.3px;font-size:15px;color:#f0f0f0;transform:scaleX(1.147);transform-origin:0 0;">0,3077</div>
<div class="t" style="left:536.3px;top:591.3px;font-size:15px;color:#f0f0f0;transform:scaleX(1.147);transform-origin:0 0;">0,3097</div>
<div class="t" style="left:619.2px;top:591.3px;font-size:15px;color:#f0f0f0;transform:scaleX(1.147);transform-origin:0 0;">0,3102</div>
<div class="t" style="left:701.7px;top:591.3px;font-size:15px;color:#f0f0f0;transform:scaleX(1.147);transform-origin:0 0;">0,3105</div>
<div class="t" style="left:784.7px;top:591.3px;font-size:15px;color:#f0f0f0;transform:scaleX(1.147);transform-origin:0 0;">0,3105</div>
<div class="t" style="left:866.8px;top:591.3px;font-size:15px;color:#f0f0f0;transform:scaleX(1.147);transform-origin:0 0;">0,2710</div>
<div class="t" style="left:939.7px;top:591.3px;font-size:15px;color:#f0f0f0;transform:scaleX(1.147);transform-origin:0 0;">0,3864</div>
<div class="t" style="left:1019.2px;top:591.3px;font-size:15px;color:#f0f0f0;transform:scaleX(1.147);transform-origin:0 0;">0,3630</div>
<div class="t" style="left:1101.6px;top:591.3px;font-size:15px;color:#f0f0f0;transform:scaleX(1.147);transform-origin:0 0;">0,2554</div>
<div class="t" style="left:1173.7px;top:591.3px;font-size:15px;color:#f0f0f0;transform:scaleX(1.147);transform-origin:0 0;">0,3480</div>
<div class="t" style="left:1246.6px;top:591.3px;font-size:15px;color:#f0f0f0;transform:scaleX(1.147);transform-origin:0 0;">0,2686</div>
<div class="t" style="left:1343.4px;top:591.3px;font-size:15px;color:#f0f0f0;transform:scaleX(1.147);transform-origin:0 0;">0,2768</div>
<div class="t" style="left:1447.9px;top:591.3px;font-size:15px;color:#f0f0f0;transform:scaleX(1.147);transform-origin:0 0;">0,4814</div>
<div class="t" style="left:1530.7px;top:591.3px;font-size:15px;color:#f0f0f0;transform:scaleX(1.147);transform-origin:0 0;">0,2238</div>
<div class="a" style="left:299.0px;top:610.0px;width:1270.0px;height:21.8px;background:linear-gradient(90deg,#7a7a7a,#868686 30%,#868686);"></div>
<div class="t" style="left:312.5px;top:614.3px;font-size:14px;color:#f0f0f0;font-weight:bold;transform:scaleX(1.25);transform-origin:0 0;">y: CIE31</div>
<div class="t" style="left:454.2px;top:613.5px;font-size:15px;color:#f0f0f0;transform:scaleX(1.147);transform-origin:0 0;">0,3162</div>
<div class="t" style="left:536.3px;top:613.5px;font-size:15px;color:#f0f0f0;transform:scaleX(1.147);transform-origin:0 0;">0,3191</div>
<div class="t" style="left:619.2px;top:613.5px;font-size:15px;color:#f0f0f0;transform:scaleX(1.147);transform-origin:0 0;">0,3199</div>
<div class="t" style="left:701.7px;top:613.5px;font-size:15px;color:#f0f0f0;transform:scaleX(1.147);transform-origin:0 0;">0,3202</div>
<div class="t" style="left:784.7px;top:613.5px;font-size:15px;color:#f0f0f0;transform:scaleX(1.147);transform-origin:0 0;">0,3203</div>
<div class="t" style="left:866.8px;top:613.5px;font-size:15px;color:#f0f0f0;transform:scaleX(1.147);transform-origin:0 0;">0,2497</div>
<div class="t" style="left:939.7px;top:613.5px;font-size:15px;color:#f0f0f0;transform:scaleX(1.147);transform-origin:0 0;">0,3603</div>
<div class="t" style="left:1019.2px;top:613.5px;font-size:15px;color:#f0f0f0;transform:scaleX(1.147);transform-origin:0 0;">0,3484</div>
<div class="t" style="left:1101.6px;top:613.5px;font-size:15px;color:#f0f0f0;transform:scaleX(1.147);transform-origin:0 0;">0,2654</div>
<div class="t" style="left:1173.7px;top:613.5px;font-size:15px;color:#f0f0f0;transform:scaleX(1.147);transform-origin:0 0;">0,4080</div>
<div class="t" style="left:1246.6px;top:613.5px;font-size:15px;color:#f0f0f0;transform:scaleX(1.147);transform-origin:0 0;">0,2580</div>
<div class="t" style="left:1343.4px;top:613.5px;font-size:15px;color:#f0f0f0;transform:scaleX(1.147);transform-origin:0 0;">0,3405</div>
<div class="t" style="left:1447.9px;top:613.5px;font-size:15px;color:#f0f0f0;transform:scaleX(1.147);transform-origin:0 0;">0,4135</div>
<div class="t" style="left:1530.7px;top:613.5px;font-size:15px;color:#f0f0f0;transform:scaleX(1.147);transform-origin:0 0;">0,2012</div>
<div class="a" style="left:299.0px;top:631.8px;width:1270.0px;height:21.7px;background:#424242;"></div>
<div class="t" style="left:312.5px;top:636.1px;font-size:14px;color:#f0f0f0;font-weight:bold;transform:scaleX(1.25);transform-origin:0 0;">Y</div>
<div class="t" style="left:454.2px;top:635.3px;font-size:15px;color:#f0f0f0;transform:scaleX(1.147);transform-origin:0 0;">344,2332</div>
<div class="t" style="left:536.3px;top:635.3px;font-size:15px;color:#f0f0f0;transform:scaleX(1.147);transform-origin:0 0;">285,0612</div>
<div class="t" style="left:619.2px;top:635.3px;font-size:15px;color:#f0f0f0;transform:scaleX(1.147);transform-origin:0 0;">232,9398</div>
<div class="t" style="left:701.7px;top:635.3px;font-size:15px;color:#f0f0f0;transform:scaleX(1.147);transform-origin:0 0;">182,5867</div>
<div class="t" style="left:784.7px;top:635.3px;font-size:15px;color:#f0f0f0;transform:scaleX(1.147);transform-origin:0 0;">129,1399</div>
<div class="t" style="left:866.8px;top:635.3px;font-size:15px;color:#f0f0f0;transform:scaleX(1.147);transform-origin:0 0;">0,2397</div>
<div class="t" style="left:939.7px;top:635.3px;font-size:15px;color:#f0f0f0;transform:scaleX(1.147);transform-origin:0 0;">37,7220</div>
<div class="t" style="left:1019.2px;top:635.3px;font-size:15px;color:#f0f0f0;transform:scaleX(1.147);transform-origin:0 0;">130,8700</div>
<div class="t" style="left:1101.6px;top:635.3px;font-size:15px;color:#f0f0f0;transform:scaleX(1.147);transform-origin:0 0;">74,2571</div>
<div class="t" style="left:1173.7px;top:635.3px;font-size:15px;color:#f0f0f0;transform:scaleX(1.147);transform-origin:0 0;">46,5911</div>
<div class="t" style="left:1246.6px;top:635.3px;font-size:15px;color:#f0f0f0;transform:scaleX(1.147);transform-origin:0 0;">94,5319</div>
<div class="t" style="left:1343.4px;top:635.3px;font-size:15px;color:#f0f0f0;transform:scaleX(1.147);transform-origin:0 0;">149,8248</div>
<div class="t" style="left:1447.9px;top:635.3px;font-size:15px;color:#f0f0f0;transform:scaleX(1.147);transform-origin:0 0;">103,6920</div>
<div class="t" style="left:1530.7px;top:635.3px;font-size:15px;color:#f0f0f0;transform:scaleX(1.147);transform-origin:0 0;">50,2140</div>
<div class="a" style="left:299.0px;top:653.5px;width:1270.0px;height:21.8px;background:linear-gradient(90deg,#7a7a7a,#868686 30%,#868686);"></div>
<div class="t" style="left:312.5px;top:657.8px;font-size:14px;color:#f0f0f0;font-weight:bold;transform:scaleX(1.25);transform-origin:0 0;">Target x:CIE31</div>
<div class="t" style="left:454.2px;top:657.0px;font-size:15px;color:#f0f0f0;transform:scaleX(1.147);transform-origin:0 0;">0,3127</div>
<div class="t" style="left:536.3px;top:657.0px;font-size:15px;color:#f0f0f0;transform:scaleX(1.147);transform-origin:0 0;">0,3127</div>
<div class="t" style="left:619.2px;top:657.0px;font-size:15px;color:#f0f0f0;transform:scaleX(1.147);transform-origin:0 0;">0,3127</div>
<div class="t" style="left:701.7px;top:657.0px;font-size:15px;color:#f0f0f0;transform:scaleX(1.147);transform-origin:0 0;">0,3127</div>
<div class="t" style="left:784.7px;top:657.0px;font-size:15px;color:#f0f0f0;transform:scaleX(1.147);transform-origin:0 0;">0,3127</div>
<div class="t" style="left:866.8px;top:657.0px;font-size:15px;color:#f0f0f0;transform:scaleX(1.147);transform-origin:0 0;">0,3127</div>
<div class="t" style="left:939.7px;top:657.0px;font-size:15px;color:#f0f0f0;transform:scaleX(1.147);transform-origin:0 0;">0,4003</div>
<div class="t" style="left:1019.2px;top:657.0px;font-size:15px;color:#f0f0f0;transform:scaleX(1.147);transform-origin:0 0;">0,3795</div>
<div class="t" style="left:1101.6px;top:657.0px;font-size:15px;color:#f0f0f0;transform:scaleX(1.147);transform-origin:0 0;">0,2496</div>
<div class="t" style="left:1173.7px;top:657.0px;font-size:15px;color:#f0f0f0;transform:scaleX(1.147);transform-origin:0 0;">0,3395</div>
<div class="t" style="left:1246.6px;top:657.0px;font-size:15px;color:#f0f0f0;transform:scaleX(1.147);transform-origin:0 0;">0,2681</div>
<div class="t" style="left:1343.4px;top:657.0px;font-size:15px;color:#f0f0f0;transform:scaleX(1.147);transform-origin:0 0;">0,2626</div>
<div class="t" style="left:1447.9px;top:657.0px;font-size:15px;color:#f0f0f0;transform:scaleX(1.147);transform-origin:0 0;">0,5122</div>
<div class="t" style="left:1530.7px;top:657.0px;font-size:15px;color:#f0f0f0;transform:scaleX(1.147);transform-origin:0 0;">0,2110</div>
<div class="a" style="left:299.0px;top:675.3px;width:1270.0px;height:21.7px;background:#424242;"></div>
<div class="t" style="left:312.5px;top:679.6px;font-size:14px;color:#f0f0f0;font-weight:bold;transform:scaleX(1.25);transform-origin:0 0;">Target y:CIE31</div>
<div class="t" style="left:454.2px;top:678.8px;font-size:15px;color:#f0f0f0;transform:scaleX(1.147);transform-origin:0 0;">0,3290</div>
<div class="t" style="left:536.3px;top:678.8px;font-size:15px;color:#f0f0f0;transform:scaleX(1.147);transform-origin:0 0;">0,3290</div>
<div class="t" style="left:619.2px;top:678.8px;font-size:15px;color:#f0f0f0;transform:scaleX(1.147);transform-origin:0 0;">0,3290</div>
<div class="t" style="left:701.7px;top:678.8px;font-size:15px;color:#f0f0f0;transform:scaleX(1.147);transform-origin:0 0;">0,3290</div>
<div class="t" style="left:784.7px;top:678.8px;font-size:15px;color:#f0f0f0;transform:scaleX(1.147);transform-origin:0 0;">0,3290</div>
<div class="t" style="left:866.8px;top:678.8px;font-size:15px;color:#f0f0f0;transform:scaleX(1.147);transform-origin:0 0;">0,3290</div>
<div class="t" style="left:939.7px;top:678.8px;font-size:15px;color:#f0f0f0;transform:scaleX(1.147);transform-origin:0 0;">0,3642</div>
<div class="t" style="left:1019.2px;top:678.8px;font-size:15px;color:#f0f0f0;transform:scaleX(1.147);transform-origin:0 0;">0,3562</div>
<div class="t" style="left:1101.6px;top:678.8px;font-size:15px;color:#f0f0f0;transform:scaleX(1.147);transform-origin:0 0;">0,2656</div>
<div class="t" style="left:1173.7px;top:678.8px;font-size:15px;color:#f0f0f0;transform:scaleX(1.147);transform-origin:0 0;">0,4271</div>
<div class="t" style="left:1246.6px;top:678.8px;font-size:15px;color:#f0f0f0;transform:scaleX(1.147);transform-origin:0 0;">0,2525</div>
<div class="t" style="left:1343.4px;top:678.8px;font-size:15px;color:#f0f0f0;transform:scaleX(1.147);transform-origin:0 0;">0,3616</div>
<div class="t" style="left:1447.9px;top:678.8px;font-size:15px;color:#f0f0f0;transform:scaleX(1.147);transform-origin:0 0;">0,4063</div>
<div class="t" style="left:1530.7px;top:678.8px;font-size:15px;color:#f0f0f0;transform:scaleX(1.147);transform-origin:0 0;">0,1900</div>
<div class="a" style="left:299.0px;top:697.0px;width:1270.0px;height:21.6px;background:linear-gradient(90deg,#7a7a7a,#868686 30%,#868686);"></div>
<div class="t" style="left:312.5px;top:701.3px;font-size:14px;color:#f0f0f0;font-weight:bold;transform:scaleX(1.25);transform-origin:0 0;">Target Y</div>
<div class="t" style="left:454.2px;top:700.5px;font-size:15px;color:#f0f0f0;transform:scaleX(1.147);transform-origin:0 0;">344,2332</div>
<div class="t" style="left:536.3px;top:700.5px;font-size:15px;color:#f0f0f0;transform:scaleX(1.147);transform-origin:0 0;">272,3910</div>
<div class="t" style="left:619.2px;top:700.5px;font-size:15px;color:#f0f0f0;transform:scaleX(1.147);transform-origin:0 0;">219,4820</div>
<div class="t" style="left:701.7px;top:700.5px;font-size:15px;color:#f0f0f0;transform:scaleX(1.147);transform-origin:0 0;">169,0257</div>
<div class="t" style="left:784.7px;top:700.5px;font-size:15px;color:#f0f0f0;transform:scaleX(1.147);transform-origin:0 0;">117,6983</div>
<div class="t" style="left:866.8px;top:700.5px;font-size:15px;color:#f0f0f0;transform:scaleX(1.147);transform-origin:0 0;">0,0000</div>
<div class="t" style="left:939.7px;top:700.5px;font-size:15px;color:#f0f0f0;transform:scaleX(1.147);transform-origin:0 0;">34,6756</div>
<div class="t" style="left:1019.2px;top:700.5px;font-size:15px;color:#f0f0f0;transform:scaleX(1.147);transform-origin:0 0;">120,1207</div>
<div class="t" style="left:1101.6px;top:700.5px;font-size:15px;color:#f0f0f0;transform:scaleX(1.147);transform-origin:0 0;">64,3661</div>
<div class="t" style="left:1173.7px;top:700.5px;font-size:15px;color:#f0f0f0;transform:scaleX(1.147);transform-origin:0 0;">44,8620</div>
<div class="t" style="left:1246.6px;top:700.5px;font-size:15px;color:#f0f0f0;transform:scaleX(1.147);transform-origin:0 0;">80,2700</div>
<div class="t" style="left:1343.4px;top:700.5px;font-size:15px;color:#f0f0f0;transform:scaleX(1.147);transform-origin:0 0;">144,1408</div>
<div class="t" style="left:1447.9px;top:700.5px;font-size:15px;color:#f0f0f0;transform:scaleX(1.147);transform-origin:0 0;">97,5826</div>
<div class="t" style="left:1530.7px;top:700.5px;font-size:15px;color:#f0f0f0;transform:scaleX(1.147);transform-origin:0 0;">40,4010</div>
<div class="a" style="left:299.0px;top:718.6px;width:1270.0px;height:22.2px;background:#424242;"></div>
<div class="t" style="left:312.5px;top:722.9px;font-size:14px;color:#f0f0f0;font-weight:bold;transform:scaleX(1.25);transform-origin:0 0;">&Delta;E 2000</div>
<div class="t" style="left:454.2px;top:722.1px;font-size:15px;color:#f0f0f0;transform:scaleX(1.147);transform-origin:0 0;">7,0549</div>
<div class="t" style="left:536.3px;top:722.1px;font-size:15px;color:#f0f0f0;transform:scaleX(1.147);transform-origin:0 0;">5,7229</div>
<div class="t" style="left:619.2px;top:722.1px;font-size:15px;color:#f0f0f0;transform:scaleX(1.147);transform-origin:0 0;">5,2215</div>
<div class="t" style="left:701.7px;top:722.1px;font-size:15px;color:#f0f0f0;transform:scaleX(1.147);transform-origin:0 0;">4,9000</div>
<div class="t" style="left:784.7px;top:722.1px;font-size:15px;color:#f0f0f0;transform:scaleX(1.147);transform-origin:0 0;">4,6171</div>
<div class="t" style="left:866.8px;top:722.1px;font-size:15px;color:#f0f0f0;transform:scaleX(1.147);transform-origin:0 0;">1,0496</div>
<div class="t" style="left:939.7px;top:722.1px;font-size:15px;color:#f0f0f0;transform:scaleX(1.147);transform-origin:0 0;">2,0560</div>
<div class="t" style="left:1019.2px;top:722.1px;font-size:15px;color:#f0f0f0;transform:scaleX(1.147);transform-origin:0 0;">3,3525</div>
<div class="t" style="left:1101.6px;top:722.1px;font-size:15px;color:#f0f0f0;transform:scaleX(1.147);transform-origin:0 0;">3,8940</div>
<div class="t" style="left:1173.7px;top:722.1px;font-size:15px;color:#f0f0f0;transform:scaleX(1.147);transform-origin:0 0;">4,0057</div>
<div class="t" style="left:1246.6px;top:722.1px;font-size:15px;color:#f0f0f0;transform:scaleX(1.147);transform-origin:0 0;">3,8129</div>
<div class="t" style="left:1343.4px;top:722.1px;font-size:15px;color:#f0f0f0;transform:scaleX(1.147);transform-origin:0 0;">6,9230</div>
<div class="t" style="left:1447.9px;top:722.1px;font-size:15px;color:#f0f0f0;transform:scaleX(1.147);transform-origin:0 0;">4,5194</div>
<div class="t" style="left:1530.7px;top:722.1px;font-size:15px;color:#f0f0f0;transform:scaleX(1.147);transform-origin:0 0;">4,1610</div>
<div class="a" style="left:299.0px;top:740.8px;width:1270.0px;height:21.2px;background:linear-gradient(90deg,#7a7a7a,#868686 30%,#868686);"></div>
<div class="t" style="left:312.5px;top:745.1px;font-size:14px;color:#f0f0f0;font-weight:bold;transform:scaleX(1.25);transform-origin:0 0;">&Delta;E ITP</div>
<div class="t" style="left:454.2px;top:744.3px;font-size:15px;color:#f0f0f0;transform:scaleX(1.147);transform-origin:0 0;">5,2434</div>
<div class="t" style="left:536.3px;top:744.3px;font-size:15px;color:#f0f0f0;transform:scaleX(1.147);transform-origin:0 0;">5,4892</div>
<div class="t" style="left:619.2px;top:744.3px;font-size:15px;color:#f0f0f0;transform:scaleX(1.147);transform-origin:0 0;">6,0254</div>
<div class="t" style="left:701.7px;top:744.3px;font-size:15px;color:#f0f0f0;transform:scaleX(1.147);transform-origin:0 0;">6,9708</div>
<div class="t" style="left:784.7px;top:744.3px;font-size:15px;color:#f0f0f0;transform:scaleX(1.147);transform-origin:0 0;">7,8296</div>
<div class="t" style="left:866.8px;top:744.3px;font-size:15px;color:#f0f0f0;transform:scaleX(1.147);transform-origin:0 0;">65,8032</div>
<div class="t" style="left:939.7px;top:744.3px;font-size:15px;color:#f0f0f0;transform:scaleX(1.147);transform-origin:0 0;">8,6191</div>
<div class="t" style="left:1019.2px;top:744.3px;font-size:15px;color:#f0f0f0;transform:scaleX(1.147);transform-origin:0 0;">10,8525</div>
<div class="t" style="left:1101.6px;top:744.3px;font-size:15px;color:#f0f0f0;transform:scaleX(1.147);transform-origin:0 0;">11,0517</div>
<div class="t" style="left:1173.7px;top:744.3px;font-size:15px;color:#f0f0f0;transform:scaleX(1.147);transform-origin:0 0;">9,8854</div>
<div class="t" style="left:1246.6px;top:744.3px;font-size:15px;color:#f0f0f0;transform:scaleX(1.147);transform-origin:0 0;">11,7416</div>
<div class="t" style="left:1343.4px;top:744.3px;font-size:15px;color:#f0f0f0;transform:scaleX(1.147);transform-origin:0 0;">14,7035</div>
<div class="t" style="left:1447.9px;top:744.3px;font-size:15px;color:#f0f0f0;transform:scaleX(1.147);transform-origin:0 0;">19,9202</div>
<div class="t" style="left:1530.7px;top:744.3px;font-size:15px;color:#f0f0f0;transform:scaleX(1.147);transform-origin:0 0;">14,8010</div>
<div class="t" style="left:468.6px;top:570.0px;font-size:13px;color:#f0f0f0;font-weight:bold;transform:scaleX(1.17);transform-origin:0 0;">White</div>
<div class="t" style="left:544.5px;top:570.0px;font-size:13px;color:#f0f0f0;font-weight:bold;transform:scaleX(1.17);transform-origin:0 0;">Gray 80</div>
<div class="t" style="left:627.5px;top:570.0px;font-size:13px;color:#f0f0f0;font-weight:bold;transform:scaleX(1.17);transform-origin:0 0;">Gray 65</div>
<div class="t" style="left:710.0px;top:570.0px;font-size:13px;color:#f0f0f0;font-weight:bold;transform:scaleX(1.17);transform-origin:0 0;">Gray 50</div>
<div class="t" style="left:792.9px;top:570.0px;font-size:13px;color:#f0f0f0;font-weight:bold;transform:scaleX(1.17);transform-origin:0 0;">Gray 35</div>
<div class="t" style="left:880.0px;top:570.0px;font-size:13px;color:#f0f0f0;font-weight:bold;transform:scaleX(1.17);transform-origin:0 0;">Black</div>
<div class="t" style="left:939.7px;top:570.0px;font-size:13px;color:#f0f0f0;font-weight:bold;transform:scaleX(1.17);transform-origin:0 0;">Dark Skin</div>
<div class="t" style="left:1020.0px;top:570.0px;font-size:13px;color:#f0f0f0;font-weight:bold;transform:scaleX(1.17);transform-origin:0 0;">Light Skin</div>
<div class="t" style="left:1101.6px;top:570.0px;font-size:13px;color:#f0f0f0;font-weight:bold;transform:scaleX(1.17);transform-origin:0 0;">Blue Sky</div>
<div class="t" style="left:1179.4px;top:570.0px;font-size:13px;color:#f0f0f0;font-weight:bold;transform:scaleX(1.17);transform-origin:0 0;">Foliage</div>
<div class="t" style="left:1246.6px;top:570.0px;font-size:13px;color:#f0f0f0;font-weight:bold;transform:scaleX(1.17);transform-origin:0 0;">Blue Flower</div>
<div class="t" style="left:1343.8px;top:570.0px;font-size:13px;color:#f0f0f0;font-weight:bold;transform:scaleX(1.17);transform-origin:0 0;">Bluish Green</div>
<div class="t" style="left:1457.7px;top:570.0px;font-size:13px;color:#f0f0f0;font-weight:bold;transform:scaleX(1.17);transform-origin:0 0;">Orange</div>
<div class="t" style="left:1530.0px;top:570.0px;font-size:13px;color:#f0f0f0;font-weight:bold;transform:scaleX(1.17);transform-origin:0 0;">Purplish Blue</div>
<div class="a" style="left:299.0px;top:762.0px;width:1270.0px;height:13.7px;background:#5c5c5c;"></div>
<div class="a" style="left:300.0px;top:763.5px;width:15.0px;height:11.0px;background:#888;border-radius:2px;"></div>
<svg class="a" style="left:303px;top:764px" width="9" height="10"><path d="M7 1V9L2 5Z" fill="#444"/></svg>
<div class="a" style="left:319.0px;top:764.0px;width:370.0px;height:10.0px;background:#464646;border-radius:5px;"></div>
<div class="a" style="left:1543.0px;top:763.5px;width:15.0px;height:11.0px;background:#888;border-radius:2px;"></div>
<svg class="a" style="left:1546px;top:764px" width="9" height="10"><path d="M2 1V9L7 5Z" fill="#444"/></svg>
<div class="a" style="left:-8.0px;top:800.0px;width:50.0px;height:49.0px;background:linear-gradient(#b8b8b8 0%,#a0a0a0 30%,#727272 100%);border-radius:5px 5px 0 0;"></div>
<div class="a" style="left:-3.5px;top:805.0px;width:40.0px;height:24.0px;background:#0a88a8;border-radius:4px;box-shadow:inset 0 0 2px rgba(0,0,0,0.45);"></div>
<div class="t" style="left:-283.0px;width:600px;text-align:center;top:834.6px;font-size:10.5px;color:#1e1e1e;">Cyan</div>
<div class="a" style="left:44.0px;top:800.0px;width:50.0px;height:49.0px;background:linear-gradient(#b8b8b8 0%,#a0a0a0 30%,#727272 100%);border-radius:5px 5px 0 0;"></div>
<div class="a" style="left:48.5px;top:805.0px;width:40.0px;height:24.0px;background:#ff0000;border-radius:4px;box-shadow:inset 0 0 2px rgba(0,0,0,0.45);"></div>
<div class="t" style="left:-231.0px;width:600px;text-align:center;top:834.6px;font-size:10.5px;color:#1e1e1e;">100% Red</div>
<div class="a" style="left:96.0px;top:800.0px;width:50.0px;height:49.0px;background:linear-gradient(#b8b8b8 0%,#a0a0a0 30%,#727272 100%);border-radius:5px 5px 0 0;"></div>
<div class="a" style="left:100.5px;top:805.0px;width:40.0px;height:12.5px;background:#00ff00;border-radius:4px;box-shadow:inset 0 0 2px rgba(0,0,0,0.45);"></div>
<div class="t" style="left:-179.0px;width:600px;text-align:center;top:822.6px;font-size:10.5px;color:#1e1e1e;">100%</div>
<div class="t" style="left:-179.0px;width:600px;text-align:center;top:834.6px;font-size:10.5px;color:#1e1e1e;">Green</div>
<div class="a" style="left:148.0px;top:800.0px;width:50.0px;height:49.0px;background:linear-gradient(#b8b8b8 0%,#a0a0a0 30%,#727272 100%);border-radius:5px 5px 0 0;"></div>
<div class="a" style="left:152.5px;top:805.0px;width:40.0px;height:12.5px;background:#0000e8;border-radius:4px;box-shadow:inset 0 0 2px rgba(0,0,0,0.45);"></div>
<div class="t" style="left:-127.0px;width:600px;text-align:center;top:822.6px;font-size:10.5px;color:#1e1e1e;">100%</div>
<div class="t" style="left:-127.0px;width:600px;text-align:center;top:834.6px;font-size:10.5px;color:#1e1e1e;">Blue</div>
<div class="a" style="left:200.0px;top:800.0px;width:50.0px;height:49.0px;background:linear-gradient(#b8b8b8 0%,#a0a0a0 30%,#727272 100%);border-radius:5px 5px 0 0;"></div>
<div class="a" style="left:204.5px;top:805.0px;width:40.0px;height:12.5px;background:#00ffff;border-radius:4px;box-shadow:inset 0 0 2px rgba(0,0,0,0.45);"></div>
<div class="t" style="left:-75.0px;width:600px;text-align:center;top:822.6px;font-size:10.5px;color:#1e1e1e;">100%</div>
<div class="t" style="left:-75.0px;width:600px;text-align:center;top:834.6px;font-size:10.5px;color:#1e1e1e;">Cyan</div>
<div class="a" style="left:252.0px;top:800.0px;width:50.0px;height:49.0px;background:linear-gradient(#b8b8b8 0%,#a0a0a0 30%,#727272 100%);border-radius:5px 5px 0 0;"></div>
<div class="a" style="left:256.5px;top:805.0px;width:40.0px;height:12.5px;background:#ff00ff;border-radius:4px;box-shadow:inset 0 0 2px rgba(0,0,0,0.45);"></div>
<div class="t" style="left:-23.0px;width:600px;text-align:center;top:822.6px;font-size:10.5px;color:#1e1e1e;">100%</div>
<div class="t" style="left:-23.0px;width:600px;text-align:center;top:834.6px;font-size:10.5px;color:#1e1e1e;">Magenta</div>
<div class="a" style="left:304.0px;top:800.0px;width:50.0px;height:49.0px;background:linear-gradient(#b8b8b8 0%,#a0a0a0 30%,#727272 100%);border-radius:5px 5px 0 0;"></div>
<div class="a" style="left:308.5px;top:805.0px;width:40.0px;height:12.5px;background:#ffff00;border-radius:4px;box-shadow:inset 0 0 2px rgba(0,0,0,0.45);"></div>
<div class="t" style="left:29.0px;width:600px;text-align:center;top:822.6px;font-size:10.5px;color:#1e1e1e;">100%</div>
<div class="t" style="left:29.0px;width:600px;text-align:center;top:834.6px;font-size:10.5px;color:#1e1e1e;">Yellow</div>
<div class="a" style="left:356.0px;top:800.0px;width:50.0px;height:49.0px;background:linear-gradient(#b8b8b8 0%,#a0a0a0 30%,#727272 100%);border-radius:5px 5px 0 0;"></div>
<div class="a" style="left:360.5px;top:805.0px;width:40.0px;height:24.0px;background:#744028;border-radius:4px;box-shadow:inset 0 0 2px rgba(0,0,0,0.45);"></div>
<div class="t" style="left:81.0px;width:600px;text-align:center;top:834.6px;font-size:10.5px;color:#1e1e1e;">2E</div>
<div class="a" style="left:408.0px;top:800.0px;width:50.0px;height:49.0px;background:linear-gradient(#b8b8b8 0%,#a0a0a0 30%,#727272 100%);border-radius:5px 5px 0 0;"></div>
<div class="a" style="left:412.5px;top:805.0px;width:40.0px;height:24.0px;background:#c88a68;border-radius:4px;box-shadow:inset 0 0 2px rgba(0,0,0,0.45);"></div>
<div class="t" style="left:133.0px;width:600px;text-align:center;top:834.6px;font-size:10.5px;color:#1e1e1e;">2F</div>
<div class="a" style="left:460.0px;top:800.0px;width:50.0px;height:49.0px;background:linear-gradient(#b8b8b8 0%,#a0a0a0 30%,#727272 100%);border-radius:5px 5px 0 0;"></div>
<div class="a" style="left:464.5px;top:805.0px;width:40.0px;height:24.0px;background:#fcc090;border-radius:4px;box-shadow:inset 0 0 2px rgba(0,0,0,0.45);"></div>
<div class="t" style="left:185.0px;width:600px;text-align:center;top:834.6px;font-size:10.5px;color:#1e1e1e;">2K</div>
<div class="a" style="left:512.0px;top:800.0px;width:50.0px;height:49.0px;background:linear-gradient(#b8b8b8 0%,#a0a0a0 30%,#727272 100%);border-radius:5px 5px 0 0;"></div>
<div class="a" style="left:516.5px;top:805.0px;width:40.0px;height:24.0px;background:#fcc4a4;border-radius:4px;box-shadow:inset 0 0 2px rgba(0,0,0,0.45);"></div>
<div class="t" style="left:237.0px;width:600px;text-align:center;top:834.6px;font-size:10.5px;color:#1e1e1e;">5D</div>
<div class="a" style="left:564.0px;top:800.0px;width:50.0px;height:49.0px;background:linear-gradient(#b8b8b8 0%,#a0a0a0 30%,#727272 100%);border-radius:5px 5px 0 0;"></div>
<div class="a" style="left:568.5px;top:805.0px;width:40.0px;height:24.0px;background:#f4a474;border-radius:4px;box-shadow:inset 0 0 2px rgba(0,0,0,0.45);"></div>
<div class="t" style="left:289.0px;width:600px;text-align:center;top:834.6px;font-size:10.5px;color:#1e1e1e;">7E</div>
<div class="a" style="left:616.0px;top:800.0px;width:50.0px;height:49.0px;background:linear-gradient(#b8b8b8 0%,#a0a0a0 30%,#727272 100%);border-radius:5px 5px 0 0;"></div>
<div class="a" style="left:620.5px;top:805.0px;width:40.0px;height:24.0px;background:#c88c5c;border-radius:4px;box-shadow:inset 0 0 2px rgba(0,0,0,0.45);"></div>
<div class="t" style="left:341.0px;width:600px;text-align:center;top:834.6px;font-size:10.5px;color:#1e1e1e;">7F</div>
<div class="a" style="left:668.0px;top:800.0px;width:50.0px;height:49.0px;background:linear-gradient(#b8b8b8 0%,#a0a0a0 30%,#727272 100%);border-radius:5px 5px 0 0;"></div>
<div class="a" style="left:672.5px;top:805.0px;width:40.0px;height:24.0px;background:#935a30;border-radius:4px;box-shadow:inset 0 0 2px rgba(0,0,0,0.45);"></div>
<div class="t" style="left:393.0px;width:600px;text-align:center;top:834.6px;font-size:10.5px;color:#1e1e1e;">7G</div>
<div class="a" style="left:720.0px;top:800.0px;width:50.0px;height:49.0px;background:linear-gradient(#b8b8b8 0%,#a0a0a0 30%,#727272 100%);border-radius:5px 5px 0 0;"></div>
<div class="a" style="left:724.5px;top:805.0px;width:40.0px;height:24.0px;background:#d49a74;border-radius:4px;box-shadow:inset 0 0 2px rgba(0,0,0,0.45);"></div>
<div class="t" style="left:445.0px;width:600px;text-align:center;top:834.6px;font-size:10.5px;color:#1e1e1e;">7H</div>
<div class="a" style="left:772.0px;top:800.0px;width:50.0px;height:49.0px;background:linear-gradient(#b8b8b8 0%,#a0a0a0 30%,#727272 100%);border-radius:5px 5px 0 0;"></div>
<div class="a" style="left:776.5px;top:805.0px;width:40.0px;height:24.0px;background:#a55a24;border-radius:4px;box-shadow:inset 0 0 2px rgba(0,0,0,0.45);"></div>
<div class="t" style="left:497.0px;width:600px;text-align:center;top:834.6px;font-size:10.5px;color:#1e1e1e;">7I</div>
<div class="a" style="left:824.0px;top:800.0px;width:50.0px;height:49.0px;background:linear-gradient(#b8b8b8 0%,#a0a0a0 30%,#727272 100%);border-radius:5px 5px 0 0;"></div>
<div class="a" style="left:828.5px;top:805.0px;width:40.0px;height:24.0px;background:#d88758;border-radius:4px;box-shadow:inset 0 0 2px rgba(0,0,0,0.45);"></div>
<div class="t" style="left:549.0px;width:600px;text-align:center;top:834.6px;font-size:10.5px;color:#1e1e1e;">7J</div>
<div class="a" style="left:876.0px;top:800.0px;width:50.0px;height:49.0px;background:linear-gradient(#b8b8b8 0%,#a0a0a0 30%,#727272 100%);border-radius:5px 5px 0 0;"></div>
<div class="a" style="left:880.5px;top:805.0px;width:40.0px;height:24.0px;background:#d28b69;border-radius:4px;box-shadow:inset 0 0 2px rgba(0,0,0,0.45);"></div>
<div class="t" style="left:601.0px;width:600px;text-align:center;top:834.6px;font-size:10.5px;color:#1e1e1e;">8D</div>
<div class="a" style="left:928.0px;top:800.0px;width:50.0px;height:49.0px;background:linear-gradient(#b8b8b8 0%,#a0a0a0 30%,#727272 100%);border-radius:5px 5px 0 0;"></div>
<div class="a" style="left:932.5px;top:805.0px;width:40.0px;height:24.0px;background:#fc9674;border-radius:4px;box-shadow:inset 0 0 2px rgba(0,0,0,0.45);"></div>
<div class="t" style="left:653.0px;width:600px;text-align:center;top:834.6px;font-size:10.5px;color:#1e1e1e;">8E</div>
<div class="a" style="left:980.0px;top:800.0px;width:50.0px;height:49.0px;background:linear-gradient(#b8b8b8 0%,#a0a0a0 30%,#727272 100%);border-radius:5px 5px 0 0;"></div>
<div class="a" style="left:984.5px;top:805.0px;width:40.0px;height:24.0px;background:#cf9270;border-radius:4px;box-shadow:inset 0 0 2px rgba(0,0,0,0.45);"></div>
<div class="t" style="left:705.0px;width:600px;text-align:center;top:834.6px;font-size:10.5px;color:#1e1e1e;">8F</div>
<div class="a" style="left:1032.0px;top:800.0px;width:50.0px;height:49.0px;background:linear-gradient(#b8b8b8 0%,#a0a0a0 30%,#727272 100%);border-radius:5px 5px 0 0;"></div>
<div class="a" style="left:1036.5px;top:805.0px;width:40.0px;height:24.0px;background:#cf8e6c;border-radius:4px;box-shadow:inset 0 0 2px rgba(0,0,0,0.45);"></div>
<div class="t" style="left:757.0px;width:600px;text-align:center;top:834.6px;font-size:10.5px;color:#1e1e1e;">8G</div>
<div class="a" style="left:1084.0px;top:800.0px;width:50.0px;height:49.0px;background:linear-gradient(#b8b8b8 0%,#a0a0a0 30%,#727272 100%);border-radius:5px 5px 0 0;"></div>
<div class="a" style="left:1088.5px;top:805.0px;width:40.0px;height:24.0px;background:#d49468;border-radius:4px;box-shadow:inset 0 0 2px rgba(0,0,0,0.45);"></div>
<div class="t" style="left:809.0px;width:600px;text-align:center;top:834.6px;font-size:10.5px;color:#1e1e1e;">8H</div>
<div class="a" style="left:1136.0px;top:800.0px;width:50.0px;height:49.0px;background:linear-gradient(#b8b8b8 0%,#a0a0a0 30%,#727272 100%);border-radius:5px 5px 0 0;"></div>
<div class="a" style="left:1140.5px;top:805.0px;width:40.0px;height:24.0px;background:#7b4a26;border-radius:4px;box-shadow:inset 0 0 2px rgba(0,0,0,0.45);"></div>
<div class="t" style="left:861.0px;width:600px;text-align:center;top:834.6px;font-size:10.5px;color:#1e1e1e;">8I</div>
<div class="a" style="left:1188.0px;top:800.0px;width:50.0px;height:48.0px;background:#262626;border-radius:4px 4px 0 0;"></div>
<div class="a" style="left:1192.5px;top:805.0px;width:40.0px;height:24.0px;background:#d98c5e;border-radius:4px;box-shadow:inset 0 0 2px rgba(0,0,0,0.45);"></div>
<div class="t" style="left:913.0px;width:600px;text-align:center;top:834.6px;font-size:10.5px;color:#f4f4f4;font-weight:bold;">8J</div>
<div class="a" style="left:-10.0px;top:800.0px;width:2.0px;height:48.5px;background:#262626;"></div>
<div class="a" style="left:-13.5px;top:846.5px;width:9.0px;height:2.0px;background:#262626;border-radius:2px 2px 0 0;"></div>
<div class="a" style="left:42.0px;top:800.0px;width:2.0px;height:48.5px;background:#262626;"></div>
<div class="a" style="left:38.5px;top:846.5px;width:9.0px;height:2.0px;background:#262626;border-radius:2px 2px 0 0;"></div>
<div class="a" style="left:94.0px;top:800.0px;width:2.0px;height:48.5px;background:#262626;"></div>
<div class="a" style="left:90.5px;top:846.5px;width:9.0px;height:2.0px;background:#262626;border-radius:2px 2px 0 0;"></div>
<div class="a" style="left:146.0px;top:800.0px;width:2.0px;height:48.5px;background:#262626;"></div>
<div class="a" style="left:142.5px;top:846.5px;width:9.0px;height:2.0px;background:#262626;border-radius:2px 2px 0 0;"></div>
<div class="a" style="left:198.0px;top:800.0px;width:2.0px;height:48.5px;background:#262626;"></div>
<div class="a" style="left:194.5px;top:846.5px;width:9.0px;height:2.0px;background:#262626;border-radius:2px 2px 0 0;"></div>
<div class="a" style="left:250.0px;top:800.0px;width:2.0px;height:48.5px;background:#262626;"></div>
<div class="a" style="left:246.5px;top:846.5px;width:9.0px;height:2.0px;background:#262626;border-radius:2px 2px 0 0;"></div>
<div class="a" style="left:302.0px;top:800.0px;width:2.0px;height:48.5px;background:#262626;"></div>
<div class="a" style="left:298.5px;top:846.5px;width:9.0px;height:2.0px;background:#262626;border-radius:2px 2px 0 0;"></div>
<div class="a" style="left:354.0px;top:800.0px;width:2.0px;height:48.5px;background:#262626;"></div>
<div class="a" style="left:350.5px;top:846.5px;width:9.0px;height:2.0px;background:#262626;border-radius:2px 2px 0 0;"></div>
<div class="a" style="left:406.0px;top:800.0px;width:2.0px;height:48.5px;background:#262626;"></div>
<div class="a" style="left:402.5px;top:846.5px;width:9.0px;height:2.0px;background:#262626;border-radius:2px 2px 0 0;"></div>
<div class="a" style="left:458.0px;top:800.0px;width:2.0px;height:48.5px;background:#262626;"></div>
<div class="a" style="left:454.5px;top:846.5px;width:9.0px;height:2.0px;background:#262626;border-radius:2px 2px 0 0;"></div>
<div class="a" style="left:510.0px;top:800.0px;width:2.0px;height:48.5px;background:#262626;"></div>
<div class="a" style="left:506.5px;top:846.5px;width:9.0px;height:2.0px;background:#262626;border-radius:2px 2px 0 0;"></div>
<div class="a" style="left:562.0px;top:800.0px;width:2.0px;height:48.5px;background:#262626;"></div>
<div class="a" style="left:558.5px;top:846.5px;width:9.0px;height:2.0px;background:#262626;border-radius:2px 2px 0 0;"></div>
<div class="a" style="left:614.0px;top:800.0px;width:2.0px;height:48.5px;background:#262626;"></div>
<div class="a" style="left:610.5px;top:846.5px;width:9.0px;height:2.0px;background:#262626;border-radius:2px 2px 0 0;"></div>
<div class="a" style="left:666.0px;top:800.0px;width:2.0px;height:48.5px;background:#262626;"></div>
<div class="a" style="left:662.5px;top:846.5px;width:9.0px;height:2.0px;background:#262626;border-radius:2px 2px 0 0;"></div>
<div class="a" style="left:718.0px;top:800.0px;width:2.0px;height:48.5px;background:#262626;"></div>
<div class="a" style="left:714.5px;top:846.5px;width:9.0px;height:2.0px;background:#262626;border-radius:2px 2px 0 0;"></div>
<div class="a" style="left:770.0px;top:800.0px;width:2.0px;height:48.5px;background:#262626;"></div>
<div class="a" style="left:766.5px;top:846.5px;width:9.0px;height:2.0px;background:#262626;border-radius:2px 2px 0 0;"></div>
<div class="a" style="left:822.0px;top:800.0px;width:2.0px;height:48.5px;background:#262626;"></div>
<div class="a" style="left:818.5px;top:846.5px;width:9.0px;height:2.0px;background:#262626;border-radius:2px 2px 0 0;"></div>
<div class="a" style="left:874.0px;top:800.0px;width:2.0px;height:48.5px;background:#262626;"></div>
<div class="a" style="left:870.5px;top:846.5px;width:9.0px;height:2.0px;background:#262626;border-radius:2px 2px 0 0;"></div>
<div class="a" style="left:926.0px;top:800.0px;width:2.0px;height:48.5px;background:#262626;"></div>
<div class="a" style="left:922.5px;top:846.5px;width:9.0px;height:2.0px;background:#262626;border-radius:2px 2px 0 0;"></div>
<div class="a" style="left:978.0px;top:800.0px;width:2.0px;height:48.5px;background:#262626;"></div>
<div class="a" style="left:974.5px;top:846.5px;width:9.0px;height:2.0px;background:#262626;border-radius:2px 2px 0 0;"></div>
<div class="a" style="left:1030.0px;top:800.0px;width:2.0px;height:48.5px;background:#262626;"></div>
<div class="a" style="left:1026.5px;top:846.5px;width:9.0px;height:2.0px;background:#262626;border-radius:2px 2px 0 0;"></div>
<div class="a" style="left:1082.0px;top:800.0px;width:2.0px;height:48.5px;background:#262626;"></div>
<div class="a" style="left:1078.5px;top:846.5px;width:9.0px;height:2.0px;background:#262626;border-radius:2px 2px 0 0;"></div>
<div class="a" style="left:1134.0px;top:800.0px;width:2.0px;height:48.5px;background:#262626;"></div>
<div class="a" style="left:1130.5px;top:846.5px;width:9.0px;height:2.0px;background:#262626;border-radius:2px 2px 0 0;"></div>
<div class="a" style="left:1186.0px;top:800.0px;width:2.0px;height:48.5px;background:#262626;"></div>
<div class="a" style="left:1182.5px;top:846.5px;width:9.0px;height:2.0px;background:#262626;border-radius:2px 2px 0 0;"></div>
<div class="a" style="left:1238.0px;top:800.0px;width:2.0px;height:48.5px;background:#262626;"></div>
<div class="a" style="left:1234.5px;top:846.5px;width:9.0px;height:2.0px;background:#262626;border-radius:2px 2px 0 0;"></div>
<div class="a" style="left:0.0px;top:848.5px;width:1240.0px;height:7.5px;background:#5e5e5e;"></div>
<div class="a" style="left:0.0px;top:849.0px;width:8.0px;height:7.0px;background:#8a8a8a;"></div>
<div class="a" style="left:608.0px;top:849.5px;width:618.0px;height:7.0px;background:#464646;border-radius:4px 4px 0 0;"></div>
<div class="a" style="left:1227.0px;top:849.0px;width:11.0px;height:7.0px;background:#8a8a8a;"></div>
<div class="a" style="left:1239.5px;top:800.0px;width:47.5px;height:18.0px;background:linear-gradient(#b4b4b4,#8e8e8e);border-radius:5px 5px 0 0;"></div>
<div class="a" style="left:1253.0px;top:802.0px;width:20.0px;height:14.0px;background:radial-gradient(circle at 50% 40%,#9a9a9a,#7e7e7e);border-radius:50%;"></div>
<svg class="a" style="left:1257px;top:805px" width="12" height="8"><path d="M1 7L6 1.5L11 7Z" fill="#303030"/></svg>
<div class="a" style="left:1239.5px;top:819.0px;width:47.5px;height:37.0px;background:linear-gradient(#b0b0b0,#8a8a8a);"></div>
<div class="a" style="left:1247.5px;top:824.0px;width:31.0px;height:32.0px;border:2.5px solid #222;border-radius:4px;background:linear-gradient(#b0b0b0 0,#a0a0a0 50%,#8c8c8c 50%,#8a8a8a);"></div>
<div class="a" style="left:1256.0px;top:833.0px;width:14.0px;height:13.0px;background:#000;"></div>
<div class="a" style="left:1288.0px;top:800.0px;width:46.5px;height:30.5px;background:linear-gradient(#b4b4b4,#929292 60%,#7e7e7e);"></div>
<div class="a" style="left:1301.2px;top:805.0px;width:20.0px;height:20.0px;border-radius:50%;background:linear-gradient(#808080,#b0b0b0);"></div>
<div class="a" style="left:1306.2px;top:810.0px;width:10.0px;height:10.0px;background:#2a2a2a;"></div>
<div class="a" style="left:1336.0px;top:800.0px;width:43.0px;height:30.5px;background:linear-gradient(#b4b4b4,#929292 60%,#7e7e7e);"></div>
<div class="a" style="left:1347.5px;top:805.0px;width:20.0px;height:20.0px;border-radius:50%;background:linear-gradient(#808080,#b0b0b0);"></div>
<svg class="a" style="left:1352.5px;top:809px" width="12" height="12"><path d="M1.5 1V11L10.5 6Z" fill="#2a2a2a"/></svg>
<div class="a" style="left:1380.5px;top:800.0px;width:43.5px;height:30.5px;background:linear-gradient(#b4b4b4,#929292 60%,#7e7e7e);"></div>
<div class="a" style="left:1392.2px;top:805.0px;width:20.0px;height:20.0px;border-radius:50%;background:linear-gradient(#808080,#b0b0b0);"></div>
<div class="t" style="left:1102.2px;width:600px;text-align:center;top:810.2px;font-size:11px;color:#2a2a2a;font-weight:bold;">[&middot;&middot;]</div>
<div class="a" style="left:1425.0px;top:800.0px;width:44.0px;height:30.5px;background:linear-gradient(#b4b4b4,#929292 60%,#7e7e7e);"></div>
<div class="a" style="left:1437.0px;top:805.0px;width:20.0px;height:20.0px;border-radius:50%;background:linear-gradient(#808080,#b0b0b0);"></div>
<div class="t" style="left:1147.0px;width:600px;text-align:center;top:806.1px;font-size:17px;color:#2a2a2a;font-weight:bold;">&infin;</div>
<div class="a" style="left:1469.5px;top:800.0px;width:45.0px;height:30.5px;background:linear-gradient(#3a3a3a,#262626);"></div>
<div class="a" style="left:1482.0px;top:805.0px;width:20.0px;height:20.0px;border-radius:50%;background:radial-gradient(circle at 50% 35%,#303030,#242424);"></div>
<svg class="a" style="left:1485.0px;top:808px" width="14" height="14"><path d="M2.5 6A4.5 4.5 0 0 1 11 4.5M11.5 8A4.5 4.5 0 0 1 3 9.5" stroke="#1a1a1a" stroke-width="2.2" fill="none"/><path d="M9 2L12.5 5L8.5 6Z M5 12L1.5 9L5.5 8Z" fill="#1a1a1a"/></svg>
<div class="a" style="left:1515.5px;top:800.0px;width:43.5px;height:30.5px;background:linear-gradient(#b4b4b4,#929292 60%,#7e7e7e);"></div>
<div class="a" style="left:1527.2px;top:805.0px;width:20.0px;height:20.0px;border-radius:50%;background:linear-gradient(#808080,#b0b0b0);"></div>
<div class="a" style="left:1288.0px;top:830.5px;width:136.0px;height:26.0px;background:linear-gradient(#c4c4c4,#9a9a9a 70%,#8c8c8c);border-radius:5px 0 0 0;border-right:1px solid #333;"></div>
<div class="a" style="left:1425.0px;top:830.5px;width:134.0px;height:26.0px;background:linear-gradient(#c4c4c4,#9a9a9a 70%,#8c8c8c);"></div>
<div class="a" style="left:1310.0px;top:836.0px;width:20.0px;height:20.0px;border-radius:50%;background:linear-gradient(#808080,#b0b0b0);"></div>
<div class="t" style="left:1020.0px;width:600px;text-align:center;top:837.5px;font-size:16px;color:#2a2a2a;">&laquo;</div>
<div class="t" style="left:1345.5px;top:836.6px;font-size:23.5px;color:#262626;-webkit-text-stroke:0.5px #262626;">Back</div>
<div class="t" style="left:1452.5px;top:836.6px;font-size:23.5px;color:#262626;-webkit-text-stroke:0.5px #262626;">Next</div>
<div class="a" style="left:1522.0px;top:836.0px;width:20.0px;height:20.0px;border-radius:50%;background:linear-gradient(#808080,#b0b0b0);"></div>
<div class="t" style="left:1232.0px;width:600px;text-align:center;top:837.5px;font-size:16px;color:#2a2a2a;">&raquo;</div>
<!--END-->
</body></html>
